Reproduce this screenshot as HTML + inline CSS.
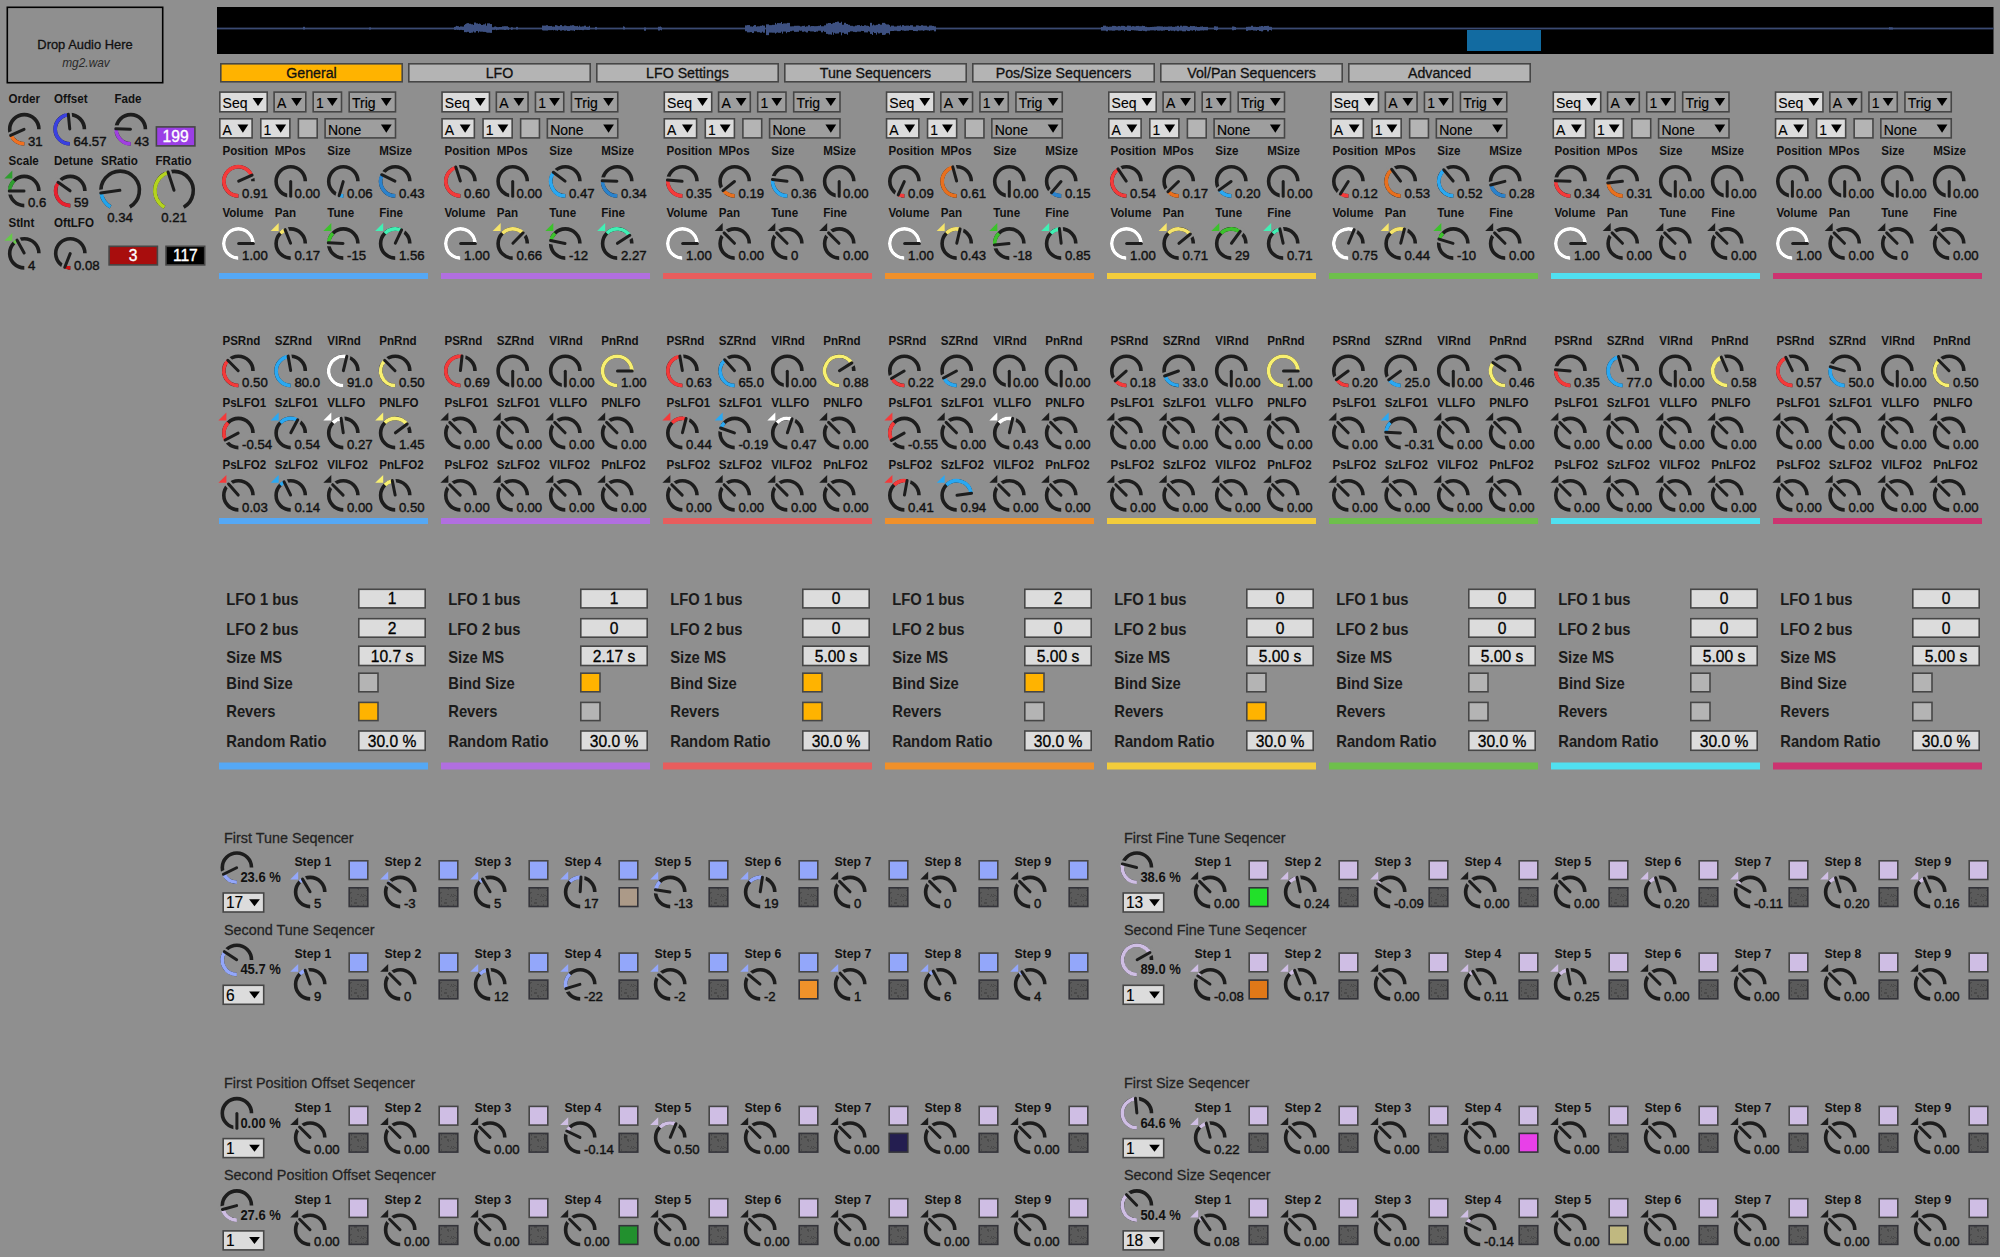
<!DOCTYPE html>
<html><head><meta charset="utf-8"><style>
html,body{margin:0;padding:0;background:#8f8f8f;overflow:hidden}
svg{display:block}
text{font-family:"Liberation Sans", sans-serif}
</style></head><body>
<svg width="2000" height="1257" viewBox="0 0 2000 1257">
<rect x="0" y="0" width="2000" height="1257" fill="#8f8f8f"/>
<defs><pattern id="nz" patternUnits="userSpaceOnUse" width="18" height="18"><rect width="18" height="18" fill="#5a5a5a"/><rect x="14" y="17" width="1" height="1" fill="#4a4a4a"/><rect x="16" y="6" width="1" height="2" fill="#4a4a4a"/><rect x="15" y="5" width="1" height="1" fill="#4a4a4a"/><rect x="9" y="4" width="1" height="2" fill="#4a4a4a"/><rect x="1" y="12" width="1" height="2" fill="#4a4a4a"/><rect x="5" y="0" width="2" height="1" fill="#4a4a4a"/><rect x="1" y="1" width="1" height="1" fill="#4a4a4a"/><rect x="0" y="14" width="1" height="1" fill="#4a4a4a"/><rect x="6" y="16" width="1" height="2" fill="#4a4a4a"/><rect x="9" y="15" width="1" height="2" fill="#4a4a4a"/><rect x="2" y="14" width="2" height="1" fill="#4a4a4a"/><rect x="13" y="17" width="1" height="2" fill="#4a4a4a"/><rect x="8" y="10" width="1" height="2" fill="#4a4a4a"/><rect x="9" y="0" width="1" height="2" fill="#4a4a4a"/><rect x="3" y="12" width="1" height="1" fill="#4a4a4a"/><rect x="12" y="2" width="1" height="2" fill="#4a4a4a"/><rect x="0" y="6" width="1" height="1" fill="#4a4a4a"/><rect x="15" y="12" width="2" height="1" fill="#4a4a4a"/><rect x="13" y="2" width="2" height="2" fill="#4a4a4a"/><rect x="6" y="8" width="1" height="1" fill="#4a4a4a"/><rect x="9" y="10" width="1" height="1" fill="#4a4a4a"/><rect x="3" y="4" width="1" height="2" fill="#4a4a4a"/><rect x="3" y="0" width="1" height="1" fill="#4a4a4a"/><rect x="15" y="5" width="2" height="2" fill="#4a4a4a"/><rect x="6" y="14" width="2" height="1" fill="#4a4a4a"/><rect x="4" y="13" width="2" height="1" fill="#4a4a4a"/></pattern></defs>
<rect x="7.30" y="7.30" width="155.40" height="75.40" fill="none" stroke="#000" stroke-width="1.6"/>
<text transform="translate(85.00,49.00) scale(1,1.0)" font-size="12.9" font-weight="normal" text-anchor="middle" fill="#111" stroke="#111" stroke-width="0.3">Drop Audio Here</text>
<text transform="translate(86.00,66.50) scale(1,1.11)" font-size="11.9" font-weight="normal" text-anchor="middle" fill="#2a2a2a" font-style="italic">mg2.wav</text>
<rect x="217.00" y="7.00" width="1776.50" height="47.00" fill="#000"/>
<rect x="217.00" y="27.60" width="1776.50" height="1.80" fill="#3a4a72"/>
<rect x="303.00" y="26.82" width="2.00" height="2.68" fill="#3d5080"/>
<rect x="369.00" y="27.50" width="1.00" height="2.00" fill="#3d5080"/>
<rect x="370.00" y="27.40" width="1.00" height="2.10" fill="#3d5080"/>
<rect x="454.00" y="26.95" width="1.00" height="2.81" fill="#3d5080"/>
<rect x="455.00" y="26.67" width="1.00" height="3.19" fill="#3d5080"/>
<rect x="456.00" y="25.86" width="1.00" height="3.64" fill="#3d5080"/>
<rect x="457.00" y="26.13" width="1.00" height="3.75" fill="#3d5080"/>
<rect x="458.00" y="26.21" width="1.00" height="3.52" fill="#3d5080"/>
<rect x="459.00" y="26.94" width="1.00" height="3.17" fill="#3d5080"/>
<rect x="460.00" y="26.42" width="2.00" height="3.42" fill="#3d5080"/>
<rect x="462.00" y="26.58" width="2.00" height="3.50" fill="#3d5080"/>
<rect x="464.00" y="24.89" width="1.00" height="7.27" fill="#3d5080"/>
<rect x="465.00" y="24.07" width="1.00" height="8.03" fill="#3d5080"/>
<rect x="466.00" y="23.49" width="1.00" height="8.77" fill="#3d5080"/>
<rect x="467.00" y="23.14" width="2.00" height="8.70" fill="#3d5080"/>
<rect x="469.00" y="23.79" width="2.00" height="9.14" fill="#3d5080"/>
<rect x="471.00" y="24.29" width="2.00" height="8.35" fill="#3d5080"/>
<rect x="473.00" y="24.95" width="1.00" height="6.61" fill="#3d5080"/>
<rect x="474.00" y="22.55" width="2.00" height="9.95" fill="#3d5080"/>
<rect x="476.00" y="23.36" width="2.00" height="7.70" fill="#3d5080"/>
<rect x="478.00" y="23.94" width="1.00" height="8.63" fill="#3d5080"/>
<rect x="479.00" y="23.49" width="1.00" height="7.92" fill="#3d5080"/>
<rect x="480.00" y="23.91" width="1.00" height="7.80" fill="#3d5080"/>
<rect x="481.00" y="24.96" width="2.00" height="6.71" fill="#3d5080"/>
<rect x="483.00" y="24.36" width="2.00" height="7.54" fill="#3d5080"/>
<rect x="485.00" y="23.46" width="1.00" height="8.48" fill="#3d5080"/>
<rect x="486.00" y="25.65" width="1.00" height="6.79" fill="#3d5080"/>
<rect x="487.00" y="23.34" width="3.00" height="9.37" fill="#3d5080"/>
<rect x="490.00" y="24.03" width="2.00" height="8.83" fill="#3d5080"/>
<rect x="492.00" y="27.28" width="2.00" height="2.51" fill="#3d5080"/>
<rect x="494.00" y="26.63" width="1.00" height="3.18" fill="#3d5080"/>
<rect x="495.00" y="26.45" width="1.00" height="3.05" fill="#3d5080"/>
<rect x="496.00" y="26.86" width="1.00" height="3.29" fill="#3d5080"/>
<rect x="497.00" y="27.21" width="2.00" height="2.56" fill="#3d5080"/>
<rect x="499.00" y="26.99" width="3.00" height="2.52" fill="#3d5080"/>
<rect x="502.00" y="26.35" width="2.00" height="3.28" fill="#3d5080"/>
<rect x="504.00" y="26.21" width="2.00" height="3.75" fill="#3d5080"/>
<rect x="506.00" y="26.25" width="2.00" height="3.28" fill="#3d5080"/>
<rect x="508.00" y="27.13" width="1.00" height="2.81" fill="#3d5080"/>
<rect x="511.00" y="27.20" width="1.00" height="2.69" fill="#3d5080"/>
<rect x="512.00" y="27.37" width="1.00" height="2.15" fill="#3d5080"/>
<rect x="516.00" y="26.89" width="2.00" height="2.61" fill="#3d5080"/>
<rect x="542.00" y="25.56" width="1.00" height="4.71" fill="#3d5080"/>
<rect x="543.00" y="25.62" width="3.00" height="4.89" fill="#3d5080"/>
<rect x="546.00" y="25.22" width="2.00" height="5.34" fill="#3d5080"/>
<rect x="548.00" y="26.05" width="3.00" height="4.09" fill="#3d5080"/>
<rect x="551.00" y="25.91" width="1.00" height="4.23" fill="#3d5080"/>
<rect x="552.00" y="26.59" width="1.00" height="3.34" fill="#3d5080"/>
<rect x="553.00" y="26.52" width="1.00" height="3.84" fill="#3d5080"/>
<rect x="554.00" y="26.70" width="1.00" height="3.17" fill="#3d5080"/>
<rect x="555.00" y="25.13" width="1.00" height="5.24" fill="#3d5080"/>
<rect x="556.00" y="25.26" width="1.00" height="5.12" fill="#3d5080"/>
<rect x="557.00" y="25.65" width="1.00" height="5.10" fill="#3d5080"/>
<rect x="558.00" y="26.10" width="2.00" height="3.74" fill="#3d5080"/>
<rect x="560.00" y="25.06" width="2.00" height="5.58" fill="#3d5080"/>
<rect x="562.00" y="26.19" width="2.00" height="4.01" fill="#3d5080"/>
<rect x="564.00" y="25.48" width="2.00" height="5.18" fill="#3d5080"/>
<rect x="566.00" y="25.85" width="1.00" height="4.43" fill="#3d5080"/>
<rect x="567.00" y="26.10" width="3.00" height="4.85" fill="#3d5080"/>
<rect x="570.00" y="25.45" width="1.00" height="4.96" fill="#3d5080"/>
<rect x="571.00" y="25.55" width="1.00" height="4.81" fill="#3d5080"/>
<rect x="572.00" y="25.20" width="2.00" height="5.29" fill="#3d5080"/>
<rect x="574.00" y="25.82" width="1.00" height="5.25" fill="#3d5080"/>
<rect x="575.00" y="26.12" width="2.00" height="3.78" fill="#3d5080"/>
<rect x="577.00" y="25.89" width="1.00" height="4.18" fill="#3d5080"/>
<rect x="578.00" y="26.73" width="1.00" height="3.08" fill="#3d5080"/>
<rect x="579.00" y="25.64" width="1.00" height="4.41" fill="#3d5080"/>
<rect x="580.00" y="26.64" width="2.00" height="3.33" fill="#3d5080"/>
<rect x="582.00" y="26.39" width="2.00" height="3.79" fill="#3d5080"/>
<rect x="584.00" y="25.69" width="2.00" height="4.01" fill="#3d5080"/>
<rect x="586.00" y="26.86" width="1.00" height="2.93" fill="#3d5080"/>
<rect x="587.00" y="26.72" width="2.00" height="3.20" fill="#3d5080"/>
<rect x="589.00" y="25.84" width="1.00" height="3.95" fill="#3d5080"/>
<rect x="595.00" y="26.94" width="2.00" height="2.56" fill="#3d5080"/>
<rect x="623.00" y="26.30" width="1.00" height="3.20" fill="#3d5080"/>
<rect x="624.00" y="26.77" width="1.00" height="2.73" fill="#3d5080"/>
<rect x="644.00" y="27.50" width="2.00" height="3.24" fill="#3d5080"/>
<rect x="658.00" y="26.79" width="2.00" height="3.73" fill="#3d5080"/>
<rect x="660.00" y="26.50" width="1.00" height="3.38" fill="#3d5080"/>
<rect x="661.00" y="27.27" width="1.00" height="3.08" fill="#3d5080"/>
<rect x="745.00" y="25.37" width="2.00" height="5.85" fill="#3d5080"/>
<rect x="747.00" y="25.08" width="3.00" height="7.26" fill="#3d5080"/>
<rect x="750.00" y="26.44" width="2.00" height="5.66" fill="#3d5080"/>
<rect x="752.00" y="26.68" width="1.00" height="6.36" fill="#3d5080"/>
<rect x="753.00" y="25.83" width="1.00" height="7.12" fill="#3d5080"/>
<rect x="754.00" y="25.07" width="2.00" height="6.26" fill="#3d5080"/>
<rect x="756.00" y="26.65" width="1.00" height="4.71" fill="#3d5080"/>
<rect x="757.00" y="26.30" width="3.00" height="5.89" fill="#3d5080"/>
<rect x="760.00" y="25.80" width="2.00" height="6.93" fill="#3d5080"/>
<rect x="762.00" y="25.20" width="1.00" height="6.48" fill="#3d5080"/>
<rect x="763.00" y="25.61" width="2.00" height="7.09" fill="#3d5080"/>
<rect x="766.00" y="24.34" width="3.00" height="10.79" fill="#3d5080"/>
<rect x="769.00" y="25.14" width="3.00" height="7.46" fill="#3d5080"/>
<rect x="772.00" y="24.84" width="3.00" height="7.87" fill="#3d5080"/>
<rect x="775.00" y="22.89" width="1.00" height="10.74" fill="#3d5080"/>
<rect x="776.00" y="24.33" width="1.00" height="8.47" fill="#3d5080"/>
<rect x="777.00" y="23.06" width="1.00" height="9.33" fill="#3d5080"/>
<rect x="778.00" y="23.15" width="3.00" height="9.68" fill="#3d5080"/>
<rect x="781.00" y="21.99" width="1.00" height="9.67" fill="#3d5080"/>
<rect x="782.00" y="23.99" width="1.00" height="9.64" fill="#3d5080"/>
<rect x="783.00" y="23.41" width="3.00" height="8.17" fill="#3d5080"/>
<rect x="786.00" y="23.44" width="1.00" height="9.75" fill="#3d5080"/>
<rect x="787.00" y="22.90" width="3.00" height="9.15" fill="#3d5080"/>
<rect x="790.00" y="26.38" width="2.00" height="4.80" fill="#3d5080"/>
<rect x="792.00" y="26.30" width="2.00" height="4.41" fill="#3d5080"/>
<rect x="794.00" y="25.79" width="3.00" height="6.06" fill="#3d5080"/>
<rect x="797.00" y="25.73" width="2.00" height="6.04" fill="#3d5080"/>
<rect x="799.00" y="25.85" width="1.00" height="4.68" fill="#3d5080"/>
<rect x="800.00" y="26.46" width="1.00" height="4.36" fill="#3d5080"/>
<rect x="801.00" y="26.41" width="1.00" height="4.24" fill="#3d5080"/>
<rect x="802.00" y="25.92" width="2.00" height="5.86" fill="#3d5080"/>
<rect x="804.00" y="25.71" width="1.00" height="5.65" fill="#3d5080"/>
<rect x="805.00" y="26.80" width="1.00" height="4.95" fill="#3d5080"/>
<rect x="806.00" y="26.34" width="2.00" height="6.10" fill="#3d5080"/>
<rect x="808.00" y="25.24" width="2.00" height="5.67" fill="#3d5080"/>
<rect x="810.00" y="26.43" width="1.00" height="5.00" fill="#3d5080"/>
<rect x="811.00" y="26.03" width="3.00" height="5.38" fill="#3d5080"/>
<rect x="814.00" y="26.17" width="2.00" height="5.82" fill="#3d5080"/>
<rect x="816.00" y="26.14" width="1.00" height="5.34" fill="#3d5080"/>
<rect x="817.00" y="26.07" width="1.00" height="5.53" fill="#3d5080"/>
<rect x="818.00" y="25.85" width="2.00" height="4.87" fill="#3d5080"/>
<rect x="820.00" y="25.10" width="1.00" height="5.70" fill="#3d5080"/>
<rect x="821.00" y="26.25" width="2.00" height="6.09" fill="#3d5080"/>
<rect x="823.00" y="26.25" width="1.00" height="4.60" fill="#3d5080"/>
<rect x="824.00" y="25.30" width="2.00" height="6.60" fill="#3d5080"/>
<rect x="826.00" y="23.56" width="2.00" height="10.31" fill="#3d5080"/>
<rect x="828.00" y="23.02" width="3.00" height="11.39" fill="#3d5080"/>
<rect x="831.00" y="23.98" width="1.00" height="10.76" fill="#3d5080"/>
<rect x="832.00" y="23.50" width="1.00" height="8.84" fill="#3d5080"/>
<rect x="833.00" y="22.81" width="1.00" height="11.94" fill="#3d5080"/>
<rect x="834.00" y="22.89" width="1.00" height="9.94" fill="#3d5080"/>
<rect x="835.00" y="22.05" width="2.00" height="11.54" fill="#3d5080"/>
<rect x="837.00" y="21.62" width="2.00" height="11.86" fill="#3d5080"/>
<rect x="839.00" y="22.85" width="2.00" height="9.39" fill="#3d5080"/>
<rect x="841.00" y="21.80" width="1.00" height="13.49" fill="#3d5080"/>
<rect x="842.00" y="24.73" width="2.00" height="8.03" fill="#3d5080"/>
<rect x="844.00" y="22.83" width="2.00" height="11.03" fill="#3d5080"/>
<rect x="846.00" y="23.94" width="1.00" height="9.81" fill="#3d5080"/>
<rect x="847.00" y="24.01" width="1.00" height="10.74" fill="#3d5080"/>
<rect x="848.00" y="24.78" width="2.00" height="7.38" fill="#3d5080"/>
<rect x="850.00" y="25.79" width="3.00" height="5.53" fill="#3d5080"/>
<rect x="853.00" y="26.29" width="2.00" height="5.59" fill="#3d5080"/>
<rect x="855.00" y="25.62" width="2.00" height="6.48" fill="#3d5080"/>
<rect x="857.00" y="25.10" width="2.00" height="6.48" fill="#3d5080"/>
<rect x="859.00" y="25.08" width="1.00" height="6.57" fill="#3d5080"/>
<rect x="860.00" y="26.03" width="1.00" height="5.63" fill="#3d5080"/>
<rect x="861.00" y="25.32" width="1.00" height="5.61" fill="#3d5080"/>
<rect x="862.00" y="25.99" width="2.00" height="5.03" fill="#3d5080"/>
<rect x="864.00" y="25.26" width="2.00" height="7.11" fill="#3d5080"/>
<rect x="866.00" y="25.71" width="2.00" height="6.71" fill="#3d5080"/>
<rect x="868.00" y="25.94" width="1.00" height="5.30" fill="#3d5080"/>
<rect x="869.00" y="26.69" width="1.00" height="5.01" fill="#3d5080"/>
<rect x="870.00" y="22.83" width="2.00" height="11.08" fill="#3d5080"/>
<rect x="872.00" y="25.41" width="1.00" height="9.61" fill="#3d5080"/>
<rect x="873.00" y="24.52" width="1.00" height="7.58" fill="#3d5080"/>
<rect x="874.00" y="25.27" width="2.00" height="7.75" fill="#3d5080"/>
<rect x="876.00" y="24.82" width="1.00" height="9.84" fill="#3d5080"/>
<rect x="877.00" y="24.77" width="1.00" height="7.62" fill="#3d5080"/>
<rect x="878.00" y="23.89" width="2.00" height="9.51" fill="#3d5080"/>
<rect x="880.00" y="24.66" width="2.00" height="8.20" fill="#3d5080"/>
<rect x="882.00" y="22.87" width="3.00" height="12.05" fill="#3d5080"/>
<rect x="885.00" y="23.69" width="1.00" height="10.77" fill="#3d5080"/>
<rect x="886.00" y="24.43" width="3.00" height="8.75" fill="#3d5080"/>
<rect x="889.00" y="25.09" width="1.00" height="9.40" fill="#3d5080"/>
<rect x="890.00" y="26.63" width="1.00" height="4.52" fill="#3d5080"/>
<rect x="891.00" y="25.66" width="3.00" height="5.34" fill="#3d5080"/>
<rect x="894.00" y="26.47" width="3.00" height="4.25" fill="#3d5080"/>
<rect x="897.00" y="25.76" width="3.00" height="5.36" fill="#3d5080"/>
<rect x="900.00" y="25.34" width="1.00" height="5.47" fill="#3d5080"/>
<rect x="901.00" y="26.56" width="1.00" height="3.50" fill="#3d5080"/>
<rect x="902.00" y="25.12" width="2.00" height="5.40" fill="#3d5080"/>
<rect x="904.00" y="25.78" width="2.00" height="5.08" fill="#3d5080"/>
<rect x="906.00" y="25.58" width="3.00" height="5.10" fill="#3d5080"/>
<rect x="909.00" y="25.95" width="1.00" height="4.15" fill="#3d5080"/>
<rect x="910.00" y="25.22" width="3.00" height="4.91" fill="#3d5080"/>
<rect x="913.00" y="26.59" width="3.00" height="4.42" fill="#3d5080"/>
<rect x="916.00" y="25.36" width="2.00" height="5.80" fill="#3d5080"/>
<rect x="918.00" y="25.50" width="1.00" height="4.79" fill="#3d5080"/>
<rect x="919.00" y="25.88" width="2.00" height="4.64" fill="#3d5080"/>
<rect x="921.00" y="25.20" width="2.00" height="5.20" fill="#3d5080"/>
<rect x="923.00" y="25.68" width="1.00" height="5.20" fill="#3d5080"/>
<rect x="924.00" y="25.71" width="1.00" height="4.75" fill="#3d5080"/>
<rect x="925.00" y="25.68" width="2.00" height="4.51" fill="#3d5080"/>
<rect x="927.00" y="26.60" width="2.00" height="3.77" fill="#3d5080"/>
<rect x="929.00" y="25.56" width="1.00" height="5.37" fill="#3d5080"/>
<rect x="930.00" y="25.53" width="2.00" height="4.86" fill="#3d5080"/>
<rect x="932.00" y="25.93" width="2.00" height="4.23" fill="#3d5080"/>
<rect x="934.00" y="26.37" width="2.00" height="4.97" fill="#3d5080"/>
<rect x="1101.00" y="26.98" width="2.00" height="3.66" fill="#3d5080"/>
<rect x="1103.00" y="25.67" width="3.00" height="4.95" fill="#3d5080"/>
<rect x="1106.00" y="26.47" width="2.00" height="4.79" fill="#3d5080"/>
<rect x="1108.00" y="26.90" width="1.00" height="3.23" fill="#3d5080"/>
<rect x="1109.00" y="26.64" width="3.00" height="3.85" fill="#3d5080"/>
<rect x="1112.00" y="25.87" width="3.00" height="4.83" fill="#3d5080"/>
<rect x="1115.00" y="26.03" width="1.00" height="4.29" fill="#3d5080"/>
<rect x="1116.00" y="26.46" width="2.00" height="3.76" fill="#3d5080"/>
<rect x="1118.00" y="26.06" width="2.00" height="4.49" fill="#3d5080"/>
<rect x="1120.00" y="26.43" width="1.00" height="4.09" fill="#3d5080"/>
<rect x="1121.00" y="25.84" width="1.00" height="4.16" fill="#3d5080"/>
<rect x="1122.00" y="25.85" width="2.00" height="4.32" fill="#3d5080"/>
<rect x="1124.00" y="26.02" width="1.00" height="5.22" fill="#3d5080"/>
<rect x="1125.00" y="26.65" width="2.00" height="3.44" fill="#3d5080"/>
<rect x="1127.00" y="25.63" width="2.00" height="5.18" fill="#3d5080"/>
<rect x="1129.00" y="25.73" width="2.00" height="5.31" fill="#3d5080"/>
<rect x="1131.00" y="26.61" width="1.00" height="3.46" fill="#3d5080"/>
<rect x="1132.00" y="26.13" width="2.00" height="4.08" fill="#3d5080"/>
<rect x="1134.00" y="26.40" width="2.00" height="4.03" fill="#3d5080"/>
<rect x="1136.00" y="25.92" width="2.00" height="4.67" fill="#3d5080"/>
<rect x="1138.00" y="25.88" width="1.00" height="4.98" fill="#3d5080"/>
<rect x="1139.00" y="26.24" width="3.00" height="4.74" fill="#3d5080"/>
<rect x="1142.00" y="25.72" width="1.00" height="4.85" fill="#3d5080"/>
<rect x="1143.00" y="25.97" width="2.00" height="4.92" fill="#3d5080"/>
<rect x="1145.00" y="26.77" width="2.00" height="4.49" fill="#3d5080"/>
<rect x="1147.00" y="27.16" width="3.00" height="3.49" fill="#3d5080"/>
<rect x="1150.00" y="26.99" width="2.00" height="3.36" fill="#3d5080"/>
<rect x="1152.00" y="26.85" width="2.00" height="3.47" fill="#3d5080"/>
<rect x="1154.00" y="26.69" width="2.00" height="3.86" fill="#3d5080"/>
<rect x="1156.00" y="26.59" width="1.00" height="3.51" fill="#3d5080"/>
<rect x="1157.00" y="26.30" width="3.00" height="4.38" fill="#3d5080"/>
<rect x="1160.00" y="26.38" width="1.00" height="4.08" fill="#3d5080"/>
<rect x="1161.00" y="26.41" width="2.00" height="4.34" fill="#3d5080"/>
<rect x="1163.00" y="26.88" width="1.00" height="3.59" fill="#3d5080"/>
<rect x="1164.00" y="26.56" width="1.00" height="3.95" fill="#3d5080"/>
<rect x="1165.00" y="26.72" width="3.00" height="3.31" fill="#3d5080"/>
<rect x="1168.00" y="26.47" width="2.00" height="4.55" fill="#3d5080"/>
<rect x="1170.00" y="26.48" width="1.00" height="3.98" fill="#3d5080"/>
<rect x="1171.00" y="26.32" width="1.00" height="4.47" fill="#3d5080"/>
<rect x="1172.00" y="26.83" width="2.00" height="3.87" fill="#3d5080"/>
<rect x="1174.00" y="26.87" width="1.00" height="4.36" fill="#3d5080"/>
<rect x="1175.00" y="26.45" width="2.00" height="4.16" fill="#3d5080"/>
<rect x="1177.00" y="25.83" width="2.00" height="5.37" fill="#3d5080"/>
<rect x="1179.00" y="26.83" width="1.00" height="3.76" fill="#3d5080"/>
<rect x="1180.00" y="25.67" width="2.00" height="5.00" fill="#3d5080"/>
<rect x="1182.00" y="26.46" width="1.00" height="4.81" fill="#3d5080"/>
<rect x="1183.00" y="25.82" width="3.00" height="5.51" fill="#3d5080"/>
<rect x="1186.00" y="25.92" width="1.00" height="4.38" fill="#3d5080"/>
<rect x="1187.00" y="26.28" width="1.00" height="4.66" fill="#3d5080"/>
<rect x="1188.00" y="26.88" width="2.00" height="4.19" fill="#3d5080"/>
<rect x="1190.00" y="25.92" width="1.00" height="4.40" fill="#3d5080"/>
<rect x="1191.00" y="26.11" width="1.00" height="4.31" fill="#3d5080"/>
<rect x="1192.00" y="26.14" width="1.00" height="4.59" fill="#3d5080"/>
<rect x="1193.00" y="26.04" width="2.00" height="4.11" fill="#3d5080"/>
<rect x="1195.00" y="26.59" width="1.00" height="4.71" fill="#3d5080"/>
<rect x="1196.00" y="26.47" width="1.00" height="3.84" fill="#3d5080"/>
<rect x="1197.00" y="27.00" width="3.00" height="3.74" fill="#3d5080"/>
<rect x="1200.00" y="26.62" width="2.00" height="3.82" fill="#3d5080"/>
<rect x="1202.00" y="26.35" width="1.00" height="3.98" fill="#3d5080"/>
<rect x="1203.00" y="26.96" width="1.00" height="3.61" fill="#3d5080"/>
<rect x="1204.00" y="26.92" width="2.00" height="3.34" fill="#3d5080"/>
<rect x="1206.00" y="26.89" width="2.00" height="3.42" fill="#3d5080"/>
<rect x="1214.00" y="26.28" width="2.00" height="3.67" fill="#3d5080"/>
<rect x="1216.00" y="26.53" width="1.00" height="3.96" fill="#3d5080"/>
<rect x="1217.00" y="26.55" width="1.00" height="3.37" fill="#3d5080"/>
<rect x="1232.00" y="26.49" width="2.00" height="3.77" fill="#3d5080"/>
<rect x="1234.00" y="26.75" width="1.00" height="3.17" fill="#3d5080"/>
<rect x="1235.00" y="27.05" width="1.00" height="2.90" fill="#3d5080"/>
<rect x="1246.00" y="26.85" width="2.00" height="4.01" fill="#3d5080"/>
<rect x="1248.00" y="26.74" width="3.00" height="3.56" fill="#3d5080"/>
<rect x="1251.00" y="25.75" width="2.00" height="4.33" fill="#3d5080"/>
<rect x="1253.00" y="26.80" width="3.00" height="3.74" fill="#3d5080"/>
<rect x="1256.00" y="26.97" width="1.00" height="3.85" fill="#3d5080"/>
<rect x="1257.00" y="26.93" width="2.00" height="3.15" fill="#3d5080"/>
<rect x="1259.00" y="26.38" width="2.00" height="4.60" fill="#3d5080"/>
<rect x="1261.00" y="25.99" width="2.00" height="5.38" fill="#3d5080"/>
<rect x="1263.00" y="26.55" width="1.00" height="3.71" fill="#3d5080"/>
<rect x="1264.00" y="25.97" width="3.00" height="4.07" fill="#3d5080"/>
<rect x="1267.00" y="25.85" width="2.00" height="5.51" fill="#3d5080"/>
<rect x="1269.00" y="26.77" width="2.00" height="3.24" fill="#3d5080"/>
<rect x="1271.00" y="26.89" width="1.00" height="3.69" fill="#3d5080"/>
<rect x="1889.00" y="27.14" width="1.00" height="2.36" fill="#3d5080"/>
<rect x="1890.00" y="27.31" width="2.00" height="2.19" fill="#3d5080"/>
<rect x="1892.00" y="27.50" width="1.00" height="2.00" fill="#3d5080"/>
<rect x="1467.00" y="30.00" width="74.00" height="21.00" fill="#126ba1"/>
<rect x="220.80" y="63.80" width="181.40" height="18.00" fill="#ffb300" stroke="#464646" stroke-width="1.6"/>
<text transform="translate(311.50,77.50) scale(1,1.04)" font-size="14.2" font-weight="normal" text-anchor="middle" fill="#111" stroke="#111" stroke-width="0.3">General</text>
<rect x="408.80" y="63.80" width="181.40" height="18.00" fill="#b4b4b4" stroke="#464646" stroke-width="1.6"/>
<text transform="translate(499.50,77.50) scale(1,1.04)" font-size="14.2" font-weight="normal" text-anchor="middle" fill="#111" stroke="#111" stroke-width="0.3">LFO</text>
<rect x="596.80" y="63.80" width="181.40" height="18.00" fill="#b4b4b4" stroke="#464646" stroke-width="1.6"/>
<text transform="translate(687.50,77.50) scale(1,1.04)" font-size="14.2" font-weight="normal" text-anchor="middle" fill="#111" stroke="#111" stroke-width="0.3">LFO Settings</text>
<rect x="784.80" y="63.80" width="181.40" height="18.00" fill="#b4b4b4" stroke="#464646" stroke-width="1.6"/>
<text transform="translate(875.50,77.50) scale(1,1.04)" font-size="14.2" font-weight="normal" text-anchor="middle" fill="#111" stroke="#111" stroke-width="0.3">Tune Sequencers</text>
<rect x="972.80" y="63.80" width="181.40" height="18.00" fill="#b4b4b4" stroke="#464646" stroke-width="1.6"/>
<text transform="translate(1063.50,77.50) scale(1,1.04)" font-size="14.2" font-weight="normal" text-anchor="middle" fill="#111" stroke="#111" stroke-width="0.3">Pos/Size Sequencers</text>
<rect x="1160.80" y="63.80" width="181.40" height="18.00" fill="#b4b4b4" stroke="#464646" stroke-width="1.6"/>
<text transform="translate(1251.50,77.50) scale(1,1.04)" font-size="14.2" font-weight="normal" text-anchor="middle" fill="#111" stroke="#111" stroke-width="0.3">Vol/Pan Sequencers</text>
<rect x="1348.80" y="63.80" width="181.40" height="18.00" fill="#b4b4b4" stroke="#464646" stroke-width="1.6"/>
<text transform="translate(1439.50,77.50) scale(1,1.04)" font-size="14.2" font-weight="normal" text-anchor="middle" fill="#111" stroke="#111" stroke-width="0.3">Advanced</text>
<rect x="219.80" y="92.10" width="47.40" height="19.70" fill="#dcdcdc" stroke="#464646" stroke-width="1.6"/>
<text transform="translate(222.60,107.80) scale(1,1.11)" font-size="14" font-weight="normal" text-anchor="start" fill="#000" stroke="#000" stroke-width="0.15">Seq</text>
<path d="M252.60 97.90L263.40 97.90L258.00 106.00Z" fill="#000"/>
<rect x="274.10" y="92.10" width="31.70" height="19.70" fill="#9e9e9e" stroke="#464646" stroke-width="1.6"/>
<text transform="translate(276.90,107.80) scale(1,1.11)" font-size="14" font-weight="normal" text-anchor="start" fill="#000" stroke="#000" stroke-width="0.15">A</text>
<path d="M291.20 97.90L302.00 97.90L296.60 106.00Z" fill="#000"/>
<rect x="313.20" y="92.10" width="28.30" height="19.70" fill="#9e9e9e" stroke="#464646" stroke-width="1.6"/>
<text transform="translate(316.00,107.80) scale(1,1.11)" font-size="14" font-weight="normal" text-anchor="start" fill="#000" stroke="#000" stroke-width="0.15">1</text>
<path d="M326.90 97.90L337.70 97.90L332.30 106.00Z" fill="#000"/>
<rect x="349.20" y="92.10" width="46.30" height="19.70" fill="#9e9e9e" stroke="#464646" stroke-width="1.6"/>
<text transform="translate(352.00,107.80) scale(1,1.11)" font-size="14" font-weight="normal" text-anchor="start" fill="#000" stroke="#000" stroke-width="0.15">Trig</text>
<path d="M380.90 97.90L391.70 97.90L386.30 106.00Z" fill="#000"/>
<rect x="219.80" y="118.80" width="32.30" height="19.10" fill="#dcdcdc" stroke="#464646" stroke-width="1.6"/>
<text transform="translate(222.60,134.50) scale(1,1.11)" font-size="14" font-weight="normal" text-anchor="start" fill="#000" stroke="#000" stroke-width="0.15">A</text>
<path d="M237.50 124.60L248.30 124.60L242.90 132.70Z" fill="#000"/>
<rect x="260.80" y="118.80" width="29.10" height="19.10" fill="#dcdcdc" stroke="#464646" stroke-width="1.6"/>
<text transform="translate(263.60,134.50) scale(1,1.11)" font-size="14" font-weight="normal" text-anchor="start" fill="#000" stroke="#000" stroke-width="0.15">1</text>
<path d="M275.30 124.60L286.10 124.60L280.70 132.70Z" fill="#000"/>
<rect x="298.40" y="118.80" width="18.80" height="19.10" fill="#b4b4b4" stroke="#464646" stroke-width="1.6"/>
<rect x="325.10" y="118.80" width="70.40" height="19.10" fill="#9e9e9e" stroke="#464646" stroke-width="1.6"/>
<text transform="translate(327.90,134.50) scale(1,1.11)" font-size="14" font-weight="normal" text-anchor="start" fill="#000" stroke="#000" stroke-width="0.15">None</text>
<path d="M380.90 124.60L391.70 124.60L386.30 132.70Z" fill="#000"/>
<text transform="translate(222.40,154.50) scale(1,1.11)" font-size="11.6" font-weight="bold" text-anchor="start" fill="#111">Position</text>
<path d="M238.40 195.90A14.6 14.6 0 1 1 253.00 181.30" stroke="#1d1d1d" stroke-width="3.6" fill="none"/>
<line x1="247.61" y1="177.14" x2="255.81" y2="173.44" stroke="#8f8f8f" stroke-width="7"/>
<path d="M238.40 195.90A14.6 14.6 0 1 1 251.71 175.29" stroke="#f43a3a" stroke-width="3.6" fill="none"/>
<line x1="238.67" y1="181.18" x2="252.07" y2="175.13" stroke="#1d1d1d" stroke-width="3" stroke-linecap="round"/>
<text transform="translate(242.10,197.70) scale(1,1.03)" font-size="13.2" font-weight="normal" text-anchor="start" fill="#111" stroke="#111" stroke-width="0.4">0.91</text>
<text transform="translate(274.70,154.50) scale(1,1.11)" font-size="11.6" font-weight="bold" text-anchor="start" fill="#111">MPos</text>
<path d="M290.70 195.90A14.6 14.6 0 1 1 305.30 181.30" stroke="#1d1d1d" stroke-width="3.6" fill="none"/>
<line x1="290.70" y1="191.40" x2="290.70" y2="200.40" stroke="#8f8f8f" stroke-width="7"/>
<line x1="290.70" y1="181.60" x2="290.70" y2="196.30" stroke="#1d1d1d" stroke-width="3" stroke-linecap="round"/>
<text transform="translate(294.40,197.70) scale(1,1.03)" font-size="13.2" font-weight="normal" text-anchor="start" fill="#111" stroke="#111" stroke-width="0.4">0.00</text>
<text transform="translate(327.30,154.50) scale(1,1.11)" font-size="11.6" font-weight="bold" text-anchor="start" fill="#111">Size</text>
<path d="M343.30 195.90A14.6 14.6 0 1 1 357.90 181.30" stroke="#1d1d1d" stroke-width="3.6" fill="none"/>
<line x1="340.48" y1="191.00" x2="337.97" y2="199.64" stroke="#8f8f8f" stroke-width="7"/>
<path d="M343.30 195.90A14.6 14.6 0 0 1 339.23 195.32" stroke="#2aa8f2" stroke-width="3.6" fill="none"/>
<line x1="343.22" y1="181.59" x2="339.12" y2="195.70" stroke="#1d1d1d" stroke-width="3" stroke-linecap="round"/>
<text transform="translate(347.00,197.70) scale(1,1.03)" font-size="13.2" font-weight="normal" text-anchor="start" fill="#111" stroke="#111" stroke-width="0.4">0.06</text>
<text transform="translate(379.20,154.50) scale(1,1.11)" font-size="11.6" font-weight="bold" text-anchor="start" fill="#111">MSize</text>
<path d="M395.20 195.90A14.6 14.6 0 1 1 409.80 181.30" stroke="#1d1d1d" stroke-width="3.6" fill="none"/>
<line x1="386.13" y1="176.86" x2="378.05" y2="172.90" stroke="#8f8f8f" stroke-width="7"/>
<path d="M395.20 195.90A14.6 14.6 0 0 1 382.09 174.88" stroke="#2a82cc" stroke-width="3.6" fill="none"/>
<line x1="394.93" y1="181.17" x2="381.73" y2="174.70" stroke="#1d1d1d" stroke-width="3" stroke-linecap="round"/>
<text transform="translate(398.90,197.70) scale(1,1.03)" font-size="13.2" font-weight="normal" text-anchor="start" fill="#111" stroke="#111" stroke-width="0.4">0.43</text>
<text transform="translate(222.40,217.00) scale(1,1.11)" font-size="11.6" font-weight="bold" text-anchor="start" fill="#111">Volume</text>
<path d="M238.40 258.10A14.6 14.6 0 1 1 253.00 243.50" stroke="#1d1d1d" stroke-width="3.6" fill="none"/>
<line x1="248.50" y1="243.50" x2="257.50" y2="243.50" stroke="#8f8f8f" stroke-width="7"/>
<path d="M238.40 258.10A14.6 14.6 0 1 1 253.00 243.50" stroke="#ffffff" stroke-width="3.6" fill="none"/>
<line x1="238.70" y1="243.50" x2="253.40" y2="243.50" stroke="#1d1d1d" stroke-width="3" stroke-linecap="round"/>
<text transform="translate(242.10,259.90) scale(1,1.03)" font-size="13.2" font-weight="normal" text-anchor="start" fill="#111" stroke="#111" stroke-width="0.4">1.00</text>
<text transform="translate(274.70,217.00) scale(1,1.11)" font-size="11.6" font-weight="bold" text-anchor="start" fill="#111">Pan</text>
<path d="M290.70 258.10A14.6 14.6 0 1 1 305.30 243.50" stroke="#1d1d1d" stroke-width="3.6" fill="none"/>
<line x1="286.91" y1="234.14" x2="283.53" y2="225.80" stroke="#8f8f8f" stroke-width="7"/>
<path d="M280.38 233.18A14.6 14.6 0 0 1 285.22 229.97" stroke="#f5e46a" stroke-width="3.6" fill="none"/>
<line x1="290.59" y1="243.22" x2="285.07" y2="229.60" stroke="#1d1d1d" stroke-width="3" stroke-linecap="round"/>
<path d="M278.70 223.10L278.70 231.00L270.70 231.00Z" fill="#f5e46a"/>
<text transform="translate(294.40,259.90) scale(1,1.03)" font-size="13.2" font-weight="normal" text-anchor="start" fill="#111" stroke="#111" stroke-width="0.4">0.17</text>
<text transform="translate(327.30,217.00) scale(1,1.11)" font-size="11.6" font-weight="bold" text-anchor="start" fill="#111">Tune</text>
<path d="M343.30 258.10A14.6 14.6 0 1 1 357.90 243.50" stroke="#1d1d1d" stroke-width="3.6" fill="none"/>
<line x1="333.21" y1="243.00" x2="324.22" y2="242.56" stroke="#8f8f8f" stroke-width="7"/>
<path d="M328.72 242.78A14.6 14.6 0 0 1 332.98 233.18" stroke="#3cc22c" stroke-width="3.6" fill="none"/>
<line x1="343.00" y1="243.49" x2="328.32" y2="242.76" stroke="#1d1d1d" stroke-width="3" stroke-linecap="round"/>
<path d="M331.30 223.10L331.30 231.00L323.30 231.00Z" fill="#3cc22c"/>
<text transform="translate(347.00,259.90) scale(1,1.03)" font-size="13.2" font-weight="normal" text-anchor="start" fill="#111" stroke="#111" stroke-width="0.4">-15</text>
<text transform="translate(379.20,217.00) scale(1,1.11)" font-size="11.6" font-weight="bold" text-anchor="start" fill="#111">Fine</text>
<path d="M395.20 258.10A14.6 14.6 0 1 1 409.80 243.50" stroke="#1d1d1d" stroke-width="3.6" fill="none"/>
<line x1="399.50" y1="234.36" x2="403.33" y2="226.22" stroke="#8f8f8f" stroke-width="7"/>
<path d="M384.88 233.18A14.6 14.6 0 0 1 401.42 230.29" stroke="#40f0b4" stroke-width="3.6" fill="none"/>
<line x1="395.33" y1="243.23" x2="401.59" y2="229.93" stroke="#1d1d1d" stroke-width="3" stroke-linecap="round"/>
<path d="M383.20 223.10L383.20 231.00L375.20 231.00Z" fill="#40f0b4"/>
<text transform="translate(398.90,259.90) scale(1,1.03)" font-size="13.2" font-weight="normal" text-anchor="start" fill="#111" stroke="#111" stroke-width="0.4">1.56</text>
<rect x="219.00" y="273.00" width="209.00" height="6.00" fill="#55a8f5"/>
<text transform="translate(222.40,344.75) scale(1,1.11)" font-size="11.6" font-weight="bold" text-anchor="start" fill="#111">PSRnd</text>
<path d="M238.40 385.50A14.6 14.6 0 1 1 253.00 370.90" stroke="#1d1d1d" stroke-width="3.6" fill="none"/>
<line x1="231.26" y1="363.76" x2="224.89" y2="357.39" stroke="#8f8f8f" stroke-width="7"/>
<path d="M238.40 385.50A14.6 14.6 0 0 1 228.08 360.58" stroke="#f43a3a" stroke-width="3.6" fill="none"/>
<line x1="238.19" y1="370.69" x2="227.79" y2="360.29" stroke="#1d1d1d" stroke-width="3" stroke-linecap="round"/>
<text transform="translate(242.10,387.30) scale(1,1.03)" font-size="13.2" font-weight="normal" text-anchor="start" fill="#111" stroke="#111" stroke-width="0.4">0.50</text>
<text transform="translate(222.40,406.60) scale(1,1.11)" font-size="11.6" font-weight="bold" text-anchor="start" fill="#111">PsLFO1</text>
<path d="M238.40 447.60A14.6 14.6 0 1 1 253.00 433.00" stroke="#1d1d1d" stroke-width="3.6" fill="none"/>
<line x1="229.47" y1="437.73" x2="221.52" y2="441.94" stroke="#8f8f8f" stroke-width="7"/>
<path d="M225.50 439.83A14.6 14.6 0 0 1 228.08 422.68" stroke="#f43a3a" stroke-width="3.6" fill="none"/>
<line x1="238.13" y1="433.14" x2="225.14" y2="440.02" stroke="#1d1d1d" stroke-width="3" stroke-linecap="round"/>
<path d="M226.40 412.60L226.40 420.50L218.40 420.50Z" fill="#f43a3a"/>
<text transform="translate(242.10,449.40) scale(1,1.03)" font-size="13.2" font-weight="normal" text-anchor="start" fill="#111" stroke="#111" stroke-width="0.4">-0.54</text>
<text transform="translate(222.40,468.50) scale(1,1.11)" font-size="11.6" font-weight="bold" text-anchor="start" fill="#111">PsLFO2</text>
<path d="M238.40 509.90A14.6 14.6 0 1 1 253.00 495.30" stroke="#1d1d1d" stroke-width="3.6" fill="none"/>
<line x1="231.78" y1="487.67" x2="225.88" y2="480.87" stroke="#8f8f8f" stroke-width="7"/>
<path d="M228.08 484.98A14.6 14.6 0 0 1 228.83 484.27" stroke="#f43a3a" stroke-width="3.6" fill="none"/>
<line x1="238.20" y1="495.07" x2="228.57" y2="483.97" stroke="#1d1d1d" stroke-width="3" stroke-linecap="round"/>
<path d="M226.40 474.90L226.40 482.80L218.40 482.80Z" fill="#f43a3a"/>
<text transform="translate(242.10,511.70) scale(1,1.03)" font-size="13.2" font-weight="normal" text-anchor="start" fill="#111" stroke="#111" stroke-width="0.4">0.03</text>
<text transform="translate(274.70,344.75) scale(1,1.11)" font-size="11.6" font-weight="bold" text-anchor="start" fill="#111">SZRnd</text>
<path d="M290.70 385.50A14.6 14.6 0 1 1 305.30 370.90" stroke="#1d1d1d" stroke-width="3.6" fill="none"/>
<line x1="288.96" y1="360.95" x2="287.41" y2="352.09" stroke="#8f8f8f" stroke-width="7"/>
<path d="M290.70 385.50A14.6 14.6 0 0 1 288.18 356.52" stroke="#2aa8f2" stroke-width="3.6" fill="none"/>
<line x1="290.65" y1="370.60" x2="288.12" y2="356.12" stroke="#1d1d1d" stroke-width="3" stroke-linecap="round"/>
<text transform="translate(294.40,387.30) scale(1,1.03)" font-size="13.2" font-weight="normal" text-anchor="start" fill="#111" stroke="#111" stroke-width="0.4">80.0</text>
<text transform="translate(274.70,406.60) scale(1,1.11)" font-size="11.6" font-weight="bold" text-anchor="start" fill="#111">SzLFO1</text>
<path d="M290.70 447.60A14.6 14.6 0 1 1 305.30 433.00" stroke="#1d1d1d" stroke-width="3.6" fill="none"/>
<line x1="295.43" y1="424.07" x2="299.64" y2="416.12" stroke="#8f8f8f" stroke-width="7"/>
<path d="M280.38 422.68A14.6 14.6 0 0 1 297.53 420.10" stroke="#2aa8f2" stroke-width="3.6" fill="none"/>
<line x1="290.84" y1="432.73" x2="297.72" y2="419.74" stroke="#1d1d1d" stroke-width="3" stroke-linecap="round"/>
<path d="M278.70 412.60L278.70 420.50L270.70 420.50Z" fill="#2aa8f2"/>
<text transform="translate(294.40,449.40) scale(1,1.03)" font-size="13.2" font-weight="normal" text-anchor="start" fill="#111" stroke="#111" stroke-width="0.4">0.54</text>
<text transform="translate(274.70,468.50) scale(1,1.11)" font-size="11.6" font-weight="bold" text-anchor="start" fill="#111">SzLFO2</text>
<path d="M290.70 509.90A14.6 14.6 0 1 1 305.30 495.30" stroke="#1d1d1d" stroke-width="3.6" fill="none"/>
<line x1="286.26" y1="486.23" x2="282.30" y2="478.15" stroke="#8f8f8f" stroke-width="7"/>
<path d="M280.38 484.98A14.6 14.6 0 0 1 284.28 482.19" stroke="#2aa8f2" stroke-width="3.6" fill="none"/>
<line x1="290.57" y1="495.03" x2="284.10" y2="481.83" stroke="#1d1d1d" stroke-width="3" stroke-linecap="round"/>
<path d="M278.70 474.90L278.70 482.80L270.70 482.80Z" fill="#2aa8f2"/>
<text transform="translate(294.40,511.70) scale(1,1.03)" font-size="13.2" font-weight="normal" text-anchor="start" fill="#111" stroke="#111" stroke-width="0.4">0.14</text>
<text transform="translate(327.30,344.75) scale(1,1.11)" font-size="11.6" font-weight="bold" text-anchor="start" fill="#111">VlRnd</text>
<path d="M343.30 385.50A14.6 14.6 0 1 1 357.90 370.90" stroke="#1d1d1d" stroke-width="3.6" fill="none"/>
<line x1="345.65" y1="361.08" x2="347.75" y2="352.32" stroke="#8f8f8f" stroke-width="7"/>
<path d="M343.30 385.50A14.6 14.6 0 1 1 346.70 356.70" stroke="#ffffff" stroke-width="3.6" fill="none"/>
<line x1="343.37" y1="370.61" x2="346.79" y2="356.31" stroke="#1d1d1d" stroke-width="3" stroke-linecap="round"/>
<text transform="translate(347.00,387.30) scale(1,1.03)" font-size="13.2" font-weight="normal" text-anchor="start" fill="#111" stroke="#111" stroke-width="0.4">91.0</text>
<text transform="translate(327.30,406.60) scale(1,1.11)" font-size="11.6" font-weight="bold" text-anchor="start" fill="#111">VLLFO</text>
<path d="M343.30 447.60A14.6 14.6 0 1 1 357.90 433.00" stroke="#1d1d1d" stroke-width="3.6" fill="none"/>
<line x1="341.80" y1="423.01" x2="340.46" y2="414.11" stroke="#8f8f8f" stroke-width="7"/>
<path d="M332.98 422.68A14.6 14.6 0 0 1 341.13 418.56" stroke="#ffffff" stroke-width="3.6" fill="none"/>
<line x1="343.26" y1="432.70" x2="341.07" y2="418.17" stroke="#1d1d1d" stroke-width="3" stroke-linecap="round"/>
<path d="M331.30 412.60L331.30 420.50L323.30 420.50Z" fill="#ffffff"/>
<text transform="translate(347.00,449.40) scale(1,1.03)" font-size="13.2" font-weight="normal" text-anchor="start" fill="#111" stroke="#111" stroke-width="0.4">0.27</text>
<text transform="translate(327.30,468.50) scale(1,1.11)" font-size="11.6" font-weight="bold" text-anchor="start" fill="#111">VlLFO2</text>
<path d="M343.30 509.90A14.6 14.6 0 1 1 357.90 495.30" stroke="#1d1d1d" stroke-width="3.6" fill="none"/>
<line x1="336.16" y1="488.16" x2="329.79" y2="481.79" stroke="#8f8f8f" stroke-width="7"/>
<line x1="343.09" y1="495.09" x2="332.69" y2="484.69" stroke="#1d1d1d" stroke-width="3" stroke-linecap="round"/>
<path d="M331.30 474.90L331.30 482.80L323.30 482.80Z" fill="#1d1d1d"/>
<text transform="translate(347.00,511.70) scale(1,1.03)" font-size="13.2" font-weight="normal" text-anchor="start" fill="#111" stroke="#111" stroke-width="0.4">0.00</text>
<text transform="translate(379.20,344.75) scale(1,1.11)" font-size="11.6" font-weight="bold" text-anchor="start" fill="#111">PnRnd</text>
<path d="M395.20 385.50A14.6 14.6 0 1 1 409.80 370.90" stroke="#1d1d1d" stroke-width="3.6" fill="none"/>
<line x1="388.06" y1="363.76" x2="381.69" y2="357.39" stroke="#8f8f8f" stroke-width="7"/>
<path d="M395.20 385.50A14.6 14.6 0 0 1 384.88 360.58" stroke="#f8f070" stroke-width="3.6" fill="none"/>
<line x1="394.99" y1="370.69" x2="384.59" y2="360.29" stroke="#1d1d1d" stroke-width="3" stroke-linecap="round"/>
<text transform="translate(398.90,387.30) scale(1,1.03)" font-size="13.2" font-weight="normal" text-anchor="start" fill="#111" stroke="#111" stroke-width="0.4">0.50</text>
<text transform="translate(379.20,406.60) scale(1,1.11)" font-size="11.6" font-weight="bold" text-anchor="start" fill="#111">PNLFO</text>
<path d="M395.20 447.60A14.6 14.6 0 1 1 409.80 433.00" stroke="#1d1d1d" stroke-width="3.6" fill="none"/>
<line x1="403.25" y1="426.90" x2="410.43" y2="421.47" stroke="#8f8f8f" stroke-width="7"/>
<path d="M384.88 422.68A14.6 14.6 0 0 1 406.84 424.19" stroke="#f8f070" stroke-width="3.6" fill="none"/>
<line x1="395.44" y1="432.82" x2="407.16" y2="423.95" stroke="#1d1d1d" stroke-width="3" stroke-linecap="round"/>
<path d="M383.20 412.60L383.20 420.50L375.20 420.50Z" fill="#f8f070"/>
<text transform="translate(398.90,449.40) scale(1,1.03)" font-size="13.2" font-weight="normal" text-anchor="start" fill="#111" stroke="#111" stroke-width="0.4">1.45</text>
<text transform="translate(379.20,468.50) scale(1,1.11)" font-size="11.6" font-weight="bold" text-anchor="start" fill="#111">PnLFO2</text>
<path d="M395.20 509.90A14.6 14.6 0 1 1 409.80 495.30" stroke="#1d1d1d" stroke-width="3.6" fill="none"/>
<line x1="393.23" y1="485.39" x2="391.47" y2="476.57" stroke="#8f8f8f" stroke-width="7"/>
<path d="M384.88 484.98A14.6 14.6 0 0 1 392.35 480.98" stroke="#f8f070" stroke-width="3.6" fill="none"/>
<line x1="395.14" y1="495.01" x2="392.27" y2="480.59" stroke="#1d1d1d" stroke-width="3" stroke-linecap="round"/>
<path d="M383.20 474.90L383.20 482.80L375.20 482.80Z" fill="#f8f070"/>
<text transform="translate(398.90,511.70) scale(1,1.03)" font-size="13.2" font-weight="normal" text-anchor="start" fill="#111" stroke="#111" stroke-width="0.4">0.50</text>
<rect x="219.00" y="518.00" width="209.00" height="6.00" fill="#55a8f5"/>
<text transform="translate(226.20,604.90) scale(1,1.11)" font-size="14.8" font-weight="bold" text-anchor="start" fill="#1a1a1a">LFO 1 bus</text>
<rect x="358.80" y="589.30" width="66.40" height="18.60" fill="#dcdcdc" stroke="#464646" stroke-width="1.6"/>
<text transform="translate(392.00,604.30) scale(1,1.0)" font-size="15.6" font-weight="normal" text-anchor="middle" fill="#000" stroke="#000" stroke-width="0.3">1</text>
<text transform="translate(226.20,635.30) scale(1,1.11)" font-size="14.8" font-weight="bold" text-anchor="start" fill="#1a1a1a">LFO 2 bus</text>
<rect x="358.80" y="618.70" width="66.40" height="18.50" fill="#dcdcdc" stroke="#464646" stroke-width="1.6"/>
<text transform="translate(392.00,633.70) scale(1,1.0)" font-size="15.6" font-weight="normal" text-anchor="middle" fill="#000" stroke="#000" stroke-width="0.3">2</text>
<text transform="translate(226.20,662.70) scale(1,1.11)" font-size="14.8" font-weight="bold" text-anchor="start" fill="#1a1a1a">Size MS</text>
<rect x="358.80" y="646.20" width="66.40" height="19.30" fill="#dcdcdc" stroke="#464646" stroke-width="1.6"/>
<text transform="translate(392.00,661.80) scale(1,1.0)" font-size="15.6" font-weight="normal" text-anchor="middle" fill="#000" stroke="#000" stroke-width="0.3">10.7 s</text>
<text transform="translate(226.20,688.80) scale(1,1.11)" font-size="14.8" font-weight="bold" text-anchor="start" fill="#1a1a1a">Bind Size</text>
<rect x="358.80" y="673.20" width="19.20" height="18.60" fill="#b4b4b4" stroke="#464646" stroke-width="1.6"/>
<text transform="translate(226.20,717.40) scale(1,1.11)" font-size="14.8" font-weight="bold" text-anchor="start" fill="#1a1a1a">Revers</text>
<rect x="358.80" y="702.40" width="19.20" height="18.20" fill="#ffb300" stroke="#464646" stroke-width="1.6"/>
<text transform="translate(226.20,746.60) scale(1,1.11)" font-size="14.8" font-weight="bold" text-anchor="start" fill="#1a1a1a">Random Ratio</text>
<rect x="358.80" y="731.00" width="66.40" height="19.30" fill="#dcdcdc" stroke="#464646" stroke-width="1.6"/>
<text transform="translate(392.00,746.60) scale(1,1.0)" font-size="15.6" font-weight="normal" text-anchor="middle" fill="#000" stroke="#000" stroke-width="0.3">30.0 %</text>
<rect x="219.00" y="762.50" width="209.00" height="7.00" fill="#55a8f5"/>
<rect x="442.05" y="92.10" width="47.40" height="19.70" fill="#dcdcdc" stroke="#464646" stroke-width="1.6"/>
<text transform="translate(444.85,107.80) scale(1,1.11)" font-size="14" font-weight="normal" text-anchor="start" fill="#000" stroke="#000" stroke-width="0.15">Seq</text>
<path d="M474.85 97.90L485.65 97.90L480.25 106.00Z" fill="#000"/>
<rect x="496.35" y="92.10" width="31.70" height="19.70" fill="#9e9e9e" stroke="#464646" stroke-width="1.6"/>
<text transform="translate(499.15,107.80) scale(1,1.11)" font-size="14" font-weight="normal" text-anchor="start" fill="#000" stroke="#000" stroke-width="0.15">A</text>
<path d="M513.45 97.90L524.25 97.90L518.85 106.00Z" fill="#000"/>
<rect x="535.45" y="92.10" width="28.30" height="19.70" fill="#9e9e9e" stroke="#464646" stroke-width="1.6"/>
<text transform="translate(538.25,107.80) scale(1,1.11)" font-size="14" font-weight="normal" text-anchor="start" fill="#000" stroke="#000" stroke-width="0.15">1</text>
<path d="M549.15 97.90L559.95 97.90L554.55 106.00Z" fill="#000"/>
<rect x="571.45" y="92.10" width="46.30" height="19.70" fill="#9e9e9e" stroke="#464646" stroke-width="1.6"/>
<text transform="translate(574.25,107.80) scale(1,1.11)" font-size="14" font-weight="normal" text-anchor="start" fill="#000" stroke="#000" stroke-width="0.15">Trig</text>
<path d="M603.15 97.90L613.95 97.90L608.55 106.00Z" fill="#000"/>
<rect x="442.05" y="118.80" width="32.30" height="19.10" fill="#dcdcdc" stroke="#464646" stroke-width="1.6"/>
<text transform="translate(444.85,134.50) scale(1,1.11)" font-size="14" font-weight="normal" text-anchor="start" fill="#000" stroke="#000" stroke-width="0.15">A</text>
<path d="M459.75 124.60L470.55 124.60L465.15 132.70Z" fill="#000"/>
<rect x="483.05" y="118.80" width="29.10" height="19.10" fill="#dcdcdc" stroke="#464646" stroke-width="1.6"/>
<text transform="translate(485.85,134.50) scale(1,1.11)" font-size="14" font-weight="normal" text-anchor="start" fill="#000" stroke="#000" stroke-width="0.15">1</text>
<path d="M497.55 124.60L508.35 124.60L502.95 132.70Z" fill="#000"/>
<rect x="520.65" y="118.80" width="18.80" height="19.10" fill="#b4b4b4" stroke="#464646" stroke-width="1.6"/>
<rect x="547.35" y="118.80" width="70.40" height="19.10" fill="#9e9e9e" stroke="#464646" stroke-width="1.6"/>
<text transform="translate(550.15,134.50) scale(1,1.11)" font-size="14" font-weight="normal" text-anchor="start" fill="#000" stroke="#000" stroke-width="0.15">None</text>
<path d="M603.15 124.60L613.95 124.60L608.55 132.70Z" fill="#000"/>
<text transform="translate(444.40,154.50) scale(1,1.11)" font-size="11.6" font-weight="bold" text-anchor="start" fill="#111">Position</text>
<path d="M460.40 195.90A14.6 14.6 0 1 1 475.00 181.30" stroke="#1d1d1d" stroke-width="3.6" fill="none"/>
<line x1="457.28" y1="171.69" x2="454.50" y2="163.13" stroke="#8f8f8f" stroke-width="7"/>
<path d="M460.40 195.90A14.6 14.6 0 0 1 455.89 167.41" stroke="#f43a3a" stroke-width="3.6" fill="none"/>
<line x1="460.31" y1="181.01" x2="455.76" y2="167.03" stroke="#1d1d1d" stroke-width="3" stroke-linecap="round"/>
<text transform="translate(464.10,197.70) scale(1,1.03)" font-size="13.2" font-weight="normal" text-anchor="start" fill="#111" stroke="#111" stroke-width="0.4">0.60</text>
<text transform="translate(496.70,154.50) scale(1,1.11)" font-size="11.6" font-weight="bold" text-anchor="start" fill="#111">MPos</text>
<path d="M512.70 195.90A14.6 14.6 0 1 1 527.30 181.30" stroke="#1d1d1d" stroke-width="3.6" fill="none"/>
<line x1="512.70" y1="191.40" x2="512.70" y2="200.40" stroke="#8f8f8f" stroke-width="7"/>
<line x1="512.70" y1="181.60" x2="512.70" y2="196.30" stroke="#1d1d1d" stroke-width="3" stroke-linecap="round"/>
<text transform="translate(516.40,197.70) scale(1,1.03)" font-size="13.2" font-weight="normal" text-anchor="start" fill="#111" stroke="#111" stroke-width="0.4">0.00</text>
<text transform="translate(549.30,154.50) scale(1,1.11)" font-size="11.6" font-weight="bold" text-anchor="start" fill="#111">Size</text>
<path d="M565.30 195.90A14.6 14.6 0 1 1 579.90 181.30" stroke="#1d1d1d" stroke-width="3.6" fill="none"/>
<line x1="557.22" y1="175.24" x2="550.03" y2="169.83" stroke="#8f8f8f" stroke-width="7"/>
<path d="M565.30 195.90A14.6 14.6 0 0 1 553.62 172.53" stroke="#2aa8f2" stroke-width="3.6" fill="none"/>
<line x1="565.06" y1="181.12" x2="553.30" y2="172.29" stroke="#1d1d1d" stroke-width="3" stroke-linecap="round"/>
<text transform="translate(569.00,197.70) scale(1,1.03)" font-size="13.2" font-weight="normal" text-anchor="start" fill="#111" stroke="#111" stroke-width="0.4">0.47</text>
<text transform="translate(601.20,154.50) scale(1,1.11)" font-size="11.6" font-weight="bold" text-anchor="start" fill="#111">MSize</text>
<path d="M617.20 195.90A14.6 14.6 0 1 1 631.80 181.30" stroke="#1d1d1d" stroke-width="3.6" fill="none"/>
<line x1="607.10" y1="180.98" x2="598.11" y2="180.70" stroke="#8f8f8f" stroke-width="7"/>
<path d="M617.20 195.90A14.6 14.6 0 0 1 602.61 180.84" stroke="#2a82cc" stroke-width="3.6" fill="none"/>
<line x1="616.90" y1="181.29" x2="602.21" y2="180.83" stroke="#1d1d1d" stroke-width="3" stroke-linecap="round"/>
<text transform="translate(620.90,197.70) scale(1,1.03)" font-size="13.2" font-weight="normal" text-anchor="start" fill="#111" stroke="#111" stroke-width="0.4">0.34</text>
<text transform="translate(444.40,217.00) scale(1,1.11)" font-size="11.6" font-weight="bold" text-anchor="start" fill="#111">Volume</text>
<path d="M460.40 258.10A14.6 14.6 0 1 1 475.00 243.50" stroke="#1d1d1d" stroke-width="3.6" fill="none"/>
<line x1="470.50" y1="243.50" x2="479.50" y2="243.50" stroke="#8f8f8f" stroke-width="7"/>
<path d="M460.40 258.10A14.6 14.6 0 1 1 475.00 243.50" stroke="#ffffff" stroke-width="3.6" fill="none"/>
<line x1="460.70" y1="243.50" x2="475.40" y2="243.50" stroke="#1d1d1d" stroke-width="3" stroke-linecap="round"/>
<text transform="translate(464.10,259.90) scale(1,1.03)" font-size="13.2" font-weight="normal" text-anchor="start" fill="#111" stroke="#111" stroke-width="0.4">1.00</text>
<text transform="translate(496.70,217.00) scale(1,1.11)" font-size="11.6" font-weight="bold" text-anchor="start" fill="#111">Pan</text>
<path d="M512.70 258.10A14.6 14.6 0 1 1 527.30 243.50" stroke="#1d1d1d" stroke-width="3.6" fill="none"/>
<line x1="519.73" y1="236.25" x2="525.99" y2="229.78" stroke="#8f8f8f" stroke-width="7"/>
<path d="M502.38 233.18A14.6 14.6 0 0 1 522.86 233.02" stroke="#f5e46a" stroke-width="3.6" fill="none"/>
<line x1="512.91" y1="243.28" x2="523.14" y2="232.73" stroke="#1d1d1d" stroke-width="3" stroke-linecap="round"/>
<path d="M500.70 223.10L500.70 231.00L492.70 231.00Z" fill="#f5e46a"/>
<text transform="translate(516.40,259.90) scale(1,1.03)" font-size="13.2" font-weight="normal" text-anchor="start" fill="#111" stroke="#111" stroke-width="0.4">0.66</text>
<text transform="translate(549.30,217.00) scale(1,1.11)" font-size="11.6" font-weight="bold" text-anchor="start" fill="#111">Tune</text>
<path d="M565.30 258.10A14.6 14.6 0 1 1 579.90 243.50" stroke="#1d1d1d" stroke-width="3.6" fill="none"/>
<line x1="555.39" y1="241.53" x2="546.57" y2="239.77" stroke="#8f8f8f" stroke-width="7"/>
<path d="M550.98 240.65A14.6 14.6 0 0 1 554.98 233.18" stroke="#3cc22c" stroke-width="3.6" fill="none"/>
<line x1="565.01" y1="243.44" x2="550.59" y2="240.57" stroke="#1d1d1d" stroke-width="3" stroke-linecap="round"/>
<path d="M553.30 223.10L553.30 231.00L545.30 231.00Z" fill="#3cc22c"/>
<text transform="translate(569.00,259.90) scale(1,1.03)" font-size="13.2" font-weight="normal" text-anchor="start" fill="#111" stroke="#111" stroke-width="0.4">-12</text>
<text transform="translate(601.20,217.00) scale(1,1.11)" font-size="11.6" font-weight="bold" text-anchor="start" fill="#111">Fine</text>
<path d="M617.20 258.10A14.6 14.6 0 1 1 631.80 243.50" stroke="#1d1d1d" stroke-width="3.6" fill="none"/>
<line x1="625.68" y1="238.02" x2="633.25" y2="233.14" stroke="#8f8f8f" stroke-width="7"/>
<path d="M606.88 233.18A14.6 14.6 0 0 1 629.47 235.58" stroke="#40f0b4" stroke-width="3.6" fill="none"/>
<line x1="617.45" y1="243.34" x2="629.80" y2="235.36" stroke="#1d1d1d" stroke-width="3" stroke-linecap="round"/>
<path d="M605.20 223.10L605.20 231.00L597.20 231.00Z" fill="#40f0b4"/>
<text transform="translate(620.90,259.90) scale(1,1.03)" font-size="13.2" font-weight="normal" text-anchor="start" fill="#111" stroke="#111" stroke-width="0.4">2.27</text>
<rect x="441.00" y="273.00" width="209.00" height="6.00" fill="#b16fe0"/>
<text transform="translate(444.40,344.75) scale(1,1.11)" font-size="11.6" font-weight="bold" text-anchor="start" fill="#111">PSRnd</text>
<path d="M460.40 385.50A14.6 14.6 0 1 1 475.00 370.90" stroke="#1d1d1d" stroke-width="3.6" fill="none"/>
<line x1="461.51" y1="360.86" x2="462.50" y2="351.92" stroke="#8f8f8f" stroke-width="7"/>
<path d="M460.40 385.50A14.6 14.6 0 1 1 462.00 356.39" stroke="#f43a3a" stroke-width="3.6" fill="none"/>
<line x1="460.43" y1="370.60" x2="462.05" y2="355.99" stroke="#1d1d1d" stroke-width="3" stroke-linecap="round"/>
<text transform="translate(464.10,387.30) scale(1,1.03)" font-size="13.2" font-weight="normal" text-anchor="start" fill="#111" stroke="#111" stroke-width="0.4">0.69</text>
<text transform="translate(444.40,406.60) scale(1,1.11)" font-size="11.6" font-weight="bold" text-anchor="start" fill="#111">PsLFO1</text>
<path d="M460.40 447.60A14.6 14.6 0 1 1 475.00 433.00" stroke="#1d1d1d" stroke-width="3.6" fill="none"/>
<line x1="453.26" y1="425.86" x2="446.89" y2="419.49" stroke="#8f8f8f" stroke-width="7"/>
<line x1="460.19" y1="432.79" x2="449.79" y2="422.39" stroke="#1d1d1d" stroke-width="3" stroke-linecap="round"/>
<path d="M448.40 412.60L448.40 420.50L440.40 420.50Z" fill="#1d1d1d"/>
<text transform="translate(464.10,449.40) scale(1,1.03)" font-size="13.2" font-weight="normal" text-anchor="start" fill="#111" stroke="#111" stroke-width="0.4">0.00</text>
<text transform="translate(444.40,468.50) scale(1,1.11)" font-size="11.6" font-weight="bold" text-anchor="start" fill="#111">PsLFO2</text>
<path d="M460.40 509.90A14.6 14.6 0 1 1 475.00 495.30" stroke="#1d1d1d" stroke-width="3.6" fill="none"/>
<line x1="453.26" y1="488.16" x2="446.89" y2="481.79" stroke="#8f8f8f" stroke-width="7"/>
<line x1="460.19" y1="495.09" x2="449.79" y2="484.69" stroke="#1d1d1d" stroke-width="3" stroke-linecap="round"/>
<path d="M448.40 474.90L448.40 482.80L440.40 482.80Z" fill="#1d1d1d"/>
<text transform="translate(464.10,511.70) scale(1,1.03)" font-size="13.2" font-weight="normal" text-anchor="start" fill="#111" stroke="#111" stroke-width="0.4">0.00</text>
<text transform="translate(496.70,344.75) scale(1,1.11)" font-size="11.6" font-weight="bold" text-anchor="start" fill="#111">SZRnd</text>
<path d="M512.70 385.50A14.6 14.6 0 1 1 527.30 370.90" stroke="#1d1d1d" stroke-width="3.6" fill="none"/>
<line x1="512.70" y1="381.00" x2="512.70" y2="390.00" stroke="#8f8f8f" stroke-width="7"/>
<line x1="512.70" y1="371.20" x2="512.70" y2="385.90" stroke="#1d1d1d" stroke-width="3" stroke-linecap="round"/>
<text transform="translate(516.40,387.30) scale(1,1.03)" font-size="13.2" font-weight="normal" text-anchor="start" fill="#111" stroke="#111" stroke-width="0.4">0.00</text>
<text transform="translate(496.70,406.60) scale(1,1.11)" font-size="11.6" font-weight="bold" text-anchor="start" fill="#111">SzLFO1</text>
<path d="M512.70 447.60A14.6 14.6 0 1 1 527.30 433.00" stroke="#1d1d1d" stroke-width="3.6" fill="none"/>
<line x1="505.56" y1="425.86" x2="499.19" y2="419.49" stroke="#8f8f8f" stroke-width="7"/>
<line x1="512.49" y1="432.79" x2="502.09" y2="422.39" stroke="#1d1d1d" stroke-width="3" stroke-linecap="round"/>
<path d="M500.70 412.60L500.70 420.50L492.70 420.50Z" fill="#1d1d1d"/>
<text transform="translate(516.40,449.40) scale(1,1.03)" font-size="13.2" font-weight="normal" text-anchor="start" fill="#111" stroke="#111" stroke-width="0.4">0.00</text>
<text transform="translate(496.70,468.50) scale(1,1.11)" font-size="11.6" font-weight="bold" text-anchor="start" fill="#111">SzLFO2</text>
<path d="M512.70 509.90A14.6 14.6 0 1 1 527.30 495.30" stroke="#1d1d1d" stroke-width="3.6" fill="none"/>
<line x1="505.56" y1="488.16" x2="499.19" y2="481.79" stroke="#8f8f8f" stroke-width="7"/>
<line x1="512.49" y1="495.09" x2="502.09" y2="484.69" stroke="#1d1d1d" stroke-width="3" stroke-linecap="round"/>
<path d="M500.70 474.90L500.70 482.80L492.70 482.80Z" fill="#1d1d1d"/>
<text transform="translate(516.40,511.70) scale(1,1.03)" font-size="13.2" font-weight="normal" text-anchor="start" fill="#111" stroke="#111" stroke-width="0.4">0.00</text>
<text transform="translate(549.30,344.75) scale(1,1.11)" font-size="11.6" font-weight="bold" text-anchor="start" fill="#111">VlRnd</text>
<path d="M565.30 385.50A14.6 14.6 0 1 1 579.90 370.90" stroke="#1d1d1d" stroke-width="3.6" fill="none"/>
<line x1="565.30" y1="381.00" x2="565.30" y2="390.00" stroke="#8f8f8f" stroke-width="7"/>
<line x1="565.30" y1="371.20" x2="565.30" y2="385.90" stroke="#1d1d1d" stroke-width="3" stroke-linecap="round"/>
<text transform="translate(569.00,387.30) scale(1,1.03)" font-size="13.2" font-weight="normal" text-anchor="start" fill="#111" stroke="#111" stroke-width="0.4">0.00</text>
<text transform="translate(549.30,406.60) scale(1,1.11)" font-size="11.6" font-weight="bold" text-anchor="start" fill="#111">VLLFO</text>
<path d="M565.30 447.60A14.6 14.6 0 1 1 579.90 433.00" stroke="#1d1d1d" stroke-width="3.6" fill="none"/>
<line x1="558.16" y1="425.86" x2="551.79" y2="419.49" stroke="#8f8f8f" stroke-width="7"/>
<line x1="565.09" y1="432.79" x2="554.69" y2="422.39" stroke="#1d1d1d" stroke-width="3" stroke-linecap="round"/>
<path d="M553.30 412.60L553.30 420.50L545.30 420.50Z" fill="#1d1d1d"/>
<text transform="translate(569.00,449.40) scale(1,1.03)" font-size="13.2" font-weight="normal" text-anchor="start" fill="#111" stroke="#111" stroke-width="0.4">0.00</text>
<text transform="translate(549.30,468.50) scale(1,1.11)" font-size="11.6" font-weight="bold" text-anchor="start" fill="#111">VlLFO2</text>
<path d="M565.30 509.90A14.6 14.6 0 1 1 579.90 495.30" stroke="#1d1d1d" stroke-width="3.6" fill="none"/>
<line x1="558.16" y1="488.16" x2="551.79" y2="481.79" stroke="#8f8f8f" stroke-width="7"/>
<line x1="565.09" y1="495.09" x2="554.69" y2="484.69" stroke="#1d1d1d" stroke-width="3" stroke-linecap="round"/>
<path d="M553.30 474.90L553.30 482.80L545.30 482.80Z" fill="#1d1d1d"/>
<text transform="translate(569.00,511.70) scale(1,1.03)" font-size="13.2" font-weight="normal" text-anchor="start" fill="#111" stroke="#111" stroke-width="0.4">0.00</text>
<text transform="translate(601.20,344.75) scale(1,1.11)" font-size="11.6" font-weight="bold" text-anchor="start" fill="#111">PnRnd</text>
<path d="M617.20 385.50A14.6 14.6 0 1 1 631.80 370.90" stroke="#1d1d1d" stroke-width="3.6" fill="none"/>
<line x1="627.30" y1="370.90" x2="636.30" y2="370.90" stroke="#8f8f8f" stroke-width="7"/>
<path d="M617.20 385.50A14.6 14.6 0 1 1 631.80 370.90" stroke="#f8f070" stroke-width="3.6" fill="none"/>
<line x1="617.50" y1="370.90" x2="632.20" y2="370.90" stroke="#1d1d1d" stroke-width="3" stroke-linecap="round"/>
<text transform="translate(620.90,387.30) scale(1,1.03)" font-size="13.2" font-weight="normal" text-anchor="start" fill="#111" stroke="#111" stroke-width="0.4">1.00</text>
<text transform="translate(601.20,406.60) scale(1,1.11)" font-size="11.6" font-weight="bold" text-anchor="start" fill="#111">PNLFO</text>
<path d="M617.20 447.60A14.6 14.6 0 1 1 631.80 433.00" stroke="#1d1d1d" stroke-width="3.6" fill="none"/>
<line x1="610.06" y1="425.86" x2="603.69" y2="419.49" stroke="#8f8f8f" stroke-width="7"/>
<line x1="616.99" y1="432.79" x2="606.59" y2="422.39" stroke="#1d1d1d" stroke-width="3" stroke-linecap="round"/>
<path d="M605.20 412.60L605.20 420.50L597.20 420.50Z" fill="#1d1d1d"/>
<text transform="translate(620.90,449.40) scale(1,1.03)" font-size="13.2" font-weight="normal" text-anchor="start" fill="#111" stroke="#111" stroke-width="0.4">0.00</text>
<text transform="translate(601.20,468.50) scale(1,1.11)" font-size="11.6" font-weight="bold" text-anchor="start" fill="#111">PnLFO2</text>
<path d="M617.20 509.90A14.6 14.6 0 1 1 631.80 495.30" stroke="#1d1d1d" stroke-width="3.6" fill="none"/>
<line x1="610.06" y1="488.16" x2="603.69" y2="481.79" stroke="#8f8f8f" stroke-width="7"/>
<line x1="616.99" y1="495.09" x2="606.59" y2="484.69" stroke="#1d1d1d" stroke-width="3" stroke-linecap="round"/>
<path d="M605.20 474.90L605.20 482.80L597.20 482.80Z" fill="#1d1d1d"/>
<text transform="translate(620.90,511.70) scale(1,1.03)" font-size="13.2" font-weight="normal" text-anchor="start" fill="#111" stroke="#111" stroke-width="0.4">0.00</text>
<rect x="441.00" y="518.00" width="209.00" height="6.00" fill="#b16fe0"/>
<text transform="translate(448.20,604.90) scale(1,1.11)" font-size="14.8" font-weight="bold" text-anchor="start" fill="#1a1a1a">LFO 1 bus</text>
<rect x="580.80" y="589.30" width="66.40" height="18.60" fill="#dcdcdc" stroke="#464646" stroke-width="1.6"/>
<text transform="translate(614.00,604.30) scale(1,1.0)" font-size="15.6" font-weight="normal" text-anchor="middle" fill="#000" stroke="#000" stroke-width="0.3">1</text>
<text transform="translate(448.20,635.30) scale(1,1.11)" font-size="14.8" font-weight="bold" text-anchor="start" fill="#1a1a1a">LFO 2 bus</text>
<rect x="580.80" y="618.70" width="66.40" height="18.50" fill="#dcdcdc" stroke="#464646" stroke-width="1.6"/>
<text transform="translate(614.00,633.70) scale(1,1.0)" font-size="15.6" font-weight="normal" text-anchor="middle" fill="#000" stroke="#000" stroke-width="0.3">0</text>
<text transform="translate(448.20,662.70) scale(1,1.11)" font-size="14.8" font-weight="bold" text-anchor="start" fill="#1a1a1a">Size MS</text>
<rect x="580.80" y="646.20" width="66.40" height="19.30" fill="#dcdcdc" stroke="#464646" stroke-width="1.6"/>
<text transform="translate(614.00,661.80) scale(1,1.0)" font-size="15.6" font-weight="normal" text-anchor="middle" fill="#000" stroke="#000" stroke-width="0.3">2.17 s</text>
<text transform="translate(448.20,688.80) scale(1,1.11)" font-size="14.8" font-weight="bold" text-anchor="start" fill="#1a1a1a">Bind Size</text>
<rect x="580.80" y="673.20" width="19.20" height="18.60" fill="#ffb300" stroke="#464646" stroke-width="1.6"/>
<text transform="translate(448.20,717.40) scale(1,1.11)" font-size="14.8" font-weight="bold" text-anchor="start" fill="#1a1a1a">Revers</text>
<rect x="580.80" y="702.40" width="19.20" height="18.20" fill="#b4b4b4" stroke="#464646" stroke-width="1.6"/>
<text transform="translate(448.20,746.60) scale(1,1.11)" font-size="14.8" font-weight="bold" text-anchor="start" fill="#1a1a1a">Random Ratio</text>
<rect x="580.80" y="731.00" width="66.40" height="19.30" fill="#dcdcdc" stroke="#464646" stroke-width="1.6"/>
<text transform="translate(614.00,746.60) scale(1,1.0)" font-size="15.6" font-weight="normal" text-anchor="middle" fill="#000" stroke="#000" stroke-width="0.3">30.0 %</text>
<rect x="441.00" y="762.50" width="209.00" height="7.00" fill="#b16fe0"/>
<rect x="664.30" y="92.10" width="47.40" height="19.70" fill="#dcdcdc" stroke="#464646" stroke-width="1.6"/>
<text transform="translate(667.10,107.80) scale(1,1.11)" font-size="14" font-weight="normal" text-anchor="start" fill="#000" stroke="#000" stroke-width="0.15">Seq</text>
<path d="M697.10 97.90L707.90 97.90L702.50 106.00Z" fill="#000"/>
<rect x="718.60" y="92.10" width="31.70" height="19.70" fill="#9e9e9e" stroke="#464646" stroke-width="1.6"/>
<text transform="translate(721.40,107.80) scale(1,1.11)" font-size="14" font-weight="normal" text-anchor="start" fill="#000" stroke="#000" stroke-width="0.15">A</text>
<path d="M735.70 97.90L746.50 97.90L741.10 106.00Z" fill="#000"/>
<rect x="757.70" y="92.10" width="28.30" height="19.70" fill="#9e9e9e" stroke="#464646" stroke-width="1.6"/>
<text transform="translate(760.50,107.80) scale(1,1.11)" font-size="14" font-weight="normal" text-anchor="start" fill="#000" stroke="#000" stroke-width="0.15">1</text>
<path d="M771.40 97.90L782.20 97.90L776.80 106.00Z" fill="#000"/>
<rect x="793.70" y="92.10" width="46.30" height="19.70" fill="#9e9e9e" stroke="#464646" stroke-width="1.6"/>
<text transform="translate(796.50,107.80) scale(1,1.11)" font-size="14" font-weight="normal" text-anchor="start" fill="#000" stroke="#000" stroke-width="0.15">Trig</text>
<path d="M825.40 97.90L836.20 97.90L830.80 106.00Z" fill="#000"/>
<rect x="664.30" y="118.80" width="32.30" height="19.10" fill="#dcdcdc" stroke="#464646" stroke-width="1.6"/>
<text transform="translate(667.10,134.50) scale(1,1.11)" font-size="14" font-weight="normal" text-anchor="start" fill="#000" stroke="#000" stroke-width="0.15">A</text>
<path d="M682.00 124.60L692.80 124.60L687.40 132.70Z" fill="#000"/>
<rect x="705.30" y="118.80" width="29.10" height="19.10" fill="#dcdcdc" stroke="#464646" stroke-width="1.6"/>
<text transform="translate(708.10,134.50) scale(1,1.11)" font-size="14" font-weight="normal" text-anchor="start" fill="#000" stroke="#000" stroke-width="0.15">1</text>
<path d="M719.80 124.60L730.60 124.60L725.20 132.70Z" fill="#000"/>
<rect x="742.90" y="118.80" width="18.80" height="19.10" fill="#b4b4b4" stroke="#464646" stroke-width="1.6"/>
<rect x="769.60" y="118.80" width="70.40" height="19.10" fill="#9e9e9e" stroke="#464646" stroke-width="1.6"/>
<text transform="translate(772.40,134.50) scale(1,1.11)" font-size="14" font-weight="normal" text-anchor="start" fill="#000" stroke="#000" stroke-width="0.15">None</text>
<path d="M825.40 124.60L836.20 124.60L830.80 132.70Z" fill="#000"/>
<text transform="translate(666.40,154.50) scale(1,1.11)" font-size="11.6" font-weight="bold" text-anchor="start" fill="#111">Position</text>
<path d="M682.40 195.90A14.6 14.6 0 1 1 697.00 181.30" stroke="#1d1d1d" stroke-width="3.6" fill="none"/>
<line x1="672.33" y1="180.51" x2="663.36" y2="179.80" stroke="#8f8f8f" stroke-width="7"/>
<path d="M682.40 195.90A14.6 14.6 0 0 1 667.85 180.15" stroke="#f43a3a" stroke-width="3.6" fill="none"/>
<line x1="682.10" y1="181.28" x2="667.45" y2="180.12" stroke="#1d1d1d" stroke-width="3" stroke-linecap="round"/>
<text transform="translate(686.10,197.70) scale(1,1.03)" font-size="13.2" font-weight="normal" text-anchor="start" fill="#111" stroke="#111" stroke-width="0.4">0.35</text>
<text transform="translate(718.70,154.50) scale(1,1.11)" font-size="11.6" font-weight="bold" text-anchor="start" fill="#111">MPos</text>
<path d="M734.70 195.90A14.6 14.6 0 1 1 749.30 181.30" stroke="#1d1d1d" stroke-width="3.6" fill="none"/>
<line x1="726.82" y1="187.61" x2="719.79" y2="193.24" stroke="#8f8f8f" stroke-width="7"/>
<path d="M734.70 195.90A14.6 14.6 0 0 1 723.31 190.43" stroke="#e8701e" stroke-width="3.6" fill="none"/>
<line x1="734.47" y1="181.49" x2="722.99" y2="190.68" stroke="#1d1d1d" stroke-width="3" stroke-linecap="round"/>
<text transform="translate(738.40,197.70) scale(1,1.03)" font-size="13.2" font-weight="normal" text-anchor="start" fill="#111" stroke="#111" stroke-width="0.4">0.19</text>
<text transform="translate(771.30,154.50) scale(1,1.11)" font-size="11.6" font-weight="bold" text-anchor="start" fill="#111">Size</text>
<path d="M787.30 195.90A14.6 14.6 0 1 1 801.90 181.30" stroke="#1d1d1d" stroke-width="3.6" fill="none"/>
<line x1="777.28" y1="180.03" x2="768.35" y2="178.91" stroke="#8f8f8f" stroke-width="7"/>
<path d="M787.30 195.90A14.6 14.6 0 0 1 772.82 179.47" stroke="#2aa8f2" stroke-width="3.6" fill="none"/>
<line x1="787.00" y1="181.26" x2="772.42" y2="179.42" stroke="#1d1d1d" stroke-width="3" stroke-linecap="round"/>
<text transform="translate(791.00,197.70) scale(1,1.03)" font-size="13.2" font-weight="normal" text-anchor="start" fill="#111" stroke="#111" stroke-width="0.4">0.36</text>
<text transform="translate(823.20,154.50) scale(1,1.11)" font-size="11.6" font-weight="bold" text-anchor="start" fill="#111">MSize</text>
<path d="M839.20 195.90A14.6 14.6 0 1 1 853.80 181.30" stroke="#1d1d1d" stroke-width="3.6" fill="none"/>
<line x1="839.20" y1="191.40" x2="839.20" y2="200.40" stroke="#8f8f8f" stroke-width="7"/>
<line x1="839.20" y1="181.60" x2="839.20" y2="196.30" stroke="#1d1d1d" stroke-width="3" stroke-linecap="round"/>
<text transform="translate(842.90,197.70) scale(1,1.03)" font-size="13.2" font-weight="normal" text-anchor="start" fill="#111" stroke="#111" stroke-width="0.4">0.00</text>
<text transform="translate(666.40,217.00) scale(1,1.11)" font-size="11.6" font-weight="bold" text-anchor="start" fill="#111">Volume</text>
<path d="M682.40 258.10A14.6 14.6 0 1 1 697.00 243.50" stroke="#1d1d1d" stroke-width="3.6" fill="none"/>
<line x1="692.50" y1="243.50" x2="701.50" y2="243.50" stroke="#8f8f8f" stroke-width="7"/>
<path d="M682.40 258.10A14.6 14.6 0 1 1 697.00 243.50" stroke="#ffffff" stroke-width="3.6" fill="none"/>
<line x1="682.70" y1="243.50" x2="697.40" y2="243.50" stroke="#1d1d1d" stroke-width="3" stroke-linecap="round"/>
<text transform="translate(686.10,259.90) scale(1,1.03)" font-size="13.2" font-weight="normal" text-anchor="start" fill="#111" stroke="#111" stroke-width="0.4">1.00</text>
<text transform="translate(718.70,217.00) scale(1,1.11)" font-size="11.6" font-weight="bold" text-anchor="start" fill="#111">Pan</text>
<path d="M734.70 258.10A14.6 14.6 0 1 1 749.30 243.50" stroke="#1d1d1d" stroke-width="3.6" fill="none"/>
<line x1="727.56" y1="236.36" x2="721.19" y2="229.99" stroke="#8f8f8f" stroke-width="7"/>
<line x1="734.49" y1="243.29" x2="724.09" y2="232.89" stroke="#1d1d1d" stroke-width="3" stroke-linecap="round"/>
<path d="M722.70 223.10L722.70 231.00L714.70 231.00Z" fill="#1d1d1d"/>
<text transform="translate(738.40,259.90) scale(1,1.03)" font-size="13.2" font-weight="normal" text-anchor="start" fill="#111" stroke="#111" stroke-width="0.4">0.00</text>
<text transform="translate(771.30,217.00) scale(1,1.11)" font-size="11.6" font-weight="bold" text-anchor="start" fill="#111">Tune</text>
<path d="M787.30 258.10A14.6 14.6 0 1 1 801.90 243.50" stroke="#1d1d1d" stroke-width="3.6" fill="none"/>
<line x1="780.16" y1="236.36" x2="773.79" y2="229.99" stroke="#8f8f8f" stroke-width="7"/>
<line x1="787.09" y1="243.29" x2="776.69" y2="232.89" stroke="#1d1d1d" stroke-width="3" stroke-linecap="round"/>
<path d="M775.30 223.10L775.30 231.00L767.30 231.00Z" fill="#1d1d1d"/>
<text transform="translate(791.00,259.90) scale(1,1.03)" font-size="13.2" font-weight="normal" text-anchor="start" fill="#111" stroke="#111" stroke-width="0.4">0</text>
<text transform="translate(823.20,217.00) scale(1,1.11)" font-size="11.6" font-weight="bold" text-anchor="start" fill="#111">Fine</text>
<path d="M839.20 258.10A14.6 14.6 0 1 1 853.80 243.50" stroke="#1d1d1d" stroke-width="3.6" fill="none"/>
<line x1="832.06" y1="236.36" x2="825.69" y2="229.99" stroke="#8f8f8f" stroke-width="7"/>
<line x1="838.99" y1="243.29" x2="828.59" y2="232.89" stroke="#1d1d1d" stroke-width="3" stroke-linecap="round"/>
<path d="M827.20 223.10L827.20 231.00L819.20 231.00Z" fill="#1d1d1d"/>
<text transform="translate(842.90,259.90) scale(1,1.03)" font-size="13.2" font-weight="normal" text-anchor="start" fill="#111" stroke="#111" stroke-width="0.4">0.00</text>
<rect x="663.00" y="273.00" width="209.00" height="6.00" fill="#e85d5d"/>
<text transform="translate(666.40,344.75) scale(1,1.11)" font-size="11.6" font-weight="bold" text-anchor="start" fill="#111">PSRnd</text>
<path d="M682.40 385.50A14.6 14.6 0 1 1 697.00 370.90" stroke="#1d1d1d" stroke-width="3.6" fill="none"/>
<line x1="680.66" y1="360.95" x2="679.12" y2="352.08" stroke="#8f8f8f" stroke-width="7"/>
<path d="M682.40 385.50A14.6 14.6 0 0 1 679.89 356.52" stroke="#f43a3a" stroke-width="3.6" fill="none"/>
<line x1="682.35" y1="370.60" x2="679.82" y2="356.12" stroke="#1d1d1d" stroke-width="3" stroke-linecap="round"/>
<text transform="translate(686.10,387.30) scale(1,1.03)" font-size="13.2" font-weight="normal" text-anchor="start" fill="#111" stroke="#111" stroke-width="0.4">0.63</text>
<text transform="translate(666.40,406.60) scale(1,1.11)" font-size="11.6" font-weight="bold" text-anchor="start" fill="#111">PsLFO1</text>
<path d="M682.40 447.60A14.6 14.6 0 1 1 697.00 433.00" stroke="#1d1d1d" stroke-width="3.6" fill="none"/>
<line x1="684.91" y1="423.22" x2="687.15" y2="414.50" stroke="#8f8f8f" stroke-width="7"/>
<path d="M672.08 422.68A14.6 14.6 0 0 1 686.03 418.86" stroke="#f43a3a" stroke-width="3.6" fill="none"/>
<line x1="682.47" y1="432.71" x2="686.13" y2="418.47" stroke="#1d1d1d" stroke-width="3" stroke-linecap="round"/>
<path d="M670.40 412.60L670.40 420.50L662.40 420.50Z" fill="#f43a3a"/>
<text transform="translate(686.10,449.40) scale(1,1.03)" font-size="13.2" font-weight="normal" text-anchor="start" fill="#111" stroke="#111" stroke-width="0.4">0.44</text>
<text transform="translate(666.40,468.50) scale(1,1.11)" font-size="11.6" font-weight="bold" text-anchor="start" fill="#111">PsLFO2</text>
<path d="M682.40 509.90A14.6 14.6 0 1 1 697.00 495.30" stroke="#1d1d1d" stroke-width="3.6" fill="none"/>
<line x1="675.26" y1="488.16" x2="668.89" y2="481.79" stroke="#8f8f8f" stroke-width="7"/>
<line x1="682.19" y1="495.09" x2="671.79" y2="484.69" stroke="#1d1d1d" stroke-width="3" stroke-linecap="round"/>
<path d="M670.40 474.90L670.40 482.80L662.40 482.80Z" fill="#1d1d1d"/>
<text transform="translate(686.10,511.70) scale(1,1.03)" font-size="13.2" font-weight="normal" text-anchor="start" fill="#111" stroke="#111" stroke-width="0.4">0.00</text>
<text transform="translate(718.70,344.75) scale(1,1.11)" font-size="11.6" font-weight="bold" text-anchor="start" fill="#111">SZRnd</text>
<path d="M734.70 385.50A14.6 14.6 0 1 1 749.30 370.90" stroke="#1d1d1d" stroke-width="3.6" fill="none"/>
<line x1="727.97" y1="363.37" x2="721.97" y2="356.66" stroke="#8f8f8f" stroke-width="7"/>
<path d="M734.70 385.50A14.6 14.6 0 0 1 724.97 360.02" stroke="#2aa8f2" stroke-width="3.6" fill="none"/>
<line x1="734.50" y1="370.68" x2="724.70" y2="359.72" stroke="#1d1d1d" stroke-width="3" stroke-linecap="round"/>
<text transform="translate(738.40,387.30) scale(1,1.03)" font-size="13.2" font-weight="normal" text-anchor="start" fill="#111" stroke="#111" stroke-width="0.4">65.0</text>
<text transform="translate(718.70,406.60) scale(1,1.11)" font-size="11.6" font-weight="bold" text-anchor="start" fill="#111">SzLFO1</text>
<path d="M734.70 447.60A14.6 14.6 0 1 1 749.30 433.00" stroke="#1d1d1d" stroke-width="3.6" fill="none"/>
<line x1="725.17" y1="429.65" x2="716.68" y2="426.67" stroke="#8f8f8f" stroke-width="7"/>
<path d="M720.92 428.16A14.6 14.6 0 0 1 724.38 422.68" stroke="#2aa8f2" stroke-width="3.6" fill="none"/>
<line x1="734.42" y1="432.90" x2="720.55" y2="428.03" stroke="#1d1d1d" stroke-width="3" stroke-linecap="round"/>
<path d="M722.70 412.60L722.70 420.50L714.70 420.50Z" fill="#2aa8f2"/>
<text transform="translate(738.40,449.40) scale(1,1.03)" font-size="13.2" font-weight="normal" text-anchor="start" fill="#111" stroke="#111" stroke-width="0.4">-0.19</text>
<text transform="translate(718.70,468.50) scale(1,1.11)" font-size="11.6" font-weight="bold" text-anchor="start" fill="#111">SzLFO2</text>
<path d="M734.70 509.90A14.6 14.6 0 1 1 749.30 495.30" stroke="#1d1d1d" stroke-width="3.6" fill="none"/>
<line x1="727.56" y1="488.16" x2="721.19" y2="481.79" stroke="#8f8f8f" stroke-width="7"/>
<line x1="734.49" y1="495.09" x2="724.09" y2="484.69" stroke="#1d1d1d" stroke-width="3" stroke-linecap="round"/>
<path d="M722.70 474.90L722.70 482.80L714.70 482.80Z" fill="#1d1d1d"/>
<text transform="translate(738.40,511.70) scale(1,1.03)" font-size="13.2" font-weight="normal" text-anchor="start" fill="#111" stroke="#111" stroke-width="0.4">0.00</text>
<text transform="translate(771.30,344.75) scale(1,1.11)" font-size="11.6" font-weight="bold" text-anchor="start" fill="#111">VlRnd</text>
<path d="M787.30 385.50A14.6 14.6 0 1 1 801.90 370.90" stroke="#1d1d1d" stroke-width="3.6" fill="none"/>
<line x1="787.30" y1="381.00" x2="787.30" y2="390.00" stroke="#8f8f8f" stroke-width="7"/>
<line x1="787.30" y1="371.20" x2="787.30" y2="385.90" stroke="#1d1d1d" stroke-width="3" stroke-linecap="round"/>
<text transform="translate(791.00,387.30) scale(1,1.03)" font-size="13.2" font-weight="normal" text-anchor="start" fill="#111" stroke="#111" stroke-width="0.4">0.00</text>
<text transform="translate(771.30,406.60) scale(1,1.11)" font-size="11.6" font-weight="bold" text-anchor="start" fill="#111">VLLFO</text>
<path d="M787.30 447.60A14.6 14.6 0 1 1 801.90 433.00" stroke="#1d1d1d" stroke-width="3.6" fill="none"/>
<line x1="790.50" y1="423.42" x2="793.34" y2="414.88" stroke="#8f8f8f" stroke-width="7"/>
<path d="M776.98 422.68A14.6 14.6 0 0 1 791.92 419.15" stroke="#ffffff" stroke-width="3.6" fill="none"/>
<line x1="787.39" y1="432.72" x2="792.05" y2="418.77" stroke="#1d1d1d" stroke-width="3" stroke-linecap="round"/>
<path d="M775.30 412.60L775.30 420.50L767.30 420.50Z" fill="#ffffff"/>
<text transform="translate(791.00,449.40) scale(1,1.03)" font-size="13.2" font-weight="normal" text-anchor="start" fill="#111" stroke="#111" stroke-width="0.4">0.47</text>
<text transform="translate(771.30,468.50) scale(1,1.11)" font-size="11.6" font-weight="bold" text-anchor="start" fill="#111">VlLFO2</text>
<path d="M787.30 509.90A14.6 14.6 0 1 1 801.90 495.30" stroke="#1d1d1d" stroke-width="3.6" fill="none"/>
<line x1="780.16" y1="488.16" x2="773.79" y2="481.79" stroke="#8f8f8f" stroke-width="7"/>
<line x1="787.09" y1="495.09" x2="776.69" y2="484.69" stroke="#1d1d1d" stroke-width="3" stroke-linecap="round"/>
<path d="M775.30 474.90L775.30 482.80L767.30 482.80Z" fill="#1d1d1d"/>
<text transform="translate(791.00,511.70) scale(1,1.03)" font-size="13.2" font-weight="normal" text-anchor="start" fill="#111" stroke="#111" stroke-width="0.4">0.00</text>
<text transform="translate(823.20,344.75) scale(1,1.11)" font-size="11.6" font-weight="bold" text-anchor="start" fill="#111">PnRnd</text>
<path d="M839.20 385.50A14.6 14.6 0 1 1 853.80 370.90" stroke="#1d1d1d" stroke-width="3.6" fill="none"/>
<line x1="847.73" y1="365.49" x2="855.33" y2="360.67" stroke="#8f8f8f" stroke-width="7"/>
<path d="M839.20 385.50A14.6 14.6 0 1 1 851.53 363.08" stroke="#f8f070" stroke-width="3.6" fill="none"/>
<line x1="839.45" y1="370.74" x2="851.86" y2="362.86" stroke="#1d1d1d" stroke-width="3" stroke-linecap="round"/>
<text transform="translate(842.90,387.30) scale(1,1.03)" font-size="13.2" font-weight="normal" text-anchor="start" fill="#111" stroke="#111" stroke-width="0.4">0.88</text>
<text transform="translate(823.20,406.60) scale(1,1.11)" font-size="11.6" font-weight="bold" text-anchor="start" fill="#111">PNLFO</text>
<path d="M839.20 447.60A14.6 14.6 0 1 1 853.80 433.00" stroke="#1d1d1d" stroke-width="3.6" fill="none"/>
<line x1="832.06" y1="425.86" x2="825.69" y2="419.49" stroke="#8f8f8f" stroke-width="7"/>
<line x1="838.99" y1="432.79" x2="828.59" y2="422.39" stroke="#1d1d1d" stroke-width="3" stroke-linecap="round"/>
<path d="M827.20 412.60L827.20 420.50L819.20 420.50Z" fill="#1d1d1d"/>
<text transform="translate(842.90,449.40) scale(1,1.03)" font-size="13.2" font-weight="normal" text-anchor="start" fill="#111" stroke="#111" stroke-width="0.4">0.00</text>
<text transform="translate(823.20,468.50) scale(1,1.11)" font-size="11.6" font-weight="bold" text-anchor="start" fill="#111">PnLFO2</text>
<path d="M839.20 509.90A14.6 14.6 0 1 1 853.80 495.30" stroke="#1d1d1d" stroke-width="3.6" fill="none"/>
<line x1="832.06" y1="488.16" x2="825.69" y2="481.79" stroke="#8f8f8f" stroke-width="7"/>
<line x1="838.99" y1="495.09" x2="828.59" y2="484.69" stroke="#1d1d1d" stroke-width="3" stroke-linecap="round"/>
<path d="M827.20 474.90L827.20 482.80L819.20 482.80Z" fill="#1d1d1d"/>
<text transform="translate(842.90,511.70) scale(1,1.03)" font-size="13.2" font-weight="normal" text-anchor="start" fill="#111" stroke="#111" stroke-width="0.4">0.00</text>
<rect x="663.00" y="518.00" width="209.00" height="6.00" fill="#e85d5d"/>
<text transform="translate(670.20,604.90) scale(1,1.11)" font-size="14.8" font-weight="bold" text-anchor="start" fill="#1a1a1a">LFO 1 bus</text>
<rect x="802.80" y="589.30" width="66.40" height="18.60" fill="#dcdcdc" stroke="#464646" stroke-width="1.6"/>
<text transform="translate(836.00,604.30) scale(1,1.0)" font-size="15.6" font-weight="normal" text-anchor="middle" fill="#000" stroke="#000" stroke-width="0.3">0</text>
<text transform="translate(670.20,635.30) scale(1,1.11)" font-size="14.8" font-weight="bold" text-anchor="start" fill="#1a1a1a">LFO 2 bus</text>
<rect x="802.80" y="618.70" width="66.40" height="18.50" fill="#dcdcdc" stroke="#464646" stroke-width="1.6"/>
<text transform="translate(836.00,633.70) scale(1,1.0)" font-size="15.6" font-weight="normal" text-anchor="middle" fill="#000" stroke="#000" stroke-width="0.3">0</text>
<text transform="translate(670.20,662.70) scale(1,1.11)" font-size="14.8" font-weight="bold" text-anchor="start" fill="#1a1a1a">Size MS</text>
<rect x="802.80" y="646.20" width="66.40" height="19.30" fill="#dcdcdc" stroke="#464646" stroke-width="1.6"/>
<text transform="translate(836.00,661.80) scale(1,1.0)" font-size="15.6" font-weight="normal" text-anchor="middle" fill="#000" stroke="#000" stroke-width="0.3">5.00 s</text>
<text transform="translate(670.20,688.80) scale(1,1.11)" font-size="14.8" font-weight="bold" text-anchor="start" fill="#1a1a1a">Bind Size</text>
<rect x="802.80" y="673.20" width="19.20" height="18.60" fill="#ffb300" stroke="#464646" stroke-width="1.6"/>
<text transform="translate(670.20,717.40) scale(1,1.11)" font-size="14.8" font-weight="bold" text-anchor="start" fill="#1a1a1a">Revers</text>
<rect x="802.80" y="702.40" width="19.20" height="18.20" fill="#ffb300" stroke="#464646" stroke-width="1.6"/>
<text transform="translate(670.20,746.60) scale(1,1.11)" font-size="14.8" font-weight="bold" text-anchor="start" fill="#1a1a1a">Random Ratio</text>
<rect x="802.80" y="731.00" width="66.40" height="19.30" fill="#dcdcdc" stroke="#464646" stroke-width="1.6"/>
<text transform="translate(836.00,746.60) scale(1,1.0)" font-size="15.6" font-weight="normal" text-anchor="middle" fill="#000" stroke="#000" stroke-width="0.3">30.0 %</text>
<rect x="663.00" y="762.50" width="209.00" height="7.00" fill="#e85d5d"/>
<rect x="886.55" y="92.10" width="47.40" height="19.70" fill="#dcdcdc" stroke="#464646" stroke-width="1.6"/>
<text transform="translate(889.35,107.80) scale(1,1.11)" font-size="14" font-weight="normal" text-anchor="start" fill="#000" stroke="#000" stroke-width="0.15">Seq</text>
<path d="M919.35 97.90L930.15 97.90L924.75 106.00Z" fill="#000"/>
<rect x="940.85" y="92.10" width="31.70" height="19.70" fill="#9e9e9e" stroke="#464646" stroke-width="1.6"/>
<text transform="translate(943.65,107.80) scale(1,1.11)" font-size="14" font-weight="normal" text-anchor="start" fill="#000" stroke="#000" stroke-width="0.15">A</text>
<path d="M957.95 97.90L968.75 97.90L963.35 106.00Z" fill="#000"/>
<rect x="979.95" y="92.10" width="28.30" height="19.70" fill="#9e9e9e" stroke="#464646" stroke-width="1.6"/>
<text transform="translate(982.75,107.80) scale(1,1.11)" font-size="14" font-weight="normal" text-anchor="start" fill="#000" stroke="#000" stroke-width="0.15">1</text>
<path d="M993.65 97.90L1004.45 97.90L999.05 106.00Z" fill="#000"/>
<rect x="1015.95" y="92.10" width="46.30" height="19.70" fill="#9e9e9e" stroke="#464646" stroke-width="1.6"/>
<text transform="translate(1018.75,107.80) scale(1,1.11)" font-size="14" font-weight="normal" text-anchor="start" fill="#000" stroke="#000" stroke-width="0.15">Trig</text>
<path d="M1047.65 97.90L1058.45 97.90L1053.05 106.00Z" fill="#000"/>
<rect x="886.55" y="118.80" width="32.30" height="19.10" fill="#dcdcdc" stroke="#464646" stroke-width="1.6"/>
<text transform="translate(889.35,134.50) scale(1,1.11)" font-size="14" font-weight="normal" text-anchor="start" fill="#000" stroke="#000" stroke-width="0.15">A</text>
<path d="M904.25 124.60L915.05 124.60L909.65 132.70Z" fill="#000"/>
<rect x="927.55" y="118.80" width="29.10" height="19.10" fill="#dcdcdc" stroke="#464646" stroke-width="1.6"/>
<text transform="translate(930.35,134.50) scale(1,1.11)" font-size="14" font-weight="normal" text-anchor="start" fill="#000" stroke="#000" stroke-width="0.15">1</text>
<path d="M942.05 124.60L952.85 124.60L947.45 132.70Z" fill="#000"/>
<rect x="965.15" y="118.80" width="18.80" height="19.10" fill="#b4b4b4" stroke="#464646" stroke-width="1.6"/>
<rect x="991.85" y="118.80" width="70.40" height="19.10" fill="#9e9e9e" stroke="#464646" stroke-width="1.6"/>
<text transform="translate(994.65,134.50) scale(1,1.11)" font-size="14" font-weight="normal" text-anchor="start" fill="#000" stroke="#000" stroke-width="0.15">None</text>
<path d="M1047.65 124.60L1058.45 124.60L1053.05 132.70Z" fill="#000"/>
<text transform="translate(888.40,154.50) scale(1,1.11)" font-size="11.6" font-weight="bold" text-anchor="start" fill="#111">Position</text>
<path d="M904.40 195.90A14.6 14.6 0 1 1 919.00 181.30" stroke="#1d1d1d" stroke-width="3.6" fill="none"/>
<line x1="900.24" y1="190.51" x2="896.54" y2="198.71" stroke="#8f8f8f" stroke-width="7"/>
<path d="M904.40 195.90A14.6 14.6 0 0 1 898.39 194.61" stroke="#f43a3a" stroke-width="3.6" fill="none"/>
<line x1="904.28" y1="181.57" x2="898.23" y2="194.97" stroke="#1d1d1d" stroke-width="3" stroke-linecap="round"/>
<text transform="translate(908.10,197.70) scale(1,1.03)" font-size="13.2" font-weight="normal" text-anchor="start" fill="#111" stroke="#111" stroke-width="0.4">0.09</text>
<text transform="translate(940.70,154.50) scale(1,1.11)" font-size="11.6" font-weight="bold" text-anchor="start" fill="#111">MPos</text>
<path d="M956.70 195.90A14.6 14.6 0 1 1 971.30 181.30" stroke="#1d1d1d" stroke-width="3.6" fill="none"/>
<line x1="954.03" y1="171.56" x2="951.66" y2="162.88" stroke="#8f8f8f" stroke-width="7"/>
<path d="M956.70 195.90A14.6 14.6 0 0 1 952.85 167.22" stroke="#e8701e" stroke-width="3.6" fill="none"/>
<line x1="956.62" y1="181.01" x2="952.74" y2="166.83" stroke="#1d1d1d" stroke-width="3" stroke-linecap="round"/>
<text transform="translate(960.40,197.70) scale(1,1.03)" font-size="13.2" font-weight="normal" text-anchor="start" fill="#111" stroke="#111" stroke-width="0.4">0.61</text>
<text transform="translate(993.30,154.50) scale(1,1.11)" font-size="11.6" font-weight="bold" text-anchor="start" fill="#111">Size</text>
<path d="M1009.30 195.90A14.6 14.6 0 1 1 1023.90 181.30" stroke="#1d1d1d" stroke-width="3.6" fill="none"/>
<line x1="1009.30" y1="191.40" x2="1009.30" y2="200.40" stroke="#8f8f8f" stroke-width="7"/>
<line x1="1009.30" y1="181.60" x2="1009.30" y2="196.30" stroke="#1d1d1d" stroke-width="3" stroke-linecap="round"/>
<text transform="translate(1013.00,197.70) scale(1,1.03)" font-size="13.2" font-weight="normal" text-anchor="start" fill="#111" stroke="#111" stroke-width="0.4">0.00</text>
<text transform="translate(1045.20,154.50) scale(1,1.11)" font-size="11.6" font-weight="bold" text-anchor="start" fill="#111">MSize</text>
<path d="M1061.20 195.90A14.6 14.6 0 1 1 1075.80 181.30" stroke="#1d1d1d" stroke-width="3.6" fill="none"/>
<line x1="1054.64" y1="188.98" x2="1048.80" y2="195.82" stroke="#8f8f8f" stroke-width="7"/>
<path d="M1061.20 195.90A14.6 14.6 0 0 1 1051.72 192.40" stroke="#2a82cc" stroke-width="3.6" fill="none"/>
<line x1="1061.01" y1="181.53" x2="1051.46" y2="192.71" stroke="#1d1d1d" stroke-width="3" stroke-linecap="round"/>
<text transform="translate(1064.90,197.70) scale(1,1.03)" font-size="13.2" font-weight="normal" text-anchor="start" fill="#111" stroke="#111" stroke-width="0.4">0.15</text>
<text transform="translate(888.40,217.00) scale(1,1.11)" font-size="11.6" font-weight="bold" text-anchor="start" fill="#111">Volume</text>
<path d="M904.40 258.10A14.6 14.6 0 1 1 919.00 243.50" stroke="#1d1d1d" stroke-width="3.6" fill="none"/>
<line x1="914.50" y1="243.50" x2="923.50" y2="243.50" stroke="#8f8f8f" stroke-width="7"/>
<path d="M904.40 258.10A14.6 14.6 0 1 1 919.00 243.50" stroke="#ffffff" stroke-width="3.6" fill="none"/>
<line x1="904.70" y1="243.50" x2="919.40" y2="243.50" stroke="#1d1d1d" stroke-width="3" stroke-linecap="round"/>
<text transform="translate(908.10,259.90) scale(1,1.03)" font-size="13.2" font-weight="normal" text-anchor="start" fill="#111" stroke="#111" stroke-width="0.4">1.00</text>
<text transform="translate(940.70,217.00) scale(1,1.11)" font-size="11.6" font-weight="bold" text-anchor="start" fill="#111">Pan</text>
<path d="M956.70 258.10A14.6 14.6 0 1 1 971.30 243.50" stroke="#1d1d1d" stroke-width="3.6" fill="none"/>
<line x1="958.98" y1="233.66" x2="961.01" y2="224.89" stroke="#8f8f8f" stroke-width="7"/>
<path d="M946.38 233.18A14.6 14.6 0 0 1 960.00 229.28" stroke="#f5e46a" stroke-width="3.6" fill="none"/>
<line x1="956.77" y1="243.21" x2="960.09" y2="228.89" stroke="#1d1d1d" stroke-width="3" stroke-linecap="round"/>
<path d="M944.70 223.10L944.70 231.00L936.70 231.00Z" fill="#f5e46a"/>
<text transform="translate(960.40,259.90) scale(1,1.03)" font-size="13.2" font-weight="normal" text-anchor="start" fill="#111" stroke="#111" stroke-width="0.4">0.43</text>
<text transform="translate(993.30,217.00) scale(1,1.11)" font-size="11.6" font-weight="bold" text-anchor="start" fill="#111">Tune</text>
<path d="M1009.30 258.10A14.6 14.6 0 1 1 1023.90 243.50" stroke="#1d1d1d" stroke-width="3.6" fill="none"/>
<line x1="999.25" y1="244.49" x2="990.29" y2="245.37" stroke="#8f8f8f" stroke-width="7"/>
<path d="M994.77 244.93A14.6 14.6 0 0 1 998.98 233.18" stroke="#3cc22c" stroke-width="3.6" fill="none"/>
<line x1="1009.00" y1="243.53" x2="994.37" y2="244.97" stroke="#1d1d1d" stroke-width="3" stroke-linecap="round"/>
<path d="M997.30 223.10L997.30 231.00L989.30 231.00Z" fill="#3cc22c"/>
<text transform="translate(1013.00,259.90) scale(1,1.03)" font-size="13.2" font-weight="normal" text-anchor="start" fill="#111" stroke="#111" stroke-width="0.4">-18</text>
<text transform="translate(1045.20,217.00) scale(1,1.11)" font-size="11.6" font-weight="bold" text-anchor="start" fill="#111">Fine</text>
<path d="M1061.20 258.10A14.6 14.6 0 1 1 1075.80 243.50" stroke="#1d1d1d" stroke-width="3.6" fill="none"/>
<line x1="1060.01" y1="233.47" x2="1058.96" y2="224.53" stroke="#8f8f8f" stroke-width="7"/>
<path d="M1050.88 233.18A14.6 14.6 0 0 1 1059.48 229.00" stroke="#40f0b4" stroke-width="3.6" fill="none"/>
<line x1="1061.16" y1="243.20" x2="1059.44" y2="228.60" stroke="#1d1d1d" stroke-width="3" stroke-linecap="round"/>
<path d="M1049.20 223.10L1049.20 231.00L1041.20 231.00Z" fill="#40f0b4"/>
<text transform="translate(1064.90,259.90) scale(1,1.03)" font-size="13.2" font-weight="normal" text-anchor="start" fill="#111" stroke="#111" stroke-width="0.4">0.85</text>
<rect x="885.00" y="273.00" width="209.00" height="6.00" fill="#f0902a"/>
<text transform="translate(888.40,344.75) scale(1,1.11)" font-size="11.6" font-weight="bold" text-anchor="start" fill="#111">PSRnd</text>
<path d="M904.40 385.50A14.6 14.6 0 1 1 919.00 370.90" stroke="#1d1d1d" stroke-width="3.6" fill="none"/>
<line x1="895.71" y1="376.04" x2="887.96" y2="380.62" stroke="#8f8f8f" stroke-width="7"/>
<path d="M904.40 385.50A14.6 14.6 0 0 1 891.83 378.33" stroke="#f43a3a" stroke-width="3.6" fill="none"/>
<line x1="904.14" y1="371.05" x2="891.49" y2="378.54" stroke="#1d1d1d" stroke-width="3" stroke-linecap="round"/>
<text transform="translate(908.10,387.30) scale(1,1.03)" font-size="13.2" font-weight="normal" text-anchor="start" fill="#111" stroke="#111" stroke-width="0.4">0.22</text>
<text transform="translate(888.40,406.60) scale(1,1.11)" font-size="11.6" font-weight="bold" text-anchor="start" fill="#111">PsLFO1</text>
<path d="M904.40 447.60A14.6 14.6 0 1 1 919.00 433.00" stroke="#1d1d1d" stroke-width="3.6" fill="none"/>
<line x1="895.59" y1="437.94" x2="887.74" y2="442.33" stroke="#8f8f8f" stroke-width="7"/>
<path d="M891.66 440.13A14.6 14.6 0 0 1 894.08 422.68" stroke="#f43a3a" stroke-width="3.6" fill="none"/>
<line x1="904.14" y1="433.15" x2="891.31" y2="440.33" stroke="#1d1d1d" stroke-width="3" stroke-linecap="round"/>
<path d="M892.40 412.60L892.40 420.50L884.40 420.50Z" fill="#f43a3a"/>
<text transform="translate(908.10,449.40) scale(1,1.03)" font-size="13.2" font-weight="normal" text-anchor="start" fill="#111" stroke="#111" stroke-width="0.4">-0.55</text>
<text transform="translate(888.40,468.50) scale(1,1.11)" font-size="11.6" font-weight="bold" text-anchor="start" fill="#111">PsLFO2</text>
<path d="M904.40 509.90A14.6 14.6 0 1 1 919.00 495.30" stroke="#1d1d1d" stroke-width="3.6" fill="none"/>
<line x1="906.21" y1="485.36" x2="907.83" y2="476.51" stroke="#8f8f8f" stroke-width="7"/>
<path d="M894.08 484.98A14.6 14.6 0 0 1 907.02 480.94" stroke="#f43a3a" stroke-width="3.6" fill="none"/>
<line x1="904.45" y1="495.00" x2="907.09" y2="480.54" stroke="#1d1d1d" stroke-width="3" stroke-linecap="round"/>
<path d="M892.40 474.90L892.40 482.80L884.40 482.80Z" fill="#f43a3a"/>
<text transform="translate(908.10,511.70) scale(1,1.03)" font-size="13.2" font-weight="normal" text-anchor="start" fill="#111" stroke="#111" stroke-width="0.4">0.41</text>
<text transform="translate(940.70,344.75) scale(1,1.11)" font-size="11.6" font-weight="bold" text-anchor="start" fill="#111">SZRnd</text>
<path d="M956.70 385.50A14.6 14.6 0 1 1 971.30 370.90" stroke="#1d1d1d" stroke-width="3.6" fill="none"/>
<line x1="947.81" y1="375.70" x2="939.89" y2="379.97" stroke="#8f8f8f" stroke-width="7"/>
<path d="M956.70 385.50A14.6 14.6 0 0 1 943.85 377.83" stroke="#2aa8f2" stroke-width="3.6" fill="none"/>
<line x1="956.44" y1="371.04" x2="943.50" y2="378.02" stroke="#1d1d1d" stroke-width="3" stroke-linecap="round"/>
<text transform="translate(960.40,387.30) scale(1,1.03)" font-size="13.2" font-weight="normal" text-anchor="start" fill="#111" stroke="#111" stroke-width="0.4">29.0</text>
<text transform="translate(940.70,406.60) scale(1,1.11)" font-size="11.6" font-weight="bold" text-anchor="start" fill="#111">SzLFO1</text>
<path d="M956.70 447.60A14.6 14.6 0 1 1 971.30 433.00" stroke="#1d1d1d" stroke-width="3.6" fill="none"/>
<line x1="949.56" y1="425.86" x2="943.19" y2="419.49" stroke="#8f8f8f" stroke-width="7"/>
<line x1="956.49" y1="432.79" x2="946.09" y2="422.39" stroke="#1d1d1d" stroke-width="3" stroke-linecap="round"/>
<path d="M944.70 412.60L944.70 420.50L936.70 420.50Z" fill="#1d1d1d"/>
<text transform="translate(960.40,449.40) scale(1,1.03)" font-size="13.2" font-weight="normal" text-anchor="start" fill="#111" stroke="#111" stroke-width="0.4">0.00</text>
<text transform="translate(940.70,468.50) scale(1,1.11)" font-size="11.6" font-weight="bold" text-anchor="start" fill="#111">SzLFO2</text>
<path d="M956.70 509.90A14.6 14.6 0 1 1 971.30 495.30" stroke="#1d1d1d" stroke-width="3.6" fill="none"/>
<line x1="966.70" y1="493.88" x2="975.61" y2="492.61" stroke="#8f8f8f" stroke-width="7"/>
<path d="M946.38 484.98A14.6 14.6 0 0 1 971.15 493.24" stroke="#2aa8f2" stroke-width="3.6" fill="none"/>
<line x1="957.00" y1="495.26" x2="971.55" y2="493.19" stroke="#1d1d1d" stroke-width="3" stroke-linecap="round"/>
<path d="M944.70 474.90L944.70 482.80L936.70 482.80Z" fill="#2aa8f2"/>
<text transform="translate(960.40,511.70) scale(1,1.03)" font-size="13.2" font-weight="normal" text-anchor="start" fill="#111" stroke="#111" stroke-width="0.4">0.94</text>
<text transform="translate(993.30,344.75) scale(1,1.11)" font-size="11.6" font-weight="bold" text-anchor="start" fill="#111">VlRnd</text>
<path d="M1009.30 385.50A14.6 14.6 0 1 1 1023.90 370.90" stroke="#1d1d1d" stroke-width="3.6" fill="none"/>
<line x1="1009.30" y1="381.00" x2="1009.30" y2="390.00" stroke="#8f8f8f" stroke-width="7"/>
<line x1="1009.30" y1="371.20" x2="1009.30" y2="385.90" stroke="#1d1d1d" stroke-width="3" stroke-linecap="round"/>
<text transform="translate(1013.00,387.30) scale(1,1.03)" font-size="13.2" font-weight="normal" text-anchor="start" fill="#111" stroke="#111" stroke-width="0.4">0.00</text>
<text transform="translate(993.30,406.60) scale(1,1.11)" font-size="11.6" font-weight="bold" text-anchor="start" fill="#111">VLLFO</text>
<path d="M1009.30 447.60A14.6 14.6 0 1 1 1023.90 433.00" stroke="#1d1d1d" stroke-width="3.6" fill="none"/>
<line x1="1011.58" y1="423.16" x2="1013.61" y2="414.39" stroke="#8f8f8f" stroke-width="7"/>
<path d="M998.98 422.68A14.6 14.6 0 0 1 1012.60 418.78" stroke="#ffffff" stroke-width="3.6" fill="none"/>
<line x1="1009.37" y1="432.71" x2="1012.69" y2="418.39" stroke="#1d1d1d" stroke-width="3" stroke-linecap="round"/>
<path d="M997.30 412.60L997.30 420.50L989.30 420.50Z" fill="#ffffff"/>
<text transform="translate(1013.00,449.40) scale(1,1.03)" font-size="13.2" font-weight="normal" text-anchor="start" fill="#111" stroke="#111" stroke-width="0.4">0.43</text>
<text transform="translate(993.30,468.50) scale(1,1.11)" font-size="11.6" font-weight="bold" text-anchor="start" fill="#111">VlLFO2</text>
<path d="M1009.30 509.90A14.6 14.6 0 1 1 1023.90 495.30" stroke="#1d1d1d" stroke-width="3.6" fill="none"/>
<line x1="1002.16" y1="488.16" x2="995.79" y2="481.79" stroke="#8f8f8f" stroke-width="7"/>
<line x1="1009.09" y1="495.09" x2="998.69" y2="484.69" stroke="#1d1d1d" stroke-width="3" stroke-linecap="round"/>
<path d="M997.30 474.90L997.30 482.80L989.30 482.80Z" fill="#1d1d1d"/>
<text transform="translate(1013.00,511.70) scale(1,1.03)" font-size="13.2" font-weight="normal" text-anchor="start" fill="#111" stroke="#111" stroke-width="0.4">0.00</text>
<text transform="translate(1045.20,344.75) scale(1,1.11)" font-size="11.6" font-weight="bold" text-anchor="start" fill="#111">PnRnd</text>
<path d="M1061.20 385.50A14.6 14.6 0 1 1 1075.80 370.90" stroke="#1d1d1d" stroke-width="3.6" fill="none"/>
<line x1="1061.20" y1="381.00" x2="1061.20" y2="390.00" stroke="#8f8f8f" stroke-width="7"/>
<line x1="1061.20" y1="371.20" x2="1061.20" y2="385.90" stroke="#1d1d1d" stroke-width="3" stroke-linecap="round"/>
<text transform="translate(1064.90,387.30) scale(1,1.03)" font-size="13.2" font-weight="normal" text-anchor="start" fill="#111" stroke="#111" stroke-width="0.4">0.00</text>
<text transform="translate(1045.20,406.60) scale(1,1.11)" font-size="11.6" font-weight="bold" text-anchor="start" fill="#111">PNLFO</text>
<path d="M1061.20 447.60A14.6 14.6 0 1 1 1075.80 433.00" stroke="#1d1d1d" stroke-width="3.6" fill="none"/>
<line x1="1054.06" y1="425.86" x2="1047.69" y2="419.49" stroke="#8f8f8f" stroke-width="7"/>
<line x1="1060.99" y1="432.79" x2="1050.59" y2="422.39" stroke="#1d1d1d" stroke-width="3" stroke-linecap="round"/>
<path d="M1049.20 412.60L1049.20 420.50L1041.20 420.50Z" fill="#1d1d1d"/>
<text transform="translate(1064.90,449.40) scale(1,1.03)" font-size="13.2" font-weight="normal" text-anchor="start" fill="#111" stroke="#111" stroke-width="0.4">0.00</text>
<text transform="translate(1045.20,468.50) scale(1,1.11)" font-size="11.6" font-weight="bold" text-anchor="start" fill="#111">PnLFO2</text>
<path d="M1061.20 509.90A14.6 14.6 0 1 1 1075.80 495.30" stroke="#1d1d1d" stroke-width="3.6" fill="none"/>
<line x1="1054.06" y1="488.16" x2="1047.69" y2="481.79" stroke="#8f8f8f" stroke-width="7"/>
<line x1="1060.99" y1="495.09" x2="1050.59" y2="484.69" stroke="#1d1d1d" stroke-width="3" stroke-linecap="round"/>
<path d="M1049.20 474.90L1049.20 482.80L1041.20 482.80Z" fill="#1d1d1d"/>
<text transform="translate(1064.90,511.70) scale(1,1.03)" font-size="13.2" font-weight="normal" text-anchor="start" fill="#111" stroke="#111" stroke-width="0.4">0.00</text>
<rect x="885.00" y="518.00" width="209.00" height="6.00" fill="#f0902a"/>
<text transform="translate(892.20,604.90) scale(1,1.11)" font-size="14.8" font-weight="bold" text-anchor="start" fill="#1a1a1a">LFO 1 bus</text>
<rect x="1024.80" y="589.30" width="66.40" height="18.60" fill="#dcdcdc" stroke="#464646" stroke-width="1.6"/>
<text transform="translate(1058.00,604.30) scale(1,1.0)" font-size="15.6" font-weight="normal" text-anchor="middle" fill="#000" stroke="#000" stroke-width="0.3">2</text>
<text transform="translate(892.20,635.30) scale(1,1.11)" font-size="14.8" font-weight="bold" text-anchor="start" fill="#1a1a1a">LFO 2 bus</text>
<rect x="1024.80" y="618.70" width="66.40" height="18.50" fill="#dcdcdc" stroke="#464646" stroke-width="1.6"/>
<text transform="translate(1058.00,633.70) scale(1,1.0)" font-size="15.6" font-weight="normal" text-anchor="middle" fill="#000" stroke="#000" stroke-width="0.3">0</text>
<text transform="translate(892.20,662.70) scale(1,1.11)" font-size="14.8" font-weight="bold" text-anchor="start" fill="#1a1a1a">Size MS</text>
<rect x="1024.80" y="646.20" width="66.40" height="19.30" fill="#dcdcdc" stroke="#464646" stroke-width="1.6"/>
<text transform="translate(1058.00,661.80) scale(1,1.0)" font-size="15.6" font-weight="normal" text-anchor="middle" fill="#000" stroke="#000" stroke-width="0.3">5.00 s</text>
<text transform="translate(892.20,688.80) scale(1,1.11)" font-size="14.8" font-weight="bold" text-anchor="start" fill="#1a1a1a">Bind Size</text>
<rect x="1024.80" y="673.20" width="19.20" height="18.60" fill="#ffb300" stroke="#464646" stroke-width="1.6"/>
<text transform="translate(892.20,717.40) scale(1,1.11)" font-size="14.8" font-weight="bold" text-anchor="start" fill="#1a1a1a">Revers</text>
<rect x="1024.80" y="702.40" width="19.20" height="18.20" fill="#b4b4b4" stroke="#464646" stroke-width="1.6"/>
<text transform="translate(892.20,746.60) scale(1,1.11)" font-size="14.8" font-weight="bold" text-anchor="start" fill="#1a1a1a">Random Ratio</text>
<rect x="1024.80" y="731.00" width="66.40" height="19.30" fill="#dcdcdc" stroke="#464646" stroke-width="1.6"/>
<text transform="translate(1058.00,746.60) scale(1,1.0)" font-size="15.6" font-weight="normal" text-anchor="middle" fill="#000" stroke="#000" stroke-width="0.3">30.0 %</text>
<rect x="885.00" y="762.50" width="209.00" height="7.00" fill="#f0902a"/>
<rect x="1108.80" y="92.10" width="47.40" height="19.70" fill="#dcdcdc" stroke="#464646" stroke-width="1.6"/>
<text transform="translate(1111.60,107.80) scale(1,1.11)" font-size="14" font-weight="normal" text-anchor="start" fill="#000" stroke="#000" stroke-width="0.15">Seq</text>
<path d="M1141.60 97.90L1152.40 97.90L1147.00 106.00Z" fill="#000"/>
<rect x="1163.10" y="92.10" width="31.70" height="19.70" fill="#9e9e9e" stroke="#464646" stroke-width="1.6"/>
<text transform="translate(1165.90,107.80) scale(1,1.11)" font-size="14" font-weight="normal" text-anchor="start" fill="#000" stroke="#000" stroke-width="0.15">A</text>
<path d="M1180.20 97.90L1191.00 97.90L1185.60 106.00Z" fill="#000"/>
<rect x="1202.20" y="92.10" width="28.30" height="19.70" fill="#9e9e9e" stroke="#464646" stroke-width="1.6"/>
<text transform="translate(1205.00,107.80) scale(1,1.11)" font-size="14" font-weight="normal" text-anchor="start" fill="#000" stroke="#000" stroke-width="0.15">1</text>
<path d="M1215.90 97.90L1226.70 97.90L1221.30 106.00Z" fill="#000"/>
<rect x="1238.20" y="92.10" width="46.30" height="19.70" fill="#9e9e9e" stroke="#464646" stroke-width="1.6"/>
<text transform="translate(1241.00,107.80) scale(1,1.11)" font-size="14" font-weight="normal" text-anchor="start" fill="#000" stroke="#000" stroke-width="0.15">Trig</text>
<path d="M1269.90 97.90L1280.70 97.90L1275.30 106.00Z" fill="#000"/>
<rect x="1108.80" y="118.80" width="32.30" height="19.10" fill="#dcdcdc" stroke="#464646" stroke-width="1.6"/>
<text transform="translate(1111.60,134.50) scale(1,1.11)" font-size="14" font-weight="normal" text-anchor="start" fill="#000" stroke="#000" stroke-width="0.15">A</text>
<path d="M1126.50 124.60L1137.30 124.60L1131.90 132.70Z" fill="#000"/>
<rect x="1149.80" y="118.80" width="29.10" height="19.10" fill="#dcdcdc" stroke="#464646" stroke-width="1.6"/>
<text transform="translate(1152.60,134.50) scale(1,1.11)" font-size="14" font-weight="normal" text-anchor="start" fill="#000" stroke="#000" stroke-width="0.15">1</text>
<path d="M1164.30 124.60L1175.10 124.60L1169.70 132.70Z" fill="#000"/>
<rect x="1187.40" y="118.80" width="18.80" height="19.10" fill="#b4b4b4" stroke="#464646" stroke-width="1.6"/>
<rect x="1214.10" y="118.80" width="70.40" height="19.10" fill="#9e9e9e" stroke="#464646" stroke-width="1.6"/>
<text transform="translate(1216.90,134.50) scale(1,1.11)" font-size="14" font-weight="normal" text-anchor="start" fill="#000" stroke="#000" stroke-width="0.15">None</text>
<path d="M1269.90 124.60L1280.70 124.60L1275.30 132.70Z" fill="#000"/>
<text transform="translate(1110.40,154.50) scale(1,1.11)" font-size="11.6" font-weight="bold" text-anchor="start" fill="#111">Position</text>
<path d="M1126.40 195.90A14.6 14.6 0 1 1 1141.00 181.30" stroke="#1d1d1d" stroke-width="3.6" fill="none"/>
<line x1="1120.72" y1="172.95" x2="1115.66" y2="165.50" stroke="#8f8f8f" stroke-width="7"/>
<path d="M1126.40 195.90A14.6 14.6 0 0 1 1118.19 169.22" stroke="#f43a3a" stroke-width="3.6" fill="none"/>
<line x1="1126.23" y1="181.05" x2="1117.97" y2="168.89" stroke="#1d1d1d" stroke-width="3" stroke-linecap="round"/>
<text transform="translate(1130.10,197.70) scale(1,1.03)" font-size="13.2" font-weight="normal" text-anchor="start" fill="#111" stroke="#111" stroke-width="0.4">0.54</text>
<text transform="translate(1162.70,154.50) scale(1,1.11)" font-size="11.6" font-weight="bold" text-anchor="start" fill="#111">MPos</text>
<path d="M1178.70 195.90A14.6 14.6 0 1 1 1193.30 181.30" stroke="#1d1d1d" stroke-width="3.6" fill="none"/>
<line x1="1171.45" y1="188.33" x2="1164.98" y2="194.59" stroke="#8f8f8f" stroke-width="7"/>
<path d="M1178.70 195.90A14.6 14.6 0 0 1 1168.22 191.46" stroke="#e8701e" stroke-width="3.6" fill="none"/>
<line x1="1178.48" y1="181.51" x2="1167.93" y2="191.74" stroke="#1d1d1d" stroke-width="3" stroke-linecap="round"/>
<text transform="translate(1182.40,197.70) scale(1,1.03)" font-size="13.2" font-weight="normal" text-anchor="start" fill="#111" stroke="#111" stroke-width="0.4">0.17</text>
<text transform="translate(1215.30,154.50) scale(1,1.11)" font-size="11.6" font-weight="bold" text-anchor="start" fill="#111">Size</text>
<path d="M1231.30 195.90A14.6 14.6 0 1 1 1245.90 181.30" stroke="#1d1d1d" stroke-width="3.6" fill="none"/>
<line x1="1223.13" y1="187.24" x2="1215.85" y2="192.53" stroke="#8f8f8f" stroke-width="7"/>
<path d="M1231.30 195.90A14.6 14.6 0 0 1 1219.49 189.88" stroke="#2aa8f2" stroke-width="3.6" fill="none"/>
<line x1="1231.06" y1="181.48" x2="1219.16" y2="190.12" stroke="#1d1d1d" stroke-width="3" stroke-linecap="round"/>
<text transform="translate(1235.00,197.70) scale(1,1.03)" font-size="13.2" font-weight="normal" text-anchor="start" fill="#111" stroke="#111" stroke-width="0.4">0.20</text>
<text transform="translate(1267.20,154.50) scale(1,1.11)" font-size="11.6" font-weight="bold" text-anchor="start" fill="#111">MSize</text>
<path d="M1283.20 195.90A14.6 14.6 0 1 1 1297.80 181.30" stroke="#1d1d1d" stroke-width="3.6" fill="none"/>
<line x1="1283.20" y1="191.40" x2="1283.20" y2="200.40" stroke="#8f8f8f" stroke-width="7"/>
<line x1="1283.20" y1="181.60" x2="1283.20" y2="196.30" stroke="#1d1d1d" stroke-width="3" stroke-linecap="round"/>
<text transform="translate(1286.90,197.70) scale(1,1.03)" font-size="13.2" font-weight="normal" text-anchor="start" fill="#111" stroke="#111" stroke-width="0.4">0.00</text>
<text transform="translate(1110.40,217.00) scale(1,1.11)" font-size="11.6" font-weight="bold" text-anchor="start" fill="#111">Volume</text>
<path d="M1126.40 258.10A14.6 14.6 0 1 1 1141.00 243.50" stroke="#1d1d1d" stroke-width="3.6" fill="none"/>
<line x1="1136.50" y1="243.50" x2="1145.50" y2="243.50" stroke="#8f8f8f" stroke-width="7"/>
<path d="M1126.40 258.10A14.6 14.6 0 1 1 1141.00 243.50" stroke="#ffffff" stroke-width="3.6" fill="none"/>
<line x1="1126.70" y1="243.50" x2="1141.40" y2="243.50" stroke="#1d1d1d" stroke-width="3" stroke-linecap="round"/>
<text transform="translate(1130.10,259.90) scale(1,1.03)" font-size="13.2" font-weight="normal" text-anchor="start" fill="#111" stroke="#111" stroke-width="0.4">1.00</text>
<text transform="translate(1162.70,217.00) scale(1,1.11)" font-size="11.6" font-weight="bold" text-anchor="start" fill="#111">Pan</text>
<path d="M1178.70 258.10A14.6 14.6 0 1 1 1193.30 243.50" stroke="#1d1d1d" stroke-width="3.6" fill="none"/>
<line x1="1186.53" y1="237.12" x2="1193.51" y2="231.44" stroke="#8f8f8f" stroke-width="7"/>
<path d="M1168.38 233.18A14.6 14.6 0 0 1 1190.02 234.28" stroke="#f5e46a" stroke-width="3.6" fill="none"/>
<line x1="1178.93" y1="243.31" x2="1190.33" y2="234.03" stroke="#1d1d1d" stroke-width="3" stroke-linecap="round"/>
<path d="M1166.70 223.10L1166.70 231.00L1158.70 231.00Z" fill="#f5e46a"/>
<text transform="translate(1182.40,259.90) scale(1,1.03)" font-size="13.2" font-weight="normal" text-anchor="start" fill="#111" stroke="#111" stroke-width="0.4">0.71</text>
<text transform="translate(1215.30,217.00) scale(1,1.11)" font-size="11.6" font-weight="bold" text-anchor="start" fill="#111">Tune</text>
<path d="M1231.30 258.10A14.6 14.6 0 1 1 1245.90 243.50" stroke="#1d1d1d" stroke-width="3.6" fill="none"/>
<line x1="1237.32" y1="235.39" x2="1242.68" y2="228.16" stroke="#8f8f8f" stroke-width="7"/>
<path d="M1220.98 233.18A14.6 14.6 0 0 1 1240.00 231.77" stroke="#3cc22c" stroke-width="3.6" fill="none"/>
<line x1="1231.48" y1="243.26" x2="1240.24" y2="231.45" stroke="#1d1d1d" stroke-width="3" stroke-linecap="round"/>
<path d="M1219.30 223.10L1219.30 231.00L1211.30 231.00Z" fill="#3cc22c"/>
<text transform="translate(1235.00,259.90) scale(1,1.03)" font-size="13.2" font-weight="normal" text-anchor="start" fill="#111" stroke="#111" stroke-width="0.4">29</text>
<text transform="translate(1267.20,217.00) scale(1,1.11)" font-size="11.6" font-weight="bold" text-anchor="start" fill="#111">Fine</text>
<path d="M1283.20 258.10A14.6 14.6 0 1 1 1297.80 243.50" stroke="#1d1d1d" stroke-width="3.6" fill="none"/>
<line x1="1280.92" y1="233.66" x2="1278.89" y2="224.89" stroke="#8f8f8f" stroke-width="7"/>
<path d="M1272.88 233.18A14.6 14.6 0 0 1 1279.90 229.28" stroke="#40f0b4" stroke-width="3.6" fill="none"/>
<line x1="1283.13" y1="243.21" x2="1279.81" y2="228.89" stroke="#1d1d1d" stroke-width="3" stroke-linecap="round"/>
<path d="M1271.20 223.10L1271.20 231.00L1263.20 231.00Z" fill="#40f0b4"/>
<text transform="translate(1286.90,259.90) scale(1,1.03)" font-size="13.2" font-weight="normal" text-anchor="start" fill="#111" stroke="#111" stroke-width="0.4">0.71</text>
<rect x="1107.00" y="273.00" width="209.00" height="6.00" fill="#f2cc3c"/>
<text transform="translate(1110.40,344.75) scale(1,1.11)" font-size="11.6" font-weight="bold" text-anchor="start" fill="#111">PSRnd</text>
<path d="M1126.40 385.50A14.6 14.6 0 1 1 1141.00 370.90" stroke="#1d1d1d" stroke-width="3.6" fill="none"/>
<line x1="1118.82" y1="377.58" x2="1112.07" y2="383.53" stroke="#8f8f8f" stroke-width="7"/>
<path d="M1126.40 385.50A14.6 14.6 0 0 1 1115.45 380.56" stroke="#f43a3a" stroke-width="3.6" fill="none"/>
<line x1="1126.17" y1="371.10" x2="1115.15" y2="380.82" stroke="#1d1d1d" stroke-width="3" stroke-linecap="round"/>
<text transform="translate(1130.10,387.30) scale(1,1.03)" font-size="13.2" font-weight="normal" text-anchor="start" fill="#111" stroke="#111" stroke-width="0.4">0.18</text>
<text transform="translate(1110.40,406.60) scale(1,1.11)" font-size="11.6" font-weight="bold" text-anchor="start" fill="#111">PsLFO1</text>
<path d="M1126.40 447.60A14.6 14.6 0 1 1 1141.00 433.00" stroke="#1d1d1d" stroke-width="3.6" fill="none"/>
<line x1="1119.26" y1="425.86" x2="1112.89" y2="419.49" stroke="#8f8f8f" stroke-width="7"/>
<line x1="1126.19" y1="432.79" x2="1115.79" y2="422.39" stroke="#1d1d1d" stroke-width="3" stroke-linecap="round"/>
<path d="M1114.40 412.60L1114.40 420.50L1106.40 420.50Z" fill="#1d1d1d"/>
<text transform="translate(1130.10,449.40) scale(1,1.03)" font-size="13.2" font-weight="normal" text-anchor="start" fill="#111" stroke="#111" stroke-width="0.4">0.00</text>
<text transform="translate(1110.40,468.50) scale(1,1.11)" font-size="11.6" font-weight="bold" text-anchor="start" fill="#111">PsLFO2</text>
<path d="M1126.40 509.90A14.6 14.6 0 1 1 1141.00 495.30" stroke="#1d1d1d" stroke-width="3.6" fill="none"/>
<line x1="1119.26" y1="488.16" x2="1112.89" y2="481.79" stroke="#8f8f8f" stroke-width="7"/>
<line x1="1126.19" y1="495.09" x2="1115.79" y2="484.69" stroke="#1d1d1d" stroke-width="3" stroke-linecap="round"/>
<path d="M1114.40 474.90L1114.40 482.80L1106.40 482.80Z" fill="#1d1d1d"/>
<text transform="translate(1130.10,511.70) scale(1,1.03)" font-size="13.2" font-weight="normal" text-anchor="start" fill="#111" stroke="#111" stroke-width="0.4">0.00</text>
<text transform="translate(1162.70,344.75) scale(1,1.11)" font-size="11.6" font-weight="bold" text-anchor="start" fill="#111">SZRnd</text>
<path d="M1178.70 385.50A14.6 14.6 0 1 1 1193.30 370.90" stroke="#1d1d1d" stroke-width="3.6" fill="none"/>
<line x1="1169.20" y1="374.33" x2="1160.73" y2="377.38" stroke="#8f8f8f" stroke-width="7"/>
<path d="M1178.70 385.50A14.6 14.6 0 0 1 1164.97 375.86" stroke="#2aa8f2" stroke-width="3.6" fill="none"/>
<line x1="1178.42" y1="371.00" x2="1164.59" y2="375.99" stroke="#1d1d1d" stroke-width="3" stroke-linecap="round"/>
<text transform="translate(1182.40,387.30) scale(1,1.03)" font-size="13.2" font-weight="normal" text-anchor="start" fill="#111" stroke="#111" stroke-width="0.4">33.0</text>
<text transform="translate(1162.70,406.60) scale(1,1.11)" font-size="11.6" font-weight="bold" text-anchor="start" fill="#111">SzLFO1</text>
<path d="M1178.70 447.60A14.6 14.6 0 1 1 1193.30 433.00" stroke="#1d1d1d" stroke-width="3.6" fill="none"/>
<line x1="1171.56" y1="425.86" x2="1165.19" y2="419.49" stroke="#8f8f8f" stroke-width="7"/>
<line x1="1178.49" y1="432.79" x2="1168.09" y2="422.39" stroke="#1d1d1d" stroke-width="3" stroke-linecap="round"/>
<path d="M1166.70 412.60L1166.70 420.50L1158.70 420.50Z" fill="#1d1d1d"/>
<text transform="translate(1182.40,449.40) scale(1,1.03)" font-size="13.2" font-weight="normal" text-anchor="start" fill="#111" stroke="#111" stroke-width="0.4">0.00</text>
<text transform="translate(1162.70,468.50) scale(1,1.11)" font-size="11.6" font-weight="bold" text-anchor="start" fill="#111">SzLFO2</text>
<path d="M1178.70 509.90A14.6 14.6 0 1 1 1193.30 495.30" stroke="#1d1d1d" stroke-width="3.6" fill="none"/>
<line x1="1171.56" y1="488.16" x2="1165.19" y2="481.79" stroke="#8f8f8f" stroke-width="7"/>
<line x1="1178.49" y1="495.09" x2="1168.09" y2="484.69" stroke="#1d1d1d" stroke-width="3" stroke-linecap="round"/>
<path d="M1166.70 474.90L1166.70 482.80L1158.70 482.80Z" fill="#1d1d1d"/>
<text transform="translate(1182.40,511.70) scale(1,1.03)" font-size="13.2" font-weight="normal" text-anchor="start" fill="#111" stroke="#111" stroke-width="0.4">0.00</text>
<text transform="translate(1215.30,344.75) scale(1,1.11)" font-size="11.6" font-weight="bold" text-anchor="start" fill="#111">VlRnd</text>
<path d="M1231.30 385.50A14.6 14.6 0 1 1 1245.90 370.90" stroke="#1d1d1d" stroke-width="3.6" fill="none"/>
<line x1="1231.30" y1="381.00" x2="1231.30" y2="390.00" stroke="#8f8f8f" stroke-width="7"/>
<line x1="1231.30" y1="371.20" x2="1231.30" y2="385.90" stroke="#1d1d1d" stroke-width="3" stroke-linecap="round"/>
<text transform="translate(1235.00,387.30) scale(1,1.03)" font-size="13.2" font-weight="normal" text-anchor="start" fill="#111" stroke="#111" stroke-width="0.4">0.00</text>
<text transform="translate(1215.30,406.60) scale(1,1.11)" font-size="11.6" font-weight="bold" text-anchor="start" fill="#111">VLLFO</text>
<path d="M1231.30 447.60A14.6 14.6 0 1 1 1245.90 433.00" stroke="#1d1d1d" stroke-width="3.6" fill="none"/>
<line x1="1224.16" y1="425.86" x2="1217.79" y2="419.49" stroke="#8f8f8f" stroke-width="7"/>
<line x1="1231.09" y1="432.79" x2="1220.69" y2="422.39" stroke="#1d1d1d" stroke-width="3" stroke-linecap="round"/>
<path d="M1219.30 412.60L1219.30 420.50L1211.30 420.50Z" fill="#1d1d1d"/>
<text transform="translate(1235.00,449.40) scale(1,1.03)" font-size="13.2" font-weight="normal" text-anchor="start" fill="#111" stroke="#111" stroke-width="0.4">0.00</text>
<text transform="translate(1215.30,468.50) scale(1,1.11)" font-size="11.6" font-weight="bold" text-anchor="start" fill="#111">VlLFO2</text>
<path d="M1231.30 509.90A14.6 14.6 0 1 1 1245.90 495.30" stroke="#1d1d1d" stroke-width="3.6" fill="none"/>
<line x1="1224.16" y1="488.16" x2="1217.79" y2="481.79" stroke="#8f8f8f" stroke-width="7"/>
<line x1="1231.09" y1="495.09" x2="1220.69" y2="484.69" stroke="#1d1d1d" stroke-width="3" stroke-linecap="round"/>
<path d="M1219.30 474.90L1219.30 482.80L1211.30 482.80Z" fill="#1d1d1d"/>
<text transform="translate(1235.00,511.70) scale(1,1.03)" font-size="13.2" font-weight="normal" text-anchor="start" fill="#111" stroke="#111" stroke-width="0.4">0.00</text>
<text transform="translate(1267.20,344.75) scale(1,1.11)" font-size="11.6" font-weight="bold" text-anchor="start" fill="#111">PnRnd</text>
<path d="M1283.20 385.50A14.6 14.6 0 1 1 1297.80 370.90" stroke="#1d1d1d" stroke-width="3.6" fill="none"/>
<line x1="1293.30" y1="370.90" x2="1302.30" y2="370.90" stroke="#8f8f8f" stroke-width="7"/>
<path d="M1283.20 385.50A14.6 14.6 0 1 1 1297.80 370.90" stroke="#f8f070" stroke-width="3.6" fill="none"/>
<line x1="1283.50" y1="370.90" x2="1298.20" y2="370.90" stroke="#1d1d1d" stroke-width="3" stroke-linecap="round"/>
<text transform="translate(1286.90,387.30) scale(1,1.03)" font-size="13.2" font-weight="normal" text-anchor="start" fill="#111" stroke="#111" stroke-width="0.4">1.00</text>
<text transform="translate(1267.20,406.60) scale(1,1.11)" font-size="11.6" font-weight="bold" text-anchor="start" fill="#111">PNLFO</text>
<path d="M1283.20 447.60A14.6 14.6 0 1 1 1297.80 433.00" stroke="#1d1d1d" stroke-width="3.6" fill="none"/>
<line x1="1276.06" y1="425.86" x2="1269.69" y2="419.49" stroke="#8f8f8f" stroke-width="7"/>
<line x1="1282.99" y1="432.79" x2="1272.59" y2="422.39" stroke="#1d1d1d" stroke-width="3" stroke-linecap="round"/>
<path d="M1271.20 412.60L1271.20 420.50L1263.20 420.50Z" fill="#1d1d1d"/>
<text transform="translate(1286.90,449.40) scale(1,1.03)" font-size="13.2" font-weight="normal" text-anchor="start" fill="#111" stroke="#111" stroke-width="0.4">0.00</text>
<text transform="translate(1267.20,468.50) scale(1,1.11)" font-size="11.6" font-weight="bold" text-anchor="start" fill="#111">PnLFO2</text>
<path d="M1283.20 509.90A14.6 14.6 0 1 1 1297.80 495.30" stroke="#1d1d1d" stroke-width="3.6" fill="none"/>
<line x1="1276.06" y1="488.16" x2="1269.69" y2="481.79" stroke="#8f8f8f" stroke-width="7"/>
<line x1="1282.99" y1="495.09" x2="1272.59" y2="484.69" stroke="#1d1d1d" stroke-width="3" stroke-linecap="round"/>
<path d="M1271.20 474.90L1271.20 482.80L1263.20 482.80Z" fill="#1d1d1d"/>
<text transform="translate(1286.90,511.70) scale(1,1.03)" font-size="13.2" font-weight="normal" text-anchor="start" fill="#111" stroke="#111" stroke-width="0.4">0.00</text>
<rect x="1107.00" y="518.00" width="209.00" height="6.00" fill="#f2cc3c"/>
<text transform="translate(1114.20,604.90) scale(1,1.11)" font-size="14.8" font-weight="bold" text-anchor="start" fill="#1a1a1a">LFO 1 bus</text>
<rect x="1246.80" y="589.30" width="66.40" height="18.60" fill="#dcdcdc" stroke="#464646" stroke-width="1.6"/>
<text transform="translate(1280.00,604.30) scale(1,1.0)" font-size="15.6" font-weight="normal" text-anchor="middle" fill="#000" stroke="#000" stroke-width="0.3">0</text>
<text transform="translate(1114.20,635.30) scale(1,1.11)" font-size="14.8" font-weight="bold" text-anchor="start" fill="#1a1a1a">LFO 2 bus</text>
<rect x="1246.80" y="618.70" width="66.40" height="18.50" fill="#dcdcdc" stroke="#464646" stroke-width="1.6"/>
<text transform="translate(1280.00,633.70) scale(1,1.0)" font-size="15.6" font-weight="normal" text-anchor="middle" fill="#000" stroke="#000" stroke-width="0.3">0</text>
<text transform="translate(1114.20,662.70) scale(1,1.11)" font-size="14.8" font-weight="bold" text-anchor="start" fill="#1a1a1a">Size MS</text>
<rect x="1246.80" y="646.20" width="66.40" height="19.30" fill="#dcdcdc" stroke="#464646" stroke-width="1.6"/>
<text transform="translate(1280.00,661.80) scale(1,1.0)" font-size="15.6" font-weight="normal" text-anchor="middle" fill="#000" stroke="#000" stroke-width="0.3">5.00 s</text>
<text transform="translate(1114.20,688.80) scale(1,1.11)" font-size="14.8" font-weight="bold" text-anchor="start" fill="#1a1a1a">Bind Size</text>
<rect x="1246.80" y="673.20" width="19.20" height="18.60" fill="#b4b4b4" stroke="#464646" stroke-width="1.6"/>
<text transform="translate(1114.20,717.40) scale(1,1.11)" font-size="14.8" font-weight="bold" text-anchor="start" fill="#1a1a1a">Revers</text>
<rect x="1246.80" y="702.40" width="19.20" height="18.20" fill="#ffb300" stroke="#464646" stroke-width="1.6"/>
<text transform="translate(1114.20,746.60) scale(1,1.11)" font-size="14.8" font-weight="bold" text-anchor="start" fill="#1a1a1a">Random Ratio</text>
<rect x="1246.80" y="731.00" width="66.40" height="19.30" fill="#dcdcdc" stroke="#464646" stroke-width="1.6"/>
<text transform="translate(1280.00,746.60) scale(1,1.0)" font-size="15.6" font-weight="normal" text-anchor="middle" fill="#000" stroke="#000" stroke-width="0.3">30.0 %</text>
<rect x="1107.00" y="762.50" width="209.00" height="7.00" fill="#f2cc3c"/>
<rect x="1331.05" y="92.10" width="47.40" height="19.70" fill="#dcdcdc" stroke="#464646" stroke-width="1.6"/>
<text transform="translate(1333.85,107.80) scale(1,1.11)" font-size="14" font-weight="normal" text-anchor="start" fill="#000" stroke="#000" stroke-width="0.15">Seq</text>
<path d="M1363.85 97.90L1374.65 97.90L1369.25 106.00Z" fill="#000"/>
<rect x="1385.35" y="92.10" width="31.70" height="19.70" fill="#9e9e9e" stroke="#464646" stroke-width="1.6"/>
<text transform="translate(1388.15,107.80) scale(1,1.11)" font-size="14" font-weight="normal" text-anchor="start" fill="#000" stroke="#000" stroke-width="0.15">A</text>
<path d="M1402.45 97.90L1413.25 97.90L1407.85 106.00Z" fill="#000"/>
<rect x="1424.45" y="92.10" width="28.30" height="19.70" fill="#9e9e9e" stroke="#464646" stroke-width="1.6"/>
<text transform="translate(1427.25,107.80) scale(1,1.11)" font-size="14" font-weight="normal" text-anchor="start" fill="#000" stroke="#000" stroke-width="0.15">1</text>
<path d="M1438.15 97.90L1448.95 97.90L1443.55 106.00Z" fill="#000"/>
<rect x="1460.45" y="92.10" width="46.30" height="19.70" fill="#9e9e9e" stroke="#464646" stroke-width="1.6"/>
<text transform="translate(1463.25,107.80) scale(1,1.11)" font-size="14" font-weight="normal" text-anchor="start" fill="#000" stroke="#000" stroke-width="0.15">Trig</text>
<path d="M1492.15 97.90L1502.95 97.90L1497.55 106.00Z" fill="#000"/>
<rect x="1331.05" y="118.80" width="32.30" height="19.10" fill="#dcdcdc" stroke="#464646" stroke-width="1.6"/>
<text transform="translate(1333.85,134.50) scale(1,1.11)" font-size="14" font-weight="normal" text-anchor="start" fill="#000" stroke="#000" stroke-width="0.15">A</text>
<path d="M1348.75 124.60L1359.55 124.60L1354.15 132.70Z" fill="#000"/>
<rect x="1372.05" y="118.80" width="29.10" height="19.10" fill="#dcdcdc" stroke="#464646" stroke-width="1.6"/>
<text transform="translate(1374.85,134.50) scale(1,1.11)" font-size="14" font-weight="normal" text-anchor="start" fill="#000" stroke="#000" stroke-width="0.15">1</text>
<path d="M1386.55 124.60L1397.35 124.60L1391.95 132.70Z" fill="#000"/>
<rect x="1409.65" y="118.80" width="18.80" height="19.10" fill="#b4b4b4" stroke="#464646" stroke-width="1.6"/>
<rect x="1436.35" y="118.80" width="70.40" height="19.10" fill="#9e9e9e" stroke="#464646" stroke-width="1.6"/>
<text transform="translate(1439.15,134.50) scale(1,1.11)" font-size="14" font-weight="normal" text-anchor="start" fill="#000" stroke="#000" stroke-width="0.15">None</text>
<path d="M1492.15 124.60L1502.95 124.60L1497.55 132.70Z" fill="#000"/>
<text transform="translate(1332.40,154.50) scale(1,1.11)" font-size="11.6" font-weight="bold" text-anchor="start" fill="#111">Position</text>
<path d="M1348.40 195.90A14.6 14.6 0 1 1 1363.00 181.30" stroke="#1d1d1d" stroke-width="3.6" fill="none"/>
<line x1="1342.99" y1="189.83" x2="1338.17" y2="197.43" stroke="#8f8f8f" stroke-width="7"/>
<path d="M1348.40 195.90A14.6 14.6 0 0 1 1340.58 193.63" stroke="#f43a3a" stroke-width="3.6" fill="none"/>
<line x1="1348.24" y1="181.55" x2="1340.36" y2="193.96" stroke="#1d1d1d" stroke-width="3" stroke-linecap="round"/>
<text transform="translate(1352.10,197.70) scale(1,1.03)" font-size="13.2" font-weight="normal" text-anchor="start" fill="#111" stroke="#111" stroke-width="0.4">0.12</text>
<text transform="translate(1384.70,154.50) scale(1,1.11)" font-size="11.6" font-weight="bold" text-anchor="start" fill="#111">MPos</text>
<path d="M1400.70 195.90A14.6 14.6 0 1 1 1415.30 181.30" stroke="#1d1d1d" stroke-width="3.6" fill="none"/>
<line x1="1394.64" y1="173.22" x2="1389.23" y2="166.03" stroke="#8f8f8f" stroke-width="7"/>
<path d="M1400.70 195.90A14.6 14.6 0 0 1 1391.93 169.62" stroke="#e8701e" stroke-width="3.6" fill="none"/>
<line x1="1400.52" y1="181.06" x2="1391.69" y2="169.30" stroke="#1d1d1d" stroke-width="3" stroke-linecap="round"/>
<text transform="translate(1404.40,197.70) scale(1,1.03)" font-size="13.2" font-weight="normal" text-anchor="start" fill="#111" stroke="#111" stroke-width="0.4">0.53</text>
<text transform="translate(1437.30,154.50) scale(1,1.11)" font-size="11.6" font-weight="bold" text-anchor="start" fill="#111">Size</text>
<path d="M1453.30 195.90A14.6 14.6 0 1 1 1467.90 181.30" stroke="#1d1d1d" stroke-width="3.6" fill="none"/>
<line x1="1446.86" y1="173.52" x2="1441.13" y2="166.58" stroke="#8f8f8f" stroke-width="7"/>
<path d="M1453.30 195.90A14.6 14.6 0 0 1 1443.99 170.05" stroke="#2aa8f2" stroke-width="3.6" fill="none"/>
<line x1="1453.11" y1="181.07" x2="1443.74" y2="169.74" stroke="#1d1d1d" stroke-width="3" stroke-linecap="round"/>
<text transform="translate(1457.00,197.70) scale(1,1.03)" font-size="13.2" font-weight="normal" text-anchor="start" fill="#111" stroke="#111" stroke-width="0.4">0.52</text>
<text transform="translate(1489.20,154.50) scale(1,1.11)" font-size="11.6" font-weight="bold" text-anchor="start" fill="#111">MSize</text>
<path d="M1505.20 195.90A14.6 14.6 0 1 1 1519.80 181.30" stroke="#1d1d1d" stroke-width="3.6" fill="none"/>
<line x1="1495.42" y1="183.81" x2="1486.70" y2="186.05" stroke="#8f8f8f" stroke-width="7"/>
<path d="M1505.20 195.90A14.6 14.6 0 0 1 1491.06 184.93" stroke="#2a82cc" stroke-width="3.6" fill="none"/>
<line x1="1504.91" y1="181.37" x2="1490.67" y2="185.03" stroke="#1d1d1d" stroke-width="3" stroke-linecap="round"/>
<text transform="translate(1508.90,197.70) scale(1,1.03)" font-size="13.2" font-weight="normal" text-anchor="start" fill="#111" stroke="#111" stroke-width="0.4">0.28</text>
<text transform="translate(1332.40,217.00) scale(1,1.11)" font-size="11.6" font-weight="bold" text-anchor="start" fill="#111">Volume</text>
<path d="M1348.40 258.10A14.6 14.6 0 1 1 1363.00 243.50" stroke="#1d1d1d" stroke-width="3.6" fill="none"/>
<line x1="1352.27" y1="234.17" x2="1355.71" y2="225.85" stroke="#8f8f8f" stroke-width="7"/>
<path d="M1348.40 258.10A14.6 14.6 0 1 1 1353.99 230.01" stroke="#ffffff" stroke-width="3.6" fill="none"/>
<line x1="1348.51" y1="243.22" x2="1354.14" y2="229.64" stroke="#1d1d1d" stroke-width="3" stroke-linecap="round"/>
<text transform="translate(1352.10,259.90) scale(1,1.03)" font-size="13.2" font-weight="normal" text-anchor="start" fill="#111" stroke="#111" stroke-width="0.4">0.75</text>
<text transform="translate(1384.70,217.00) scale(1,1.11)" font-size="11.6" font-weight="bold" text-anchor="start" fill="#111">Pan</text>
<path d="M1400.70 258.10A14.6 14.6 0 1 1 1415.30 243.50" stroke="#1d1d1d" stroke-width="3.6" fill="none"/>
<line x1="1403.21" y1="233.72" x2="1405.45" y2="225.00" stroke="#8f8f8f" stroke-width="7"/>
<path d="M1390.38 233.18A14.6 14.6 0 0 1 1404.33 229.36" stroke="#f5e46a" stroke-width="3.6" fill="none"/>
<line x1="1400.77" y1="243.21" x2="1404.43" y2="228.97" stroke="#1d1d1d" stroke-width="3" stroke-linecap="round"/>
<path d="M1388.70 223.10L1388.70 231.00L1380.70 231.00Z" fill="#f5e46a"/>
<text transform="translate(1404.40,259.90) scale(1,1.03)" font-size="13.2" font-weight="normal" text-anchor="start" fill="#111" stroke="#111" stroke-width="0.4">0.44</text>
<text transform="translate(1437.30,217.00) scale(1,1.11)" font-size="11.6" font-weight="bold" text-anchor="start" fill="#111">Tune</text>
<path d="M1453.30 258.10A14.6 14.6 0 1 1 1467.90 243.50" stroke="#1d1d1d" stroke-width="3.6" fill="none"/>
<line x1="1443.63" y1="240.57" x2="1435.02" y2="237.96" stroke="#8f8f8f" stroke-width="7"/>
<path d="M1439.33 239.26A14.6 14.6 0 0 1 1442.98 233.18" stroke="#3cc22c" stroke-width="3.6" fill="none"/>
<line x1="1453.01" y1="243.41" x2="1438.95" y2="239.15" stroke="#1d1d1d" stroke-width="3" stroke-linecap="round"/>
<path d="M1441.30 223.10L1441.30 231.00L1433.30 231.00Z" fill="#3cc22c"/>
<text transform="translate(1457.00,259.90) scale(1,1.03)" font-size="13.2" font-weight="normal" text-anchor="start" fill="#111" stroke="#111" stroke-width="0.4">-10</text>
<text transform="translate(1489.20,217.00) scale(1,1.11)" font-size="11.6" font-weight="bold" text-anchor="start" fill="#111">Fine</text>
<path d="M1505.20 258.10A14.6 14.6 0 1 1 1519.80 243.50" stroke="#1d1d1d" stroke-width="3.6" fill="none"/>
<line x1="1498.06" y1="236.36" x2="1491.69" y2="229.99" stroke="#8f8f8f" stroke-width="7"/>
<line x1="1504.99" y1="243.29" x2="1494.59" y2="232.89" stroke="#1d1d1d" stroke-width="3" stroke-linecap="round"/>
<path d="M1493.20 223.10L1493.20 231.00L1485.20 231.00Z" fill="#1d1d1d"/>
<text transform="translate(1508.90,259.90) scale(1,1.03)" font-size="13.2" font-weight="normal" text-anchor="start" fill="#111" stroke="#111" stroke-width="0.4">0.00</text>
<rect x="1329.00" y="273.00" width="209.00" height="6.00" fill="#6ebf4c"/>
<text transform="translate(1332.40,344.75) scale(1,1.11)" font-size="11.6" font-weight="bold" text-anchor="start" fill="#111">PSRnd</text>
<path d="M1348.40 385.50A14.6 14.6 0 1 1 1363.00 370.90" stroke="#1d1d1d" stroke-width="3.6" fill="none"/>
<line x1="1340.23" y1="376.84" x2="1332.95" y2="382.13" stroke="#8f8f8f" stroke-width="7"/>
<path d="M1348.40 385.50A14.6 14.6 0 0 1 1336.59 379.48" stroke="#f43a3a" stroke-width="3.6" fill="none"/>
<line x1="1348.16" y1="371.08" x2="1336.26" y2="379.72" stroke="#1d1d1d" stroke-width="3" stroke-linecap="round"/>
<text transform="translate(1352.10,387.30) scale(1,1.03)" font-size="13.2" font-weight="normal" text-anchor="start" fill="#111" stroke="#111" stroke-width="0.4">0.20</text>
<text transform="translate(1332.40,406.60) scale(1,1.11)" font-size="11.6" font-weight="bold" text-anchor="start" fill="#111">PsLFO1</text>
<path d="M1348.40 447.60A14.6 14.6 0 1 1 1363.00 433.00" stroke="#1d1d1d" stroke-width="3.6" fill="none"/>
<line x1="1341.26" y1="425.86" x2="1334.89" y2="419.49" stroke="#8f8f8f" stroke-width="7"/>
<line x1="1348.19" y1="432.79" x2="1337.79" y2="422.39" stroke="#1d1d1d" stroke-width="3" stroke-linecap="round"/>
<path d="M1336.40 412.60L1336.40 420.50L1328.40 420.50Z" fill="#1d1d1d"/>
<text transform="translate(1352.10,449.40) scale(1,1.03)" font-size="13.2" font-weight="normal" text-anchor="start" fill="#111" stroke="#111" stroke-width="0.4">0.00</text>
<text transform="translate(1332.40,468.50) scale(1,1.11)" font-size="11.6" font-weight="bold" text-anchor="start" fill="#111">PsLFO2</text>
<path d="M1348.40 509.90A14.6 14.6 0 1 1 1363.00 495.30" stroke="#1d1d1d" stroke-width="3.6" fill="none"/>
<line x1="1341.26" y1="488.16" x2="1334.89" y2="481.79" stroke="#8f8f8f" stroke-width="7"/>
<line x1="1348.19" y1="495.09" x2="1337.79" y2="484.69" stroke="#1d1d1d" stroke-width="3" stroke-linecap="round"/>
<path d="M1336.40 474.90L1336.40 482.80L1328.40 482.80Z" fill="#1d1d1d"/>
<text transform="translate(1352.10,511.70) scale(1,1.03)" font-size="13.2" font-weight="normal" text-anchor="start" fill="#111" stroke="#111" stroke-width="0.4">0.00</text>
<text transform="translate(1384.70,344.75) scale(1,1.11)" font-size="11.6" font-weight="bold" text-anchor="start" fill="#111">SZRnd</text>
<path d="M1400.70 385.50A14.6 14.6 0 1 1 1415.30 370.90" stroke="#1d1d1d" stroke-width="3.6" fill="none"/>
<line x1="1392.62" y1="376.96" x2="1385.42" y2="382.35" stroke="#8f8f8f" stroke-width="7"/>
<path d="M1400.70 385.50A14.6 14.6 0 0 1 1389.02 379.66" stroke="#2aa8f2" stroke-width="3.6" fill="none"/>
<line x1="1400.46" y1="371.08" x2="1388.70" y2="379.90" stroke="#1d1d1d" stroke-width="3" stroke-linecap="round"/>
<text transform="translate(1404.40,387.30) scale(1,1.03)" font-size="13.2" font-weight="normal" text-anchor="start" fill="#111" stroke="#111" stroke-width="0.4">25.0</text>
<text transform="translate(1384.70,406.60) scale(1,1.11)" font-size="11.6" font-weight="bold" text-anchor="start" fill="#111">SzLFO1</text>
<path d="M1400.70 447.60A14.6 14.6 0 1 1 1415.30 433.00" stroke="#1d1d1d" stroke-width="3.6" fill="none"/>
<line x1="1390.62" y1="432.45" x2="1381.63" y2="431.95" stroke="#8f8f8f" stroke-width="7"/>
<path d="M1386.12 432.20A14.6 14.6 0 0 1 1390.38 422.68" stroke="#2aa8f2" stroke-width="3.6" fill="none"/>
<line x1="1400.40" y1="432.98" x2="1385.72" y2="432.18" stroke="#1d1d1d" stroke-width="3" stroke-linecap="round"/>
<path d="M1388.70 412.60L1388.70 420.50L1380.70 420.50Z" fill="#2aa8f2"/>
<text transform="translate(1404.40,449.40) scale(1,1.03)" font-size="13.2" font-weight="normal" text-anchor="start" fill="#111" stroke="#111" stroke-width="0.4">-0.31</text>
<text transform="translate(1384.70,468.50) scale(1,1.11)" font-size="11.6" font-weight="bold" text-anchor="start" fill="#111">SzLFO2</text>
<path d="M1400.70 509.90A14.6 14.6 0 1 1 1415.30 495.30" stroke="#1d1d1d" stroke-width="3.6" fill="none"/>
<line x1="1393.56" y1="488.16" x2="1387.19" y2="481.79" stroke="#8f8f8f" stroke-width="7"/>
<line x1="1400.49" y1="495.09" x2="1390.09" y2="484.69" stroke="#1d1d1d" stroke-width="3" stroke-linecap="round"/>
<path d="M1388.70 474.90L1388.70 482.80L1380.70 482.80Z" fill="#1d1d1d"/>
<text transform="translate(1404.40,511.70) scale(1,1.03)" font-size="13.2" font-weight="normal" text-anchor="start" fill="#111" stroke="#111" stroke-width="0.4">0.00</text>
<text transform="translate(1437.30,344.75) scale(1,1.11)" font-size="11.6" font-weight="bold" text-anchor="start" fill="#111">VlRnd</text>
<path d="M1453.30 385.50A14.6 14.6 0 1 1 1467.90 370.90" stroke="#1d1d1d" stroke-width="3.6" fill="none"/>
<line x1="1453.30" y1="381.00" x2="1453.30" y2="390.00" stroke="#8f8f8f" stroke-width="7"/>
<line x1="1453.30" y1="371.20" x2="1453.30" y2="385.90" stroke="#1d1d1d" stroke-width="3" stroke-linecap="round"/>
<text transform="translate(1457.00,387.30) scale(1,1.03)" font-size="13.2" font-weight="normal" text-anchor="start" fill="#111" stroke="#111" stroke-width="0.4">0.00</text>
<text transform="translate(1437.30,406.60) scale(1,1.11)" font-size="11.6" font-weight="bold" text-anchor="start" fill="#111">VLLFO</text>
<path d="M1453.30 447.60A14.6 14.6 0 1 1 1467.90 433.00" stroke="#1d1d1d" stroke-width="3.6" fill="none"/>
<line x1="1446.16" y1="425.86" x2="1439.79" y2="419.49" stroke="#8f8f8f" stroke-width="7"/>
<line x1="1453.09" y1="432.79" x2="1442.69" y2="422.39" stroke="#1d1d1d" stroke-width="3" stroke-linecap="round"/>
<path d="M1441.30 412.60L1441.30 420.50L1433.30 420.50Z" fill="#1d1d1d"/>
<text transform="translate(1457.00,449.40) scale(1,1.03)" font-size="13.2" font-weight="normal" text-anchor="start" fill="#111" stroke="#111" stroke-width="0.4">0.00</text>
<text transform="translate(1437.30,468.50) scale(1,1.11)" font-size="11.6" font-weight="bold" text-anchor="start" fill="#111">VlLFO2</text>
<path d="M1453.30 509.90A14.6 14.6 0 1 1 1467.90 495.30" stroke="#1d1d1d" stroke-width="3.6" fill="none"/>
<line x1="1446.16" y1="488.16" x2="1439.79" y2="481.79" stroke="#8f8f8f" stroke-width="7"/>
<line x1="1453.09" y1="495.09" x2="1442.69" y2="484.69" stroke="#1d1d1d" stroke-width="3" stroke-linecap="round"/>
<path d="M1441.30 474.90L1441.30 482.80L1433.30 482.80Z" fill="#1d1d1d"/>
<text transform="translate(1457.00,511.70) scale(1,1.03)" font-size="13.2" font-weight="normal" text-anchor="start" fill="#111" stroke="#111" stroke-width="0.4">0.00</text>
<text transform="translate(1489.20,344.75) scale(1,1.11)" font-size="11.6" font-weight="bold" text-anchor="start" fill="#111">PnRnd</text>
<path d="M1505.20 385.50A14.6 14.6 0 1 1 1519.80 370.90" stroke="#1d1d1d" stroke-width="3.6" fill="none"/>
<line x1="1496.85" y1="365.22" x2="1489.40" y2="360.16" stroke="#8f8f8f" stroke-width="7"/>
<path d="M1505.20 385.50A14.6 14.6 0 0 1 1493.12 362.69" stroke="#f8f070" stroke-width="3.6" fill="none"/>
<line x1="1504.95" y1="370.73" x2="1492.79" y2="362.47" stroke="#1d1d1d" stroke-width="3" stroke-linecap="round"/>
<text transform="translate(1508.90,387.30) scale(1,1.03)" font-size="13.2" font-weight="normal" text-anchor="start" fill="#111" stroke="#111" stroke-width="0.4">0.46</text>
<text transform="translate(1489.20,406.60) scale(1,1.11)" font-size="11.6" font-weight="bold" text-anchor="start" fill="#111">PNLFO</text>
<path d="M1505.20 447.60A14.6 14.6 0 1 1 1519.80 433.00" stroke="#1d1d1d" stroke-width="3.6" fill="none"/>
<line x1="1498.06" y1="425.86" x2="1491.69" y2="419.49" stroke="#8f8f8f" stroke-width="7"/>
<line x1="1504.99" y1="432.79" x2="1494.59" y2="422.39" stroke="#1d1d1d" stroke-width="3" stroke-linecap="round"/>
<path d="M1493.20 412.60L1493.20 420.50L1485.20 420.50Z" fill="#1d1d1d"/>
<text transform="translate(1508.90,449.40) scale(1,1.03)" font-size="13.2" font-weight="normal" text-anchor="start" fill="#111" stroke="#111" stroke-width="0.4">0.00</text>
<text transform="translate(1489.20,468.50) scale(1,1.11)" font-size="11.6" font-weight="bold" text-anchor="start" fill="#111">PnLFO2</text>
<path d="M1505.20 509.90A14.6 14.6 0 1 1 1519.80 495.30" stroke="#1d1d1d" stroke-width="3.6" fill="none"/>
<line x1="1498.06" y1="488.16" x2="1491.69" y2="481.79" stroke="#8f8f8f" stroke-width="7"/>
<line x1="1504.99" y1="495.09" x2="1494.59" y2="484.69" stroke="#1d1d1d" stroke-width="3" stroke-linecap="round"/>
<path d="M1493.20 474.90L1493.20 482.80L1485.20 482.80Z" fill="#1d1d1d"/>
<text transform="translate(1508.90,511.70) scale(1,1.03)" font-size="13.2" font-weight="normal" text-anchor="start" fill="#111" stroke="#111" stroke-width="0.4">0.00</text>
<rect x="1329.00" y="518.00" width="209.00" height="6.00" fill="#6ebf4c"/>
<text transform="translate(1336.20,604.90) scale(1,1.11)" font-size="14.8" font-weight="bold" text-anchor="start" fill="#1a1a1a">LFO 1 bus</text>
<rect x="1468.80" y="589.30" width="66.40" height="18.60" fill="#dcdcdc" stroke="#464646" stroke-width="1.6"/>
<text transform="translate(1502.00,604.30) scale(1,1.0)" font-size="15.6" font-weight="normal" text-anchor="middle" fill="#000" stroke="#000" stroke-width="0.3">0</text>
<text transform="translate(1336.20,635.30) scale(1,1.11)" font-size="14.8" font-weight="bold" text-anchor="start" fill="#1a1a1a">LFO 2 bus</text>
<rect x="1468.80" y="618.70" width="66.40" height="18.50" fill="#dcdcdc" stroke="#464646" stroke-width="1.6"/>
<text transform="translate(1502.00,633.70) scale(1,1.0)" font-size="15.6" font-weight="normal" text-anchor="middle" fill="#000" stroke="#000" stroke-width="0.3">0</text>
<text transform="translate(1336.20,662.70) scale(1,1.11)" font-size="14.8" font-weight="bold" text-anchor="start" fill="#1a1a1a">Size MS</text>
<rect x="1468.80" y="646.20" width="66.40" height="19.30" fill="#dcdcdc" stroke="#464646" stroke-width="1.6"/>
<text transform="translate(1502.00,661.80) scale(1,1.0)" font-size="15.6" font-weight="normal" text-anchor="middle" fill="#000" stroke="#000" stroke-width="0.3">5.00 s</text>
<text transform="translate(1336.20,688.80) scale(1,1.11)" font-size="14.8" font-weight="bold" text-anchor="start" fill="#1a1a1a">Bind Size</text>
<rect x="1468.80" y="673.20" width="19.20" height="18.60" fill="#b4b4b4" stroke="#464646" stroke-width="1.6"/>
<text transform="translate(1336.20,717.40) scale(1,1.11)" font-size="14.8" font-weight="bold" text-anchor="start" fill="#1a1a1a">Revers</text>
<rect x="1468.80" y="702.40" width="19.20" height="18.20" fill="#b4b4b4" stroke="#464646" stroke-width="1.6"/>
<text transform="translate(1336.20,746.60) scale(1,1.11)" font-size="14.8" font-weight="bold" text-anchor="start" fill="#1a1a1a">Random Ratio</text>
<rect x="1468.80" y="731.00" width="66.40" height="19.30" fill="#dcdcdc" stroke="#464646" stroke-width="1.6"/>
<text transform="translate(1502.00,746.60) scale(1,1.0)" font-size="15.6" font-weight="normal" text-anchor="middle" fill="#000" stroke="#000" stroke-width="0.3">30.0 %</text>
<rect x="1329.00" y="762.50" width="209.00" height="7.00" fill="#6ebf4c"/>
<rect x="1553.30" y="92.10" width="47.40" height="19.70" fill="#dcdcdc" stroke="#464646" stroke-width="1.6"/>
<text transform="translate(1556.10,107.80) scale(1,1.11)" font-size="14" font-weight="normal" text-anchor="start" fill="#000" stroke="#000" stroke-width="0.15">Seq</text>
<path d="M1586.10 97.90L1596.90 97.90L1591.50 106.00Z" fill="#000"/>
<rect x="1607.60" y="92.10" width="31.70" height="19.70" fill="#9e9e9e" stroke="#464646" stroke-width="1.6"/>
<text transform="translate(1610.40,107.80) scale(1,1.11)" font-size="14" font-weight="normal" text-anchor="start" fill="#000" stroke="#000" stroke-width="0.15">A</text>
<path d="M1624.70 97.90L1635.50 97.90L1630.10 106.00Z" fill="#000"/>
<rect x="1646.70" y="92.10" width="28.30" height="19.70" fill="#9e9e9e" stroke="#464646" stroke-width="1.6"/>
<text transform="translate(1649.50,107.80) scale(1,1.11)" font-size="14" font-weight="normal" text-anchor="start" fill="#000" stroke="#000" stroke-width="0.15">1</text>
<path d="M1660.40 97.90L1671.20 97.90L1665.80 106.00Z" fill="#000"/>
<rect x="1682.70" y="92.10" width="46.30" height="19.70" fill="#9e9e9e" stroke="#464646" stroke-width="1.6"/>
<text transform="translate(1685.50,107.80) scale(1,1.11)" font-size="14" font-weight="normal" text-anchor="start" fill="#000" stroke="#000" stroke-width="0.15">Trig</text>
<path d="M1714.40 97.90L1725.20 97.90L1719.80 106.00Z" fill="#000"/>
<rect x="1553.30" y="118.80" width="32.30" height="19.10" fill="#dcdcdc" stroke="#464646" stroke-width="1.6"/>
<text transform="translate(1556.10,134.50) scale(1,1.11)" font-size="14" font-weight="normal" text-anchor="start" fill="#000" stroke="#000" stroke-width="0.15">A</text>
<path d="M1571.00 124.60L1581.80 124.60L1576.40 132.70Z" fill="#000"/>
<rect x="1594.30" y="118.80" width="29.10" height="19.10" fill="#dcdcdc" stroke="#464646" stroke-width="1.6"/>
<text transform="translate(1597.10,134.50) scale(1,1.11)" font-size="14" font-weight="normal" text-anchor="start" fill="#000" stroke="#000" stroke-width="0.15">1</text>
<path d="M1608.80 124.60L1619.60 124.60L1614.20 132.70Z" fill="#000"/>
<rect x="1631.90" y="118.80" width="18.80" height="19.10" fill="#b4b4b4" stroke="#464646" stroke-width="1.6"/>
<rect x="1658.60" y="118.80" width="70.40" height="19.10" fill="#9e9e9e" stroke="#464646" stroke-width="1.6"/>
<text transform="translate(1661.40,134.50) scale(1,1.11)" font-size="14" font-weight="normal" text-anchor="start" fill="#000" stroke="#000" stroke-width="0.15">None</text>
<path d="M1714.40 124.60L1725.20 124.60L1719.80 132.70Z" fill="#000"/>
<text transform="translate(1554.40,154.50) scale(1,1.11)" font-size="11.6" font-weight="bold" text-anchor="start" fill="#111">Position</text>
<path d="M1570.40 195.90A14.6 14.6 0 1 1 1585.00 181.30" stroke="#1d1d1d" stroke-width="3.6" fill="none"/>
<line x1="1560.30" y1="180.98" x2="1551.31" y2="180.70" stroke="#8f8f8f" stroke-width="7"/>
<path d="M1570.40 195.90A14.6 14.6 0 0 1 1555.81 180.84" stroke="#f43a3a" stroke-width="3.6" fill="none"/>
<line x1="1570.10" y1="181.29" x2="1555.41" y2="180.83" stroke="#1d1d1d" stroke-width="3" stroke-linecap="round"/>
<text transform="translate(1574.10,197.70) scale(1,1.03)" font-size="13.2" font-weight="normal" text-anchor="start" fill="#111" stroke="#111" stroke-width="0.4">0.34</text>
<text transform="translate(1606.70,154.50) scale(1,1.11)" font-size="11.6" font-weight="bold" text-anchor="start" fill="#111">MPos</text>
<path d="M1622.70 195.90A14.6 14.6 0 1 1 1637.30 181.30" stroke="#1d1d1d" stroke-width="3.6" fill="none"/>
<line x1="1612.66" y1="182.41" x2="1603.72" y2="183.40" stroke="#8f8f8f" stroke-width="7"/>
<path d="M1622.70 195.90A14.6 14.6 0 0 1 1608.19 182.90" stroke="#e8701e" stroke-width="3.6" fill="none"/>
<line x1="1622.40" y1="181.33" x2="1607.79" y2="182.95" stroke="#1d1d1d" stroke-width="3" stroke-linecap="round"/>
<text transform="translate(1626.40,197.70) scale(1,1.03)" font-size="13.2" font-weight="normal" text-anchor="start" fill="#111" stroke="#111" stroke-width="0.4">0.31</text>
<text transform="translate(1659.30,154.50) scale(1,1.11)" font-size="11.6" font-weight="bold" text-anchor="start" fill="#111">Size</text>
<path d="M1675.30 195.90A14.6 14.6 0 1 1 1689.90 181.30" stroke="#1d1d1d" stroke-width="3.6" fill="none"/>
<line x1="1675.30" y1="191.40" x2="1675.30" y2="200.40" stroke="#8f8f8f" stroke-width="7"/>
<line x1="1675.30" y1="181.60" x2="1675.30" y2="196.30" stroke="#1d1d1d" stroke-width="3" stroke-linecap="round"/>
<text transform="translate(1679.00,197.70) scale(1,1.03)" font-size="13.2" font-weight="normal" text-anchor="start" fill="#111" stroke="#111" stroke-width="0.4">0.00</text>
<text transform="translate(1711.20,154.50) scale(1,1.11)" font-size="11.6" font-weight="bold" text-anchor="start" fill="#111">MSize</text>
<path d="M1727.20 195.90A14.6 14.6 0 1 1 1741.80 181.30" stroke="#1d1d1d" stroke-width="3.6" fill="none"/>
<line x1="1727.20" y1="191.40" x2="1727.20" y2="200.40" stroke="#8f8f8f" stroke-width="7"/>
<line x1="1727.20" y1="181.60" x2="1727.20" y2="196.30" stroke="#1d1d1d" stroke-width="3" stroke-linecap="round"/>
<text transform="translate(1730.90,197.70) scale(1,1.03)" font-size="13.2" font-weight="normal" text-anchor="start" fill="#111" stroke="#111" stroke-width="0.4">0.00</text>
<text transform="translate(1554.40,217.00) scale(1,1.11)" font-size="11.6" font-weight="bold" text-anchor="start" fill="#111">Volume</text>
<path d="M1570.40 258.10A14.6 14.6 0 1 1 1585.00 243.50" stroke="#1d1d1d" stroke-width="3.6" fill="none"/>
<line x1="1580.50" y1="243.50" x2="1589.50" y2="243.50" stroke="#8f8f8f" stroke-width="7"/>
<path d="M1570.40 258.10A14.6 14.6 0 1 1 1585.00 243.50" stroke="#ffffff" stroke-width="3.6" fill="none"/>
<line x1="1570.70" y1="243.50" x2="1585.40" y2="243.50" stroke="#1d1d1d" stroke-width="3" stroke-linecap="round"/>
<text transform="translate(1574.10,259.90) scale(1,1.03)" font-size="13.2" font-weight="normal" text-anchor="start" fill="#111" stroke="#111" stroke-width="0.4">1.00</text>
<text transform="translate(1606.70,217.00) scale(1,1.11)" font-size="11.6" font-weight="bold" text-anchor="start" fill="#111">Pan</text>
<path d="M1622.70 258.10A14.6 14.6 0 1 1 1637.30 243.50" stroke="#1d1d1d" stroke-width="3.6" fill="none"/>
<line x1="1615.56" y1="236.36" x2="1609.19" y2="229.99" stroke="#8f8f8f" stroke-width="7"/>
<line x1="1622.49" y1="243.29" x2="1612.09" y2="232.89" stroke="#1d1d1d" stroke-width="3" stroke-linecap="round"/>
<path d="M1610.70 223.10L1610.70 231.00L1602.70 231.00Z" fill="#1d1d1d"/>
<text transform="translate(1626.40,259.90) scale(1,1.03)" font-size="13.2" font-weight="normal" text-anchor="start" fill="#111" stroke="#111" stroke-width="0.4">0.00</text>
<text transform="translate(1659.30,217.00) scale(1,1.11)" font-size="11.6" font-weight="bold" text-anchor="start" fill="#111">Tune</text>
<path d="M1675.30 258.10A14.6 14.6 0 1 1 1689.90 243.50" stroke="#1d1d1d" stroke-width="3.6" fill="none"/>
<line x1="1668.16" y1="236.36" x2="1661.79" y2="229.99" stroke="#8f8f8f" stroke-width="7"/>
<line x1="1675.09" y1="243.29" x2="1664.69" y2="232.89" stroke="#1d1d1d" stroke-width="3" stroke-linecap="round"/>
<path d="M1663.30 223.10L1663.30 231.00L1655.30 231.00Z" fill="#1d1d1d"/>
<text transform="translate(1679.00,259.90) scale(1,1.03)" font-size="13.2" font-weight="normal" text-anchor="start" fill="#111" stroke="#111" stroke-width="0.4">0</text>
<text transform="translate(1711.20,217.00) scale(1,1.11)" font-size="11.6" font-weight="bold" text-anchor="start" fill="#111">Fine</text>
<path d="M1727.20 258.10A14.6 14.6 0 1 1 1741.80 243.50" stroke="#1d1d1d" stroke-width="3.6" fill="none"/>
<line x1="1720.06" y1="236.36" x2="1713.69" y2="229.99" stroke="#8f8f8f" stroke-width="7"/>
<line x1="1726.99" y1="243.29" x2="1716.59" y2="232.89" stroke="#1d1d1d" stroke-width="3" stroke-linecap="round"/>
<path d="M1715.20 223.10L1715.20 231.00L1707.20 231.00Z" fill="#1d1d1d"/>
<text transform="translate(1730.90,259.90) scale(1,1.03)" font-size="13.2" font-weight="normal" text-anchor="start" fill="#111" stroke="#111" stroke-width="0.4">0.00</text>
<rect x="1551.00" y="273.00" width="209.00" height="6.00" fill="#50e0f0"/>
<text transform="translate(1554.40,344.75) scale(1,1.11)" font-size="11.6" font-weight="bold" text-anchor="start" fill="#111">PSRnd</text>
<path d="M1570.40 385.50A14.6 14.6 0 1 1 1585.00 370.90" stroke="#1d1d1d" stroke-width="3.6" fill="none"/>
<line x1="1560.33" y1="370.11" x2="1551.36" y2="369.40" stroke="#8f8f8f" stroke-width="7"/>
<path d="M1570.40 385.50A14.6 14.6 0 0 1 1555.85 369.75" stroke="#f43a3a" stroke-width="3.6" fill="none"/>
<line x1="1570.10" y1="370.88" x2="1555.45" y2="369.72" stroke="#1d1d1d" stroke-width="3" stroke-linecap="round"/>
<text transform="translate(1574.10,387.30) scale(1,1.03)" font-size="13.2" font-weight="normal" text-anchor="start" fill="#111" stroke="#111" stroke-width="0.4">0.35</text>
<text transform="translate(1554.40,406.60) scale(1,1.11)" font-size="11.6" font-weight="bold" text-anchor="start" fill="#111">PsLFO1</text>
<path d="M1570.40 447.60A14.6 14.6 0 1 1 1585.00 433.00" stroke="#1d1d1d" stroke-width="3.6" fill="none"/>
<line x1="1563.26" y1="425.86" x2="1556.89" y2="419.49" stroke="#8f8f8f" stroke-width="7"/>
<line x1="1570.19" y1="432.79" x2="1559.79" y2="422.39" stroke="#1d1d1d" stroke-width="3" stroke-linecap="round"/>
<path d="M1558.40 412.60L1558.40 420.50L1550.40 420.50Z" fill="#1d1d1d"/>
<text transform="translate(1574.10,449.40) scale(1,1.03)" font-size="13.2" font-weight="normal" text-anchor="start" fill="#111" stroke="#111" stroke-width="0.4">0.00</text>
<text transform="translate(1554.40,468.50) scale(1,1.11)" font-size="11.6" font-weight="bold" text-anchor="start" fill="#111">PsLFO2</text>
<path d="M1570.40 509.90A14.6 14.6 0 1 1 1585.00 495.30" stroke="#1d1d1d" stroke-width="3.6" fill="none"/>
<line x1="1563.26" y1="488.16" x2="1556.89" y2="481.79" stroke="#8f8f8f" stroke-width="7"/>
<line x1="1570.19" y1="495.09" x2="1559.79" y2="484.69" stroke="#1d1d1d" stroke-width="3" stroke-linecap="round"/>
<path d="M1558.40 474.90L1558.40 482.80L1550.40 482.80Z" fill="#1d1d1d"/>
<text transform="translate(1574.10,511.70) scale(1,1.03)" font-size="13.2" font-weight="normal" text-anchor="start" fill="#111" stroke="#111" stroke-width="0.4">0.00</text>
<text transform="translate(1606.70,344.75) scale(1,1.11)" font-size="11.6" font-weight="bold" text-anchor="start" fill="#111">SZRnd</text>
<path d="M1622.70 385.50A14.6 14.6 0 1 1 1637.30 370.90" stroke="#1d1d1d" stroke-width="3.6" fill="none"/>
<line x1="1619.87" y1="361.21" x2="1617.34" y2="352.57" stroke="#8f8f8f" stroke-width="7"/>
<path d="M1622.70 385.50A14.6 14.6 0 0 1 1618.60 356.89" stroke="#2aa8f2" stroke-width="3.6" fill="none"/>
<line x1="1622.62" y1="370.61" x2="1618.49" y2="356.50" stroke="#1d1d1d" stroke-width="3" stroke-linecap="round"/>
<text transform="translate(1626.40,387.30) scale(1,1.03)" font-size="13.2" font-weight="normal" text-anchor="start" fill="#111" stroke="#111" stroke-width="0.4">77.0</text>
<text transform="translate(1606.70,406.60) scale(1,1.11)" font-size="11.6" font-weight="bold" text-anchor="start" fill="#111">SzLFO1</text>
<path d="M1622.70 447.60A14.6 14.6 0 1 1 1637.30 433.00" stroke="#1d1d1d" stroke-width="3.6" fill="none"/>
<line x1="1615.56" y1="425.86" x2="1609.19" y2="419.49" stroke="#8f8f8f" stroke-width="7"/>
<line x1="1622.49" y1="432.79" x2="1612.09" y2="422.39" stroke="#1d1d1d" stroke-width="3" stroke-linecap="round"/>
<path d="M1610.70 412.60L1610.70 420.50L1602.70 420.50Z" fill="#1d1d1d"/>
<text transform="translate(1626.40,449.40) scale(1,1.03)" font-size="13.2" font-weight="normal" text-anchor="start" fill="#111" stroke="#111" stroke-width="0.4">0.00</text>
<text transform="translate(1606.70,468.50) scale(1,1.11)" font-size="11.6" font-weight="bold" text-anchor="start" fill="#111">SzLFO2</text>
<path d="M1622.70 509.90A14.6 14.6 0 1 1 1637.30 495.30" stroke="#1d1d1d" stroke-width="3.6" fill="none"/>
<line x1="1615.56" y1="488.16" x2="1609.19" y2="481.79" stroke="#8f8f8f" stroke-width="7"/>
<line x1="1622.49" y1="495.09" x2="1612.09" y2="484.69" stroke="#1d1d1d" stroke-width="3" stroke-linecap="round"/>
<path d="M1610.70 474.90L1610.70 482.80L1602.70 482.80Z" fill="#1d1d1d"/>
<text transform="translate(1626.40,511.70) scale(1,1.03)" font-size="13.2" font-weight="normal" text-anchor="start" fill="#111" stroke="#111" stroke-width="0.4">0.00</text>
<text transform="translate(1659.30,344.75) scale(1,1.11)" font-size="11.6" font-weight="bold" text-anchor="start" fill="#111">VlRnd</text>
<path d="M1675.30 385.50A14.6 14.6 0 1 1 1689.90 370.90" stroke="#1d1d1d" stroke-width="3.6" fill="none"/>
<line x1="1675.30" y1="381.00" x2="1675.30" y2="390.00" stroke="#8f8f8f" stroke-width="7"/>
<line x1="1675.30" y1="371.20" x2="1675.30" y2="385.90" stroke="#1d1d1d" stroke-width="3" stroke-linecap="round"/>
<text transform="translate(1679.00,387.30) scale(1,1.03)" font-size="13.2" font-weight="normal" text-anchor="start" fill="#111" stroke="#111" stroke-width="0.4">0.00</text>
<text transform="translate(1659.30,406.60) scale(1,1.11)" font-size="11.6" font-weight="bold" text-anchor="start" fill="#111">VLLFO</text>
<path d="M1675.30 447.60A14.6 14.6 0 1 1 1689.90 433.00" stroke="#1d1d1d" stroke-width="3.6" fill="none"/>
<line x1="1668.16" y1="425.86" x2="1661.79" y2="419.49" stroke="#8f8f8f" stroke-width="7"/>
<line x1="1675.09" y1="432.79" x2="1664.69" y2="422.39" stroke="#1d1d1d" stroke-width="3" stroke-linecap="round"/>
<path d="M1663.30 412.60L1663.30 420.50L1655.30 420.50Z" fill="#1d1d1d"/>
<text transform="translate(1679.00,449.40) scale(1,1.03)" font-size="13.2" font-weight="normal" text-anchor="start" fill="#111" stroke="#111" stroke-width="0.4">0.00</text>
<text transform="translate(1659.30,468.50) scale(1,1.11)" font-size="11.6" font-weight="bold" text-anchor="start" fill="#111">VlLFO2</text>
<path d="M1675.30 509.90A14.6 14.6 0 1 1 1689.90 495.30" stroke="#1d1d1d" stroke-width="3.6" fill="none"/>
<line x1="1668.16" y1="488.16" x2="1661.79" y2="481.79" stroke="#8f8f8f" stroke-width="7"/>
<line x1="1675.09" y1="495.09" x2="1664.69" y2="484.69" stroke="#1d1d1d" stroke-width="3" stroke-linecap="round"/>
<path d="M1663.30 474.90L1663.30 482.80L1655.30 482.80Z" fill="#1d1d1d"/>
<text transform="translate(1679.00,511.70) scale(1,1.03)" font-size="13.2" font-weight="normal" text-anchor="start" fill="#111" stroke="#111" stroke-width="0.4">0.00</text>
<text transform="translate(1711.20,344.75) scale(1,1.11)" font-size="11.6" font-weight="bold" text-anchor="start" fill="#111">PnRnd</text>
<path d="M1727.20 385.50A14.6 14.6 0 1 1 1741.80 370.90" stroke="#1d1d1d" stroke-width="3.6" fill="none"/>
<line x1="1723.19" y1="361.63" x2="1719.61" y2="353.37" stroke="#8f8f8f" stroke-width="7"/>
<path d="M1727.20 385.50A14.6 14.6 0 0 1 1721.40 357.50" stroke="#f8f070" stroke-width="3.6" fill="none"/>
<line x1="1727.08" y1="370.62" x2="1721.24" y2="357.13" stroke="#1d1d1d" stroke-width="3" stroke-linecap="round"/>
<text transform="translate(1730.90,387.30) scale(1,1.03)" font-size="13.2" font-weight="normal" text-anchor="start" fill="#111" stroke="#111" stroke-width="0.4">0.58</text>
<text transform="translate(1711.20,406.60) scale(1,1.11)" font-size="11.6" font-weight="bold" text-anchor="start" fill="#111">PNLFO</text>
<path d="M1727.20 447.60A14.6 14.6 0 1 1 1741.80 433.00" stroke="#1d1d1d" stroke-width="3.6" fill="none"/>
<line x1="1720.06" y1="425.86" x2="1713.69" y2="419.49" stroke="#8f8f8f" stroke-width="7"/>
<line x1="1726.99" y1="432.79" x2="1716.59" y2="422.39" stroke="#1d1d1d" stroke-width="3" stroke-linecap="round"/>
<path d="M1715.20 412.60L1715.20 420.50L1707.20 420.50Z" fill="#1d1d1d"/>
<text transform="translate(1730.90,449.40) scale(1,1.03)" font-size="13.2" font-weight="normal" text-anchor="start" fill="#111" stroke="#111" stroke-width="0.4">0.00</text>
<text transform="translate(1711.20,468.50) scale(1,1.11)" font-size="11.6" font-weight="bold" text-anchor="start" fill="#111">PnLFO2</text>
<path d="M1727.20 509.90A14.6 14.6 0 1 1 1741.80 495.30" stroke="#1d1d1d" stroke-width="3.6" fill="none"/>
<line x1="1720.06" y1="488.16" x2="1713.69" y2="481.79" stroke="#8f8f8f" stroke-width="7"/>
<line x1="1726.99" y1="495.09" x2="1716.59" y2="484.69" stroke="#1d1d1d" stroke-width="3" stroke-linecap="round"/>
<path d="M1715.20 474.90L1715.20 482.80L1707.20 482.80Z" fill="#1d1d1d"/>
<text transform="translate(1730.90,511.70) scale(1,1.03)" font-size="13.2" font-weight="normal" text-anchor="start" fill="#111" stroke="#111" stroke-width="0.4">0.00</text>
<rect x="1551.00" y="518.00" width="209.00" height="6.00" fill="#50e0f0"/>
<text transform="translate(1558.20,604.90) scale(1,1.11)" font-size="14.8" font-weight="bold" text-anchor="start" fill="#1a1a1a">LFO 1 bus</text>
<rect x="1690.80" y="589.30" width="66.40" height="18.60" fill="#dcdcdc" stroke="#464646" stroke-width="1.6"/>
<text transform="translate(1724.00,604.30) scale(1,1.0)" font-size="15.6" font-weight="normal" text-anchor="middle" fill="#000" stroke="#000" stroke-width="0.3">0</text>
<text transform="translate(1558.20,635.30) scale(1,1.11)" font-size="14.8" font-weight="bold" text-anchor="start" fill="#1a1a1a">LFO 2 bus</text>
<rect x="1690.80" y="618.70" width="66.40" height="18.50" fill="#dcdcdc" stroke="#464646" stroke-width="1.6"/>
<text transform="translate(1724.00,633.70) scale(1,1.0)" font-size="15.6" font-weight="normal" text-anchor="middle" fill="#000" stroke="#000" stroke-width="0.3">0</text>
<text transform="translate(1558.20,662.70) scale(1,1.11)" font-size="14.8" font-weight="bold" text-anchor="start" fill="#1a1a1a">Size MS</text>
<rect x="1690.80" y="646.20" width="66.40" height="19.30" fill="#dcdcdc" stroke="#464646" stroke-width="1.6"/>
<text transform="translate(1724.00,661.80) scale(1,1.0)" font-size="15.6" font-weight="normal" text-anchor="middle" fill="#000" stroke="#000" stroke-width="0.3">5.00 s</text>
<text transform="translate(1558.20,688.80) scale(1,1.11)" font-size="14.8" font-weight="bold" text-anchor="start" fill="#1a1a1a">Bind Size</text>
<rect x="1690.80" y="673.20" width="19.20" height="18.60" fill="#b4b4b4" stroke="#464646" stroke-width="1.6"/>
<text transform="translate(1558.20,717.40) scale(1,1.11)" font-size="14.8" font-weight="bold" text-anchor="start" fill="#1a1a1a">Revers</text>
<rect x="1690.80" y="702.40" width="19.20" height="18.20" fill="#b4b4b4" stroke="#464646" stroke-width="1.6"/>
<text transform="translate(1558.20,746.60) scale(1,1.11)" font-size="14.8" font-weight="bold" text-anchor="start" fill="#1a1a1a">Random Ratio</text>
<rect x="1690.80" y="731.00" width="66.40" height="19.30" fill="#dcdcdc" stroke="#464646" stroke-width="1.6"/>
<text transform="translate(1724.00,746.60) scale(1,1.0)" font-size="15.6" font-weight="normal" text-anchor="middle" fill="#000" stroke="#000" stroke-width="0.3">30.0 %</text>
<rect x="1551.00" y="762.50" width="209.00" height="7.00" fill="#50e0f0"/>
<rect x="1775.55" y="92.10" width="47.40" height="19.70" fill="#dcdcdc" stroke="#464646" stroke-width="1.6"/>
<text transform="translate(1778.35,107.80) scale(1,1.11)" font-size="14" font-weight="normal" text-anchor="start" fill="#000" stroke="#000" stroke-width="0.15">Seq</text>
<path d="M1808.35 97.90L1819.15 97.90L1813.75 106.00Z" fill="#000"/>
<rect x="1829.85" y="92.10" width="31.70" height="19.70" fill="#9e9e9e" stroke="#464646" stroke-width="1.6"/>
<text transform="translate(1832.65,107.80) scale(1,1.11)" font-size="14" font-weight="normal" text-anchor="start" fill="#000" stroke="#000" stroke-width="0.15">A</text>
<path d="M1846.95 97.90L1857.75 97.90L1852.35 106.00Z" fill="#000"/>
<rect x="1868.95" y="92.10" width="28.30" height="19.70" fill="#9e9e9e" stroke="#464646" stroke-width="1.6"/>
<text transform="translate(1871.75,107.80) scale(1,1.11)" font-size="14" font-weight="normal" text-anchor="start" fill="#000" stroke="#000" stroke-width="0.15">1</text>
<path d="M1882.65 97.90L1893.45 97.90L1888.05 106.00Z" fill="#000"/>
<rect x="1904.95" y="92.10" width="46.30" height="19.70" fill="#9e9e9e" stroke="#464646" stroke-width="1.6"/>
<text transform="translate(1907.75,107.80) scale(1,1.11)" font-size="14" font-weight="normal" text-anchor="start" fill="#000" stroke="#000" stroke-width="0.15">Trig</text>
<path d="M1936.65 97.90L1947.45 97.90L1942.05 106.00Z" fill="#000"/>
<rect x="1775.55" y="118.80" width="32.30" height="19.10" fill="#dcdcdc" stroke="#464646" stroke-width="1.6"/>
<text transform="translate(1778.35,134.50) scale(1,1.11)" font-size="14" font-weight="normal" text-anchor="start" fill="#000" stroke="#000" stroke-width="0.15">A</text>
<path d="M1793.25 124.60L1804.05 124.60L1798.65 132.70Z" fill="#000"/>
<rect x="1816.55" y="118.80" width="29.10" height="19.10" fill="#dcdcdc" stroke="#464646" stroke-width="1.6"/>
<text transform="translate(1819.35,134.50) scale(1,1.11)" font-size="14" font-weight="normal" text-anchor="start" fill="#000" stroke="#000" stroke-width="0.15">1</text>
<path d="M1831.05 124.60L1841.85 124.60L1836.45 132.70Z" fill="#000"/>
<rect x="1854.15" y="118.80" width="18.80" height="19.10" fill="#b4b4b4" stroke="#464646" stroke-width="1.6"/>
<rect x="1880.85" y="118.80" width="70.40" height="19.10" fill="#9e9e9e" stroke="#464646" stroke-width="1.6"/>
<text transform="translate(1883.65,134.50) scale(1,1.11)" font-size="14" font-weight="normal" text-anchor="start" fill="#000" stroke="#000" stroke-width="0.15">None</text>
<path d="M1936.65 124.60L1947.45 124.60L1942.05 132.70Z" fill="#000"/>
<text transform="translate(1776.40,154.50) scale(1,1.11)" font-size="11.6" font-weight="bold" text-anchor="start" fill="#111">Position</text>
<path d="M1792.40 195.90A14.6 14.6 0 1 1 1807.00 181.30" stroke="#1d1d1d" stroke-width="3.6" fill="none"/>
<line x1="1792.40" y1="191.40" x2="1792.40" y2="200.40" stroke="#8f8f8f" stroke-width="7"/>
<line x1="1792.40" y1="181.60" x2="1792.40" y2="196.30" stroke="#1d1d1d" stroke-width="3" stroke-linecap="round"/>
<text transform="translate(1796.10,197.70) scale(1,1.03)" font-size="13.2" font-weight="normal" text-anchor="start" fill="#111" stroke="#111" stroke-width="0.4">0.00</text>
<text transform="translate(1828.70,154.50) scale(1,1.11)" font-size="11.6" font-weight="bold" text-anchor="start" fill="#111">MPos</text>
<path d="M1844.70 195.90A14.6 14.6 0 1 1 1859.30 181.30" stroke="#1d1d1d" stroke-width="3.6" fill="none"/>
<line x1="1844.70" y1="191.40" x2="1844.70" y2="200.40" stroke="#8f8f8f" stroke-width="7"/>
<line x1="1844.70" y1="181.60" x2="1844.70" y2="196.30" stroke="#1d1d1d" stroke-width="3" stroke-linecap="round"/>
<text transform="translate(1848.40,197.70) scale(1,1.03)" font-size="13.2" font-weight="normal" text-anchor="start" fill="#111" stroke="#111" stroke-width="0.4">0.00</text>
<text transform="translate(1881.30,154.50) scale(1,1.11)" font-size="11.6" font-weight="bold" text-anchor="start" fill="#111">Size</text>
<path d="M1897.30 195.90A14.6 14.6 0 1 1 1911.90 181.30" stroke="#1d1d1d" stroke-width="3.6" fill="none"/>
<line x1="1897.30" y1="191.40" x2="1897.30" y2="200.40" stroke="#8f8f8f" stroke-width="7"/>
<line x1="1897.30" y1="181.60" x2="1897.30" y2="196.30" stroke="#1d1d1d" stroke-width="3" stroke-linecap="round"/>
<text transform="translate(1901.00,197.70) scale(1,1.03)" font-size="13.2" font-weight="normal" text-anchor="start" fill="#111" stroke="#111" stroke-width="0.4">0.00</text>
<text transform="translate(1933.20,154.50) scale(1,1.11)" font-size="11.6" font-weight="bold" text-anchor="start" fill="#111">MSize</text>
<path d="M1949.20 195.90A14.6 14.6 0 1 1 1963.80 181.30" stroke="#1d1d1d" stroke-width="3.6" fill="none"/>
<line x1="1949.20" y1="191.40" x2="1949.20" y2="200.40" stroke="#8f8f8f" stroke-width="7"/>
<line x1="1949.20" y1="181.60" x2="1949.20" y2="196.30" stroke="#1d1d1d" stroke-width="3" stroke-linecap="round"/>
<text transform="translate(1952.90,197.70) scale(1,1.03)" font-size="13.2" font-weight="normal" text-anchor="start" fill="#111" stroke="#111" stroke-width="0.4">0.00</text>
<text transform="translate(1776.40,217.00) scale(1,1.11)" font-size="11.6" font-weight="bold" text-anchor="start" fill="#111">Volume</text>
<path d="M1792.40 258.10A14.6 14.6 0 1 1 1807.00 243.50" stroke="#1d1d1d" stroke-width="3.6" fill="none"/>
<line x1="1802.50" y1="243.50" x2="1811.50" y2="243.50" stroke="#8f8f8f" stroke-width="7"/>
<path d="M1792.40 258.10A14.6 14.6 0 1 1 1807.00 243.50" stroke="#ffffff" stroke-width="3.6" fill="none"/>
<line x1="1792.70" y1="243.50" x2="1807.40" y2="243.50" stroke="#1d1d1d" stroke-width="3" stroke-linecap="round"/>
<text transform="translate(1796.10,259.90) scale(1,1.03)" font-size="13.2" font-weight="normal" text-anchor="start" fill="#111" stroke="#111" stroke-width="0.4">1.00</text>
<text transform="translate(1828.70,217.00) scale(1,1.11)" font-size="11.6" font-weight="bold" text-anchor="start" fill="#111">Pan</text>
<path d="M1844.70 258.10A14.6 14.6 0 1 1 1859.30 243.50" stroke="#1d1d1d" stroke-width="3.6" fill="none"/>
<line x1="1837.56" y1="236.36" x2="1831.19" y2="229.99" stroke="#8f8f8f" stroke-width="7"/>
<line x1="1844.49" y1="243.29" x2="1834.09" y2="232.89" stroke="#1d1d1d" stroke-width="3" stroke-linecap="round"/>
<path d="M1832.70 223.10L1832.70 231.00L1824.70 231.00Z" fill="#1d1d1d"/>
<text transform="translate(1848.40,259.90) scale(1,1.03)" font-size="13.2" font-weight="normal" text-anchor="start" fill="#111" stroke="#111" stroke-width="0.4">0.00</text>
<text transform="translate(1881.30,217.00) scale(1,1.11)" font-size="11.6" font-weight="bold" text-anchor="start" fill="#111">Tune</text>
<path d="M1897.30 258.10A14.6 14.6 0 1 1 1911.90 243.50" stroke="#1d1d1d" stroke-width="3.6" fill="none"/>
<line x1="1890.16" y1="236.36" x2="1883.79" y2="229.99" stroke="#8f8f8f" stroke-width="7"/>
<line x1="1897.09" y1="243.29" x2="1886.69" y2="232.89" stroke="#1d1d1d" stroke-width="3" stroke-linecap="round"/>
<path d="M1885.30 223.10L1885.30 231.00L1877.30 231.00Z" fill="#1d1d1d"/>
<text transform="translate(1901.00,259.90) scale(1,1.03)" font-size="13.2" font-weight="normal" text-anchor="start" fill="#111" stroke="#111" stroke-width="0.4">0</text>
<text transform="translate(1933.20,217.00) scale(1,1.11)" font-size="11.6" font-weight="bold" text-anchor="start" fill="#111">Fine</text>
<path d="M1949.20 258.10A14.6 14.6 0 1 1 1963.80 243.50" stroke="#1d1d1d" stroke-width="3.6" fill="none"/>
<line x1="1942.06" y1="236.36" x2="1935.69" y2="229.99" stroke="#8f8f8f" stroke-width="7"/>
<line x1="1948.99" y1="243.29" x2="1938.59" y2="232.89" stroke="#1d1d1d" stroke-width="3" stroke-linecap="round"/>
<path d="M1937.20 223.10L1937.20 231.00L1929.20 231.00Z" fill="#1d1d1d"/>
<text transform="translate(1952.90,259.90) scale(1,1.03)" font-size="13.2" font-weight="normal" text-anchor="start" fill="#111" stroke="#111" stroke-width="0.4">0.00</text>
<rect x="1773.00" y="273.00" width="209.00" height="6.00" fill="#cc3370"/>
<text transform="translate(1776.40,344.75) scale(1,1.11)" font-size="11.6" font-weight="bold" text-anchor="start" fill="#111">PSRnd</text>
<path d="M1792.40 385.50A14.6 14.6 0 1 1 1807.00 370.90" stroke="#1d1d1d" stroke-width="3.6" fill="none"/>
<line x1="1787.96" y1="361.83" x2="1784.00" y2="353.75" stroke="#8f8f8f" stroke-width="7"/>
<path d="M1792.40 385.50A14.6 14.6 0 0 1 1785.98 357.79" stroke="#f43a3a" stroke-width="3.6" fill="none"/>
<line x1="1792.27" y1="370.63" x2="1785.80" y2="357.43" stroke="#1d1d1d" stroke-width="3" stroke-linecap="round"/>
<text transform="translate(1796.10,387.30) scale(1,1.03)" font-size="13.2" font-weight="normal" text-anchor="start" fill="#111" stroke="#111" stroke-width="0.4">0.57</text>
<text transform="translate(1776.40,406.60) scale(1,1.11)" font-size="11.6" font-weight="bold" text-anchor="start" fill="#111">PsLFO1</text>
<path d="M1792.40 447.60A14.6 14.6 0 1 1 1807.00 433.00" stroke="#1d1d1d" stroke-width="3.6" fill="none"/>
<line x1="1785.26" y1="425.86" x2="1778.89" y2="419.49" stroke="#8f8f8f" stroke-width="7"/>
<line x1="1792.19" y1="432.79" x2="1781.79" y2="422.39" stroke="#1d1d1d" stroke-width="3" stroke-linecap="round"/>
<path d="M1780.40 412.60L1780.40 420.50L1772.40 420.50Z" fill="#1d1d1d"/>
<text transform="translate(1796.10,449.40) scale(1,1.03)" font-size="13.2" font-weight="normal" text-anchor="start" fill="#111" stroke="#111" stroke-width="0.4">0.00</text>
<text transform="translate(1776.40,468.50) scale(1,1.11)" font-size="11.6" font-weight="bold" text-anchor="start" fill="#111">PsLFO2</text>
<path d="M1792.40 509.90A14.6 14.6 0 1 1 1807.00 495.30" stroke="#1d1d1d" stroke-width="3.6" fill="none"/>
<line x1="1785.26" y1="488.16" x2="1778.89" y2="481.79" stroke="#8f8f8f" stroke-width="7"/>
<line x1="1792.19" y1="495.09" x2="1781.79" y2="484.69" stroke="#1d1d1d" stroke-width="3" stroke-linecap="round"/>
<path d="M1780.40 474.90L1780.40 482.80L1772.40 482.80Z" fill="#1d1d1d"/>
<text transform="translate(1796.10,511.70) scale(1,1.03)" font-size="13.2" font-weight="normal" text-anchor="start" fill="#111" stroke="#111" stroke-width="0.4">0.00</text>
<text transform="translate(1828.70,344.75) scale(1,1.11)" font-size="11.6" font-weight="bold" text-anchor="start" fill="#111">SZRnd</text>
<path d="M1844.70 385.50A14.6 14.6 0 1 1 1859.30 370.90" stroke="#1d1d1d" stroke-width="3.6" fill="none"/>
<line x1="1835.01" y1="368.07" x2="1826.37" y2="365.54" stroke="#8f8f8f" stroke-width="7"/>
<path d="M1844.70 385.50A14.6 14.6 0 0 1 1830.69 366.80" stroke="#2aa8f2" stroke-width="3.6" fill="none"/>
<line x1="1844.41" y1="370.82" x2="1830.30" y2="366.69" stroke="#1d1d1d" stroke-width="3" stroke-linecap="round"/>
<text transform="translate(1848.40,387.30) scale(1,1.03)" font-size="13.2" font-weight="normal" text-anchor="start" fill="#111" stroke="#111" stroke-width="0.4">50.0</text>
<text transform="translate(1828.70,406.60) scale(1,1.11)" font-size="11.6" font-weight="bold" text-anchor="start" fill="#111">SzLFO1</text>
<path d="M1844.70 447.60A14.6 14.6 0 1 1 1859.30 433.00" stroke="#1d1d1d" stroke-width="3.6" fill="none"/>
<line x1="1837.56" y1="425.86" x2="1831.19" y2="419.49" stroke="#8f8f8f" stroke-width="7"/>
<line x1="1844.49" y1="432.79" x2="1834.09" y2="422.39" stroke="#1d1d1d" stroke-width="3" stroke-linecap="round"/>
<path d="M1832.70 412.60L1832.70 420.50L1824.70 420.50Z" fill="#1d1d1d"/>
<text transform="translate(1848.40,449.40) scale(1,1.03)" font-size="13.2" font-weight="normal" text-anchor="start" fill="#111" stroke="#111" stroke-width="0.4">0.00</text>
<text transform="translate(1828.70,468.50) scale(1,1.11)" font-size="11.6" font-weight="bold" text-anchor="start" fill="#111">SzLFO2</text>
<path d="M1844.70 509.90A14.6 14.6 0 1 1 1859.30 495.30" stroke="#1d1d1d" stroke-width="3.6" fill="none"/>
<line x1="1837.56" y1="488.16" x2="1831.19" y2="481.79" stroke="#8f8f8f" stroke-width="7"/>
<line x1="1844.49" y1="495.09" x2="1834.09" y2="484.69" stroke="#1d1d1d" stroke-width="3" stroke-linecap="round"/>
<path d="M1832.70 474.90L1832.70 482.80L1824.70 482.80Z" fill="#1d1d1d"/>
<text transform="translate(1848.40,511.70) scale(1,1.03)" font-size="13.2" font-weight="normal" text-anchor="start" fill="#111" stroke="#111" stroke-width="0.4">0.00</text>
<text transform="translate(1881.30,344.75) scale(1,1.11)" font-size="11.6" font-weight="bold" text-anchor="start" fill="#111">VlRnd</text>
<path d="M1897.30 385.50A14.6 14.6 0 1 1 1911.90 370.90" stroke="#1d1d1d" stroke-width="3.6" fill="none"/>
<line x1="1897.30" y1="381.00" x2="1897.30" y2="390.00" stroke="#8f8f8f" stroke-width="7"/>
<line x1="1897.30" y1="371.20" x2="1897.30" y2="385.90" stroke="#1d1d1d" stroke-width="3" stroke-linecap="round"/>
<text transform="translate(1901.00,387.30) scale(1,1.03)" font-size="13.2" font-weight="normal" text-anchor="start" fill="#111" stroke="#111" stroke-width="0.4">0.00</text>
<text transform="translate(1881.30,406.60) scale(1,1.11)" font-size="11.6" font-weight="bold" text-anchor="start" fill="#111">VLLFO</text>
<path d="M1897.30 447.60A14.6 14.6 0 1 1 1911.90 433.00" stroke="#1d1d1d" stroke-width="3.6" fill="none"/>
<line x1="1890.16" y1="425.86" x2="1883.79" y2="419.49" stroke="#8f8f8f" stroke-width="7"/>
<line x1="1897.09" y1="432.79" x2="1886.69" y2="422.39" stroke="#1d1d1d" stroke-width="3" stroke-linecap="round"/>
<path d="M1885.30 412.60L1885.30 420.50L1877.30 420.50Z" fill="#1d1d1d"/>
<text transform="translate(1901.00,449.40) scale(1,1.03)" font-size="13.2" font-weight="normal" text-anchor="start" fill="#111" stroke="#111" stroke-width="0.4">0.00</text>
<text transform="translate(1881.30,468.50) scale(1,1.11)" font-size="11.6" font-weight="bold" text-anchor="start" fill="#111">VlLFO2</text>
<path d="M1897.30 509.90A14.6 14.6 0 1 1 1911.90 495.30" stroke="#1d1d1d" stroke-width="3.6" fill="none"/>
<line x1="1890.16" y1="488.16" x2="1883.79" y2="481.79" stroke="#8f8f8f" stroke-width="7"/>
<line x1="1897.09" y1="495.09" x2="1886.69" y2="484.69" stroke="#1d1d1d" stroke-width="3" stroke-linecap="round"/>
<path d="M1885.30 474.90L1885.30 482.80L1877.30 482.80Z" fill="#1d1d1d"/>
<text transform="translate(1901.00,511.70) scale(1,1.03)" font-size="13.2" font-weight="normal" text-anchor="start" fill="#111" stroke="#111" stroke-width="0.4">0.00</text>
<text transform="translate(1933.20,344.75) scale(1,1.11)" font-size="11.6" font-weight="bold" text-anchor="start" fill="#111">PnRnd</text>
<path d="M1949.20 385.50A14.6 14.6 0 1 1 1963.80 370.90" stroke="#1d1d1d" stroke-width="3.6" fill="none"/>
<line x1="1942.06" y1="363.76" x2="1935.69" y2="357.39" stroke="#8f8f8f" stroke-width="7"/>
<path d="M1949.20 385.50A14.6 14.6 0 0 1 1938.88 360.58" stroke="#f8f070" stroke-width="3.6" fill="none"/>
<line x1="1948.99" y1="370.69" x2="1938.59" y2="360.29" stroke="#1d1d1d" stroke-width="3" stroke-linecap="round"/>
<text transform="translate(1952.90,387.30) scale(1,1.03)" font-size="13.2" font-weight="normal" text-anchor="start" fill="#111" stroke="#111" stroke-width="0.4">0.50</text>
<text transform="translate(1933.20,406.60) scale(1,1.11)" font-size="11.6" font-weight="bold" text-anchor="start" fill="#111">PNLFO</text>
<path d="M1949.20 447.60A14.6 14.6 0 1 1 1963.80 433.00" stroke="#1d1d1d" stroke-width="3.6" fill="none"/>
<line x1="1942.06" y1="425.86" x2="1935.69" y2="419.49" stroke="#8f8f8f" stroke-width="7"/>
<line x1="1948.99" y1="432.79" x2="1938.59" y2="422.39" stroke="#1d1d1d" stroke-width="3" stroke-linecap="round"/>
<path d="M1937.20 412.60L1937.20 420.50L1929.20 420.50Z" fill="#1d1d1d"/>
<text transform="translate(1952.90,449.40) scale(1,1.03)" font-size="13.2" font-weight="normal" text-anchor="start" fill="#111" stroke="#111" stroke-width="0.4">0.00</text>
<text transform="translate(1933.20,468.50) scale(1,1.11)" font-size="11.6" font-weight="bold" text-anchor="start" fill="#111">PnLFO2</text>
<path d="M1949.20 509.90A14.6 14.6 0 1 1 1963.80 495.30" stroke="#1d1d1d" stroke-width="3.6" fill="none"/>
<line x1="1942.06" y1="488.16" x2="1935.69" y2="481.79" stroke="#8f8f8f" stroke-width="7"/>
<line x1="1948.99" y1="495.09" x2="1938.59" y2="484.69" stroke="#1d1d1d" stroke-width="3" stroke-linecap="round"/>
<path d="M1937.20 474.90L1937.20 482.80L1929.20 482.80Z" fill="#1d1d1d"/>
<text transform="translate(1952.90,511.70) scale(1,1.03)" font-size="13.2" font-weight="normal" text-anchor="start" fill="#111" stroke="#111" stroke-width="0.4">0.00</text>
<rect x="1773.00" y="518.00" width="209.00" height="6.00" fill="#cc3370"/>
<text transform="translate(1780.20,604.90) scale(1,1.11)" font-size="14.8" font-weight="bold" text-anchor="start" fill="#1a1a1a">LFO 1 bus</text>
<rect x="1912.80" y="589.30" width="66.40" height="18.60" fill="#dcdcdc" stroke="#464646" stroke-width="1.6"/>
<text transform="translate(1946.00,604.30) scale(1,1.0)" font-size="15.6" font-weight="normal" text-anchor="middle" fill="#000" stroke="#000" stroke-width="0.3">0</text>
<text transform="translate(1780.20,635.30) scale(1,1.11)" font-size="14.8" font-weight="bold" text-anchor="start" fill="#1a1a1a">LFO 2 bus</text>
<rect x="1912.80" y="618.70" width="66.40" height="18.50" fill="#dcdcdc" stroke="#464646" stroke-width="1.6"/>
<text transform="translate(1946.00,633.70) scale(1,1.0)" font-size="15.6" font-weight="normal" text-anchor="middle" fill="#000" stroke="#000" stroke-width="0.3">0</text>
<text transform="translate(1780.20,662.70) scale(1,1.11)" font-size="14.8" font-weight="bold" text-anchor="start" fill="#1a1a1a">Size MS</text>
<rect x="1912.80" y="646.20" width="66.40" height="19.30" fill="#dcdcdc" stroke="#464646" stroke-width="1.6"/>
<text transform="translate(1946.00,661.80) scale(1,1.0)" font-size="15.6" font-weight="normal" text-anchor="middle" fill="#000" stroke="#000" stroke-width="0.3">5.00 s</text>
<text transform="translate(1780.20,688.80) scale(1,1.11)" font-size="14.8" font-weight="bold" text-anchor="start" fill="#1a1a1a">Bind Size</text>
<rect x="1912.80" y="673.20" width="19.20" height="18.60" fill="#b4b4b4" stroke="#464646" stroke-width="1.6"/>
<text transform="translate(1780.20,717.40) scale(1,1.11)" font-size="14.8" font-weight="bold" text-anchor="start" fill="#1a1a1a">Revers</text>
<rect x="1912.80" y="702.40" width="19.20" height="18.20" fill="#b4b4b4" stroke="#464646" stroke-width="1.6"/>
<text transform="translate(1780.20,746.60) scale(1,1.11)" font-size="14.8" font-weight="bold" text-anchor="start" fill="#1a1a1a">Random Ratio</text>
<rect x="1912.80" y="731.00" width="66.40" height="19.30" fill="#dcdcdc" stroke="#464646" stroke-width="1.6"/>
<text transform="translate(1946.00,746.60) scale(1,1.0)" font-size="15.6" font-weight="normal" text-anchor="middle" fill="#000" stroke="#000" stroke-width="0.3">30.0 %</text>
<rect x="1773.00" y="762.50" width="209.00" height="7.00" fill="#cc3370"/>
<text transform="translate(8.50,102.80) scale(1,1.11)" font-size="11.6" font-weight="bold" text-anchor="start" fill="#111">Order</text>
<path d="M24.30 143.80A14.6 14.6 0 1 1 38.90 129.20" stroke="#1d1d1d" stroke-width="3.6" fill="none"/>
<line x1="15.08" y1="133.32" x2="6.86" y2="137.00" stroke="#8f8f8f" stroke-width="7"/>
<path d="M24.30 143.80A14.6 14.6 0 0 1 10.97 135.16" stroke="#f07020" stroke-width="3.6" fill="none"/>
<line x1="24.03" y1="129.32" x2="10.61" y2="135.32" stroke="#1d1d1d" stroke-width="3" stroke-linecap="round"/>
<text transform="translate(28.00,145.60) scale(1,1.03)" font-size="13.2" font-weight="normal" text-anchor="start" fill="#111" stroke="#111" stroke-width="0.4">31</text>
<text transform="translate(54.00,102.80) scale(1,1.11)" font-size="11.6" font-weight="bold" text-anchor="start" fill="#111">Offset</text>
<path d="M69.80 143.80A14.6 14.6 0 1 1 84.40 129.20" stroke="#1d1d1d" stroke-width="3.6" fill="none"/>
<line x1="68.80" y1="119.15" x2="67.92" y2="110.19" stroke="#8f8f8f" stroke-width="7"/>
<path d="M69.80 143.80A14.6 14.6 0 0 1 68.36 114.67" stroke="#3a40e0" stroke-width="3.6" fill="none"/>
<line x1="69.77" y1="128.90" x2="68.32" y2="114.27" stroke="#1d1d1d" stroke-width="3" stroke-linecap="round"/>
<text transform="translate(73.50,145.60) scale(1,1.03)" font-size="13.2" font-weight="normal" text-anchor="start" fill="#111" stroke="#111" stroke-width="0.4">64.57</text>
<text transform="translate(114.50,102.80) scale(1,1.11)" font-size="11.6" font-weight="bold" text-anchor="start" fill="#111">Fade</text>
<path d="M130.80 143.80A14.6 14.6 0 1 1 145.40 129.20" stroke="#1d1d1d" stroke-width="3.6" fill="none"/>
<line x1="120.70" y1="128.95" x2="111.71" y2="128.73" stroke="#8f8f8f" stroke-width="7"/>
<path d="M130.80 143.80A14.6 14.6 0 0 1 116.20 128.84" stroke="#a040e0" stroke-width="3.6" fill="none"/>
<line x1="130.50" y1="129.19" x2="115.80" y2="128.83" stroke="#1d1d1d" stroke-width="3" stroke-linecap="round"/>
<text transform="translate(134.50,145.60) scale(1,1.03)" font-size="13.2" font-weight="normal" text-anchor="start" fill="#111" stroke="#111" stroke-width="0.4">43</text>
<rect x="156.40" y="126.90" width="38.50" height="19.00" fill="#9b3fe6" stroke="#464646" stroke-width="1.6"/>
<text transform="translate(175.60,142.30) scale(1,1.05)" font-size="15.6" font-weight="normal" text-anchor="middle" fill="#fff" stroke="#fff" stroke-width="0.35">199</text>
<text transform="translate(8.50,164.90) scale(1,1.11)" font-size="11.6" font-weight="bold" text-anchor="start" fill="#111">Scale</text>
<path d="M24.30 205.60A14.6 14.6 0 1 1 38.90 191.00" stroke="#1d1d1d" stroke-width="3.6" fill="none"/>
<line x1="14.20" y1="191.02" x2="5.20" y2="191.03" stroke="#8f8f8f" stroke-width="7"/>
<path d="M9.70 191.02A14.6 14.6 0 0 1 13.98 180.68" stroke="#2e9e2e" stroke-width="3.6" fill="none"/>
<line x1="24.00" y1="191.00" x2="9.30" y2="191.02" stroke="#1d1d1d" stroke-width="3" stroke-linecap="round"/>
<path d="M12.30 170.60L12.30 178.50L4.30 178.50Z" fill="#2e9e2e"/>
<text transform="translate(28.00,207.40) scale(1,1.03)" font-size="13.2" font-weight="normal" text-anchor="start" fill="#111" stroke="#111" stroke-width="0.4">0.6</text>
<text transform="translate(54.00,164.90) scale(1,1.11)" font-size="11.6" font-weight="bold" text-anchor="start" fill="#111">Detune</text>
<path d="M70.30 205.60A14.6 14.6 0 1 1 84.90 191.00" stroke="#1d1d1d" stroke-width="3.6" fill="none"/>
<line x1="62.07" y1="185.14" x2="54.74" y2="179.93" stroke="#8f8f8f" stroke-width="7"/>
<path d="M70.30 205.60A14.6 14.6 0 0 1 58.40 182.54" stroke="#e8202e" stroke-width="3.6" fill="none"/>
<line x1="70.06" y1="190.83" x2="58.08" y2="182.30" stroke="#1d1d1d" stroke-width="3" stroke-linecap="round"/>
<text transform="translate(74.00,207.40) scale(1,1.03)" font-size="13.2" font-weight="normal" text-anchor="start" fill="#111" stroke="#111" stroke-width="0.4">59</text>
<text transform="translate(101.00,164.90) scale(1,1.11)" font-size="11.6" font-weight="bold" text-anchor="start" fill="#111">SRatio</text>
<path d="M110.60 206.93A19.2 19.2 0 1 1 129.80 206.93" stroke="#1d1d1d" stroke-width="3.6" fill="none"/>
<line x1="105.65" y1="192.37" x2="96.74" y2="193.64" stroke="#8f8f8f" stroke-width="7"/>
<path d="M110.60 206.93A19.2 19.2 0 0 1 101.19 193.01" stroke="#22a4ec" stroke-width="3.6" fill="none"/>
<line x1="119.90" y1="190.34" x2="100.80" y2="193.06" stroke="#1d1d1d" stroke-width="3" stroke-linecap="round"/>
<text transform="translate(120.00,221.60) scale(1,1.03)" font-size="13.2" font-weight="normal" text-anchor="middle" fill="#111" stroke="#111" stroke-width="0.4">0.34</text>
<text transform="translate(155.50,164.90) scale(1,1.11)" font-size="11.6" font-weight="bold" text-anchor="start" fill="#111">FRatio</text>
<path d="M164.50 207.23A19.2 19.2 0 1 1 183.70 207.23" stroke="#1d1d1d" stroke-width="3.6" fill="none"/>
<line x1="169.56" y1="176.62" x2="166.78" y2="168.06" stroke="#8f8f8f" stroke-width="7"/>
<path d="M164.50 207.23A19.2 19.2 0 0 1 168.17 172.34" stroke="#b4d41e" stroke-width="3.6" fill="none"/>
<line x1="174.01" y1="190.31" x2="168.04" y2="171.96" stroke="#1d1d1d" stroke-width="3" stroke-linecap="round"/>
<text transform="translate(174.00,221.60) scale(1,1.03)" font-size="13.2" font-weight="normal" text-anchor="middle" fill="#111" stroke="#111" stroke-width="0.4">0.21</text>
<text transform="translate(8.50,226.90) scale(1,1.11)" font-size="11.6" font-weight="bold" text-anchor="start" fill="#111">StInt</text>
<path d="M24.30 267.90A14.6 14.6 0 1 1 38.90 253.30" stroke="#1d1d1d" stroke-width="3.6" fill="none"/>
<line x1="19.43" y1="244.45" x2="15.10" y2="236.56" stroke="#8f8f8f" stroke-width="7"/>
<path d="M13.98 242.98A14.6 14.6 0 0 1 17.27 240.51" stroke="#66c84a" stroke-width="3.6" fill="none"/>
<line x1="24.16" y1="253.04" x2="17.07" y2="240.16" stroke="#1d1d1d" stroke-width="3" stroke-linecap="round"/>
<path d="M12.30 232.90L12.30 240.80L4.30 240.80Z" fill="#66c84a"/>
<text transform="translate(28.00,269.70) scale(1,1.03)" font-size="13.2" font-weight="normal" text-anchor="start" fill="#111" stroke="#111" stroke-width="0.4">4</text>
<text transform="translate(54.00,226.90) scale(1,1.11)" font-size="11.6" font-weight="bold" text-anchor="start" fill="#111">OftLFO</text>
<path d="M70.30 267.90A14.6 14.6 0 1 1 84.90 253.30" stroke="#1d1d1d" stroke-width="3.6" fill="none"/>
<line x1="66.58" y1="262.69" x2="63.27" y2="271.06" stroke="#8f8f8f" stroke-width="7"/>
<path d="M70.30 267.90A14.6 14.6 0 0 1 64.93 266.87" stroke="#d01010" stroke-width="3.6" fill="none"/>
<line x1="70.19" y1="253.58" x2="64.78" y2="267.25" stroke="#1d1d1d" stroke-width="3" stroke-linecap="round"/>
<text transform="translate(74.00,269.70) scale(1,1.03)" font-size="13.2" font-weight="normal" text-anchor="start" fill="#111" stroke="#111" stroke-width="0.4">0.08</text>
<rect x="109.10" y="246.30" width="48.30" height="18.60" fill="#a80d0d" stroke="#464646" stroke-width="1.6"/>
<text transform="translate(133.20,261.30) scale(1,1.05)" font-size="15.6" font-weight="normal" text-anchor="middle" fill="#fff" stroke="#fff" stroke-width="0.35">3</text>
<rect x="166.00" y="246.30" width="38.70" height="18.60" fill="#000" stroke="#464646" stroke-width="1.6"/>
<text transform="translate(185.30,261.30) scale(1,1.05)" font-size="15.6" font-weight="normal" text-anchor="middle" fill="#fff" stroke="#fff" stroke-width="0.35">117</text>
<text transform="translate(224.00,842.50) scale(1,1.01)" font-size="14.4" font-weight="normal" text-anchor="start" fill="#222" stroke="#222" stroke-width="0.25">First Tune Seqencer</text>
<path d="M236.90 882.20A14.6 14.6 0 1 1 251.50 867.60" stroke="#1d1d1d" stroke-width="3.6" fill="none"/>
<line x1="227.84" y1="872.07" x2="219.77" y2="876.06" stroke="#8f8f8f" stroke-width="7"/>
<path d="M236.90 882.20A14.6 14.6 0 0 1 223.81 874.06" stroke="#93a7fa" stroke-width="3.6" fill="none"/>
<line x1="236.63" y1="867.73" x2="223.45" y2="874.24" stroke="#1d1d1d" stroke-width="3" stroke-linecap="round"/>
<text transform="translate(240.40,881.90) scale(1,1.11)" font-size="13" font-weight="bold" text-anchor="start" fill="#111">23.6 %</text>
<rect x="223.20" y="893.00" width="40.50" height="19.00" fill="#dcdcdc" stroke="#464646" stroke-width="1.6"/>
<text transform="translate(226.00,908.30) scale(1,1.03)" font-size="15.5" font-weight="normal" text-anchor="start" fill="#000" stroke="#000" stroke-width="0.15">17</text>
<path d="M249.10 899.20L259.90 899.20L254.50 906.20Z" fill="#000"/>
<text transform="translate(294.40,866.10) scale(1,1.11)" font-size="12.3" font-weight="bold" text-anchor="start" fill="#111">Step 1</text>
<path d="M310.20 906.60A14.6 14.6 0 1 1 324.80 892.00" stroke="#1d1d1d" stroke-width="3.6" fill="none"/>
<line x1="305.01" y1="883.34" x2="300.38" y2="875.62" stroke="#8f8f8f" stroke-width="7"/>
<path d="M299.88 881.68A14.6 14.6 0 0 1 302.69 879.48" stroke="#93a7fa" stroke-width="3.6" fill="none"/>
<line x1="310.05" y1="891.74" x2="302.49" y2="879.13" stroke="#1d1d1d" stroke-width="3" stroke-linecap="round"/>
<path d="M298.20 871.60L298.20 879.50L290.20 879.50Z" fill="#93a7fa"/>
<text transform="translate(313.90,908.40) scale(1,1.03)" font-size="13.2" font-weight="normal" text-anchor="start" fill="#111" stroke="#111" stroke-width="0.4">5</text>
<rect x="349.20" y="860.80" width="18.60" height="18.70" fill="#93a7fa" stroke="#464646" stroke-width="1.6"/>
<rect x="349.20" y="887.80" width="18.60" height="18.70" fill="url(#nz)" stroke="#34343a" stroke-width="1.6"/>
<text transform="translate(384.40,866.10) scale(1,1.11)" font-size="12.3" font-weight="bold" text-anchor="start" fill="#111">Step 2</text>
<path d="M400.20 906.60A14.6 14.6 0 1 1 414.80 892.00" stroke="#1d1d1d" stroke-width="3.6" fill="none"/>
<line x1="392.09" y1="885.98" x2="384.86" y2="880.62" stroke="#8f8f8f" stroke-width="7"/>
<path d="M388.47 883.30A14.6 14.6 0 0 1 389.88 881.68" stroke="#93a7fa" stroke-width="3.6" fill="none"/>
<line x1="399.96" y1="891.82" x2="388.15" y2="883.06" stroke="#1d1d1d" stroke-width="3" stroke-linecap="round"/>
<path d="M388.20 871.60L388.20 879.50L380.20 879.50Z" fill="#93a7fa"/>
<text transform="translate(403.90,908.40) scale(1,1.03)" font-size="13.2" font-weight="normal" text-anchor="start" fill="#111" stroke="#111" stroke-width="0.4">-3</text>
<rect x="439.20" y="860.80" width="18.60" height="18.70" fill="#93a7fa" stroke="#464646" stroke-width="1.6"/>
<rect x="439.20" y="887.80" width="18.60" height="18.70" fill="url(#nz)" stroke="#34343a" stroke-width="1.6"/>
<text transform="translate(474.40,866.10) scale(1,1.11)" font-size="12.3" font-weight="bold" text-anchor="start" fill="#111">Step 3</text>
<path d="M490.20 906.60A14.6 14.6 0 1 1 504.80 892.00" stroke="#1d1d1d" stroke-width="3.6" fill="none"/>
<line x1="485.01" y1="883.34" x2="480.38" y2="875.62" stroke="#8f8f8f" stroke-width="7"/>
<path d="M479.88 881.68A14.6 14.6 0 0 1 482.69 879.48" stroke="#93a7fa" stroke-width="3.6" fill="none"/>
<line x1="490.05" y1="891.74" x2="482.49" y2="879.13" stroke="#1d1d1d" stroke-width="3" stroke-linecap="round"/>
<path d="M478.20 871.60L478.20 879.50L470.20 879.50Z" fill="#93a7fa"/>
<text transform="translate(493.90,908.40) scale(1,1.03)" font-size="13.2" font-weight="normal" text-anchor="start" fill="#111" stroke="#111" stroke-width="0.4">5</text>
<rect x="529.20" y="860.80" width="18.60" height="18.70" fill="#93a7fa" stroke="#464646" stroke-width="1.6"/>
<rect x="529.20" y="887.80" width="18.60" height="18.70" fill="url(#nz)" stroke="#34343a" stroke-width="1.6"/>
<text transform="translate(564.40,866.10) scale(1,1.11)" font-size="12.3" font-weight="bold" text-anchor="start" fill="#111">Step 4</text>
<path d="M580.20 906.60A14.6 14.6 0 1 1 594.80 892.00" stroke="#1d1d1d" stroke-width="3.6" fill="none"/>
<line x1="580.70" y1="881.91" x2="581.14" y2="872.92" stroke="#8f8f8f" stroke-width="7"/>
<path d="M569.88 881.68A14.6 14.6 0 0 1 580.92 877.42" stroke="#93a7fa" stroke-width="3.6" fill="none"/>
<line x1="580.21" y1="891.70" x2="580.94" y2="877.02" stroke="#1d1d1d" stroke-width="3" stroke-linecap="round"/>
<path d="M568.20 871.60L568.20 879.50L560.20 879.50Z" fill="#93a7fa"/>
<text transform="translate(583.90,908.40) scale(1,1.03)" font-size="13.2" font-weight="normal" text-anchor="start" fill="#111" stroke="#111" stroke-width="0.4">17</text>
<rect x="619.20" y="860.80" width="18.60" height="18.70" fill="#93a7fa" stroke="#464646" stroke-width="1.6"/>
<rect x="619.20" y="887.80" width="18.60" height="18.70" fill="#ac9a88" stroke="#34343a" stroke-width="1.6"/>
<text transform="translate(654.40,866.10) scale(1,1.11)" font-size="12.3" font-weight="bold" text-anchor="start" fill="#111">Step 5</text>
<path d="M670.20 906.60A14.6 14.6 0 1 1 684.80 892.00" stroke="#1d1d1d" stroke-width="3.6" fill="none"/>
<line x1="660.21" y1="890.52" x2="651.31" y2="889.20" stroke="#8f8f8f" stroke-width="7"/>
<path d="M655.76 889.86A14.6 14.6 0 0 1 659.88 881.68" stroke="#93a7fa" stroke-width="3.6" fill="none"/>
<line x1="669.90" y1="891.96" x2="655.36" y2="889.80" stroke="#1d1d1d" stroke-width="3" stroke-linecap="round"/>
<path d="M658.20 871.60L658.20 879.50L650.20 879.50Z" fill="#93a7fa"/>
<text transform="translate(673.90,908.40) scale(1,1.03)" font-size="13.2" font-weight="normal" text-anchor="start" fill="#111" stroke="#111" stroke-width="0.4">-13</text>
<rect x="709.20" y="860.80" width="18.60" height="18.70" fill="#93a7fa" stroke="#464646" stroke-width="1.6"/>
<rect x="709.20" y="887.80" width="18.60" height="18.70" fill="url(#nz)" stroke="#34343a" stroke-width="1.6"/>
<text transform="translate(744.40,866.10) scale(1,1.11)" font-size="12.3" font-weight="bold" text-anchor="start" fill="#111">Step 6</text>
<path d="M760.20 906.60A14.6 14.6 0 1 1 774.80 892.00" stroke="#1d1d1d" stroke-width="3.6" fill="none"/>
<line x1="761.68" y1="882.01" x2="763.00" y2="873.11" stroke="#8f8f8f" stroke-width="7"/>
<path d="M749.88 881.68A14.6 14.6 0 0 1 762.34 877.56" stroke="#93a7fa" stroke-width="3.6" fill="none"/>
<line x1="760.24" y1="891.70" x2="762.40" y2="877.16" stroke="#1d1d1d" stroke-width="3" stroke-linecap="round"/>
<path d="M748.20 871.60L748.20 879.50L740.20 879.50Z" fill="#93a7fa"/>
<text transform="translate(763.90,908.40) scale(1,1.03)" font-size="13.2" font-weight="normal" text-anchor="start" fill="#111" stroke="#111" stroke-width="0.4">19</text>
<rect x="799.20" y="860.80" width="18.60" height="18.70" fill="#93a7fa" stroke="#464646" stroke-width="1.6"/>
<rect x="799.20" y="887.80" width="18.60" height="18.70" fill="url(#nz)" stroke="#34343a" stroke-width="1.6"/>
<text transform="translate(834.40,866.10) scale(1,1.11)" font-size="12.3" font-weight="bold" text-anchor="start" fill="#111">Step 7</text>
<path d="M850.20 906.60A14.6 14.6 0 1 1 864.80 892.00" stroke="#1d1d1d" stroke-width="3.6" fill="none"/>
<line x1="843.06" y1="884.86" x2="836.69" y2="878.49" stroke="#8f8f8f" stroke-width="7"/>
<line x1="849.99" y1="891.79" x2="839.59" y2="881.39" stroke="#1d1d1d" stroke-width="3" stroke-linecap="round"/>
<path d="M838.20 871.60L838.20 879.50L830.20 879.50Z" fill="#1d1d1d"/>
<text transform="translate(853.90,908.40) scale(1,1.03)" font-size="13.2" font-weight="normal" text-anchor="start" fill="#111" stroke="#111" stroke-width="0.4">0</text>
<rect x="889.20" y="860.80" width="18.60" height="18.70" fill="#93a7fa" stroke="#464646" stroke-width="1.6"/>
<rect x="889.20" y="887.80" width="18.60" height="18.70" fill="url(#nz)" stroke="#34343a" stroke-width="1.6"/>
<text transform="translate(924.40,866.10) scale(1,1.11)" font-size="12.3" font-weight="bold" text-anchor="start" fill="#111">Step 8</text>
<path d="M940.20 906.60A14.6 14.6 0 1 1 954.80 892.00" stroke="#1d1d1d" stroke-width="3.6" fill="none"/>
<line x1="933.06" y1="884.86" x2="926.69" y2="878.49" stroke="#8f8f8f" stroke-width="7"/>
<line x1="939.99" y1="891.79" x2="929.59" y2="881.39" stroke="#1d1d1d" stroke-width="3" stroke-linecap="round"/>
<path d="M928.20 871.60L928.20 879.50L920.20 879.50Z" fill="#1d1d1d"/>
<text transform="translate(943.90,908.40) scale(1,1.03)" font-size="13.2" font-weight="normal" text-anchor="start" fill="#111" stroke="#111" stroke-width="0.4">0</text>
<rect x="979.20" y="860.80" width="18.60" height="18.70" fill="#93a7fa" stroke="#464646" stroke-width="1.6"/>
<rect x="979.20" y="887.80" width="18.60" height="18.70" fill="url(#nz)" stroke="#34343a" stroke-width="1.6"/>
<text transform="translate(1014.40,866.10) scale(1,1.11)" font-size="12.3" font-weight="bold" text-anchor="start" fill="#111">Step 9</text>
<path d="M1030.20 906.60A14.6 14.6 0 1 1 1044.80 892.00" stroke="#1d1d1d" stroke-width="3.6" fill="none"/>
<line x1="1023.06" y1="884.86" x2="1016.69" y2="878.49" stroke="#8f8f8f" stroke-width="7"/>
<line x1="1029.99" y1="891.79" x2="1019.59" y2="881.39" stroke="#1d1d1d" stroke-width="3" stroke-linecap="round"/>
<path d="M1018.20 871.60L1018.20 879.50L1010.20 879.50Z" fill="#1d1d1d"/>
<text transform="translate(1033.90,908.40) scale(1,1.03)" font-size="13.2" font-weight="normal" text-anchor="start" fill="#111" stroke="#111" stroke-width="0.4">0</text>
<rect x="1069.20" y="860.80" width="18.60" height="18.70" fill="#93a7fa" stroke="#464646" stroke-width="1.6"/>
<rect x="1069.20" y="887.80" width="18.60" height="18.70" fill="url(#nz)" stroke="#34343a" stroke-width="1.6"/>
<text transform="translate(224.00,934.80) scale(1,1.01)" font-size="14.4" font-weight="normal" text-anchor="start" fill="#222" stroke="#222" stroke-width="0.25">Second Tune Seqencer</text>
<path d="M236.90 974.50A14.6 14.6 0 1 1 251.50 959.90" stroke="#1d1d1d" stroke-width="3.6" fill="none"/>
<line x1="228.47" y1="954.34" x2="220.95" y2="949.39" stroke="#8f8f8f" stroke-width="7"/>
<path d="M236.90 974.50A14.6 14.6 0 0 1 224.71 951.87" stroke="#93a7fa" stroke-width="3.6" fill="none"/>
<line x1="236.65" y1="959.73" x2="224.38" y2="951.64" stroke="#1d1d1d" stroke-width="3" stroke-linecap="round"/>
<text transform="translate(240.40,974.20) scale(1,1.11)" font-size="13" font-weight="bold" text-anchor="start" fill="#111">45.7 %</text>
<rect x="223.20" y="985.30" width="40.50" height="19.00" fill="#dcdcdc" stroke="#464646" stroke-width="1.6"/>
<text transform="translate(226.00,1000.60) scale(1,1.03)" font-size="15.5" font-weight="normal" text-anchor="start" fill="#000" stroke="#000" stroke-width="0.15">6</text>
<path d="M249.10 991.50L259.90 991.50L254.50 998.50Z" fill="#000"/>
<text transform="translate(294.40,958.40) scale(1,1.11)" font-size="12.3" font-weight="bold" text-anchor="start" fill="#111">Step 1</text>
<path d="M310.20 998.90A14.6 14.6 0 1 1 324.80 984.30" stroke="#1d1d1d" stroke-width="3.6" fill="none"/>
<line x1="306.80" y1="974.79" x2="303.77" y2="966.32" stroke="#8f8f8f" stroke-width="7"/>
<path d="M299.88 973.98A14.6 14.6 0 0 1 305.28 970.55" stroke="#93a7fa" stroke-width="3.6" fill="none"/>
<line x1="310.10" y1="984.02" x2="305.15" y2="970.18" stroke="#1d1d1d" stroke-width="3" stroke-linecap="round"/>
<path d="M298.20 963.90L298.20 971.80L290.20 971.80Z" fill="#93a7fa"/>
<text transform="translate(313.90,1000.70) scale(1,1.03)" font-size="13.2" font-weight="normal" text-anchor="start" fill="#111" stroke="#111" stroke-width="0.4">9</text>
<rect x="349.20" y="953.10" width="18.60" height="18.70" fill="#93a7fa" stroke="#464646" stroke-width="1.6"/>
<rect x="349.20" y="980.10" width="18.60" height="18.70" fill="url(#nz)" stroke="#34343a" stroke-width="1.6"/>
<text transform="translate(384.40,958.40) scale(1,1.11)" font-size="12.3" font-weight="bold" text-anchor="start" fill="#111">Step 2</text>
<path d="M400.20 998.90A14.6 14.6 0 1 1 414.80 984.30" stroke="#1d1d1d" stroke-width="3.6" fill="none"/>
<line x1="393.06" y1="977.16" x2="386.69" y2="970.79" stroke="#8f8f8f" stroke-width="7"/>
<line x1="399.99" y1="984.09" x2="389.59" y2="973.69" stroke="#1d1d1d" stroke-width="3" stroke-linecap="round"/>
<path d="M388.20 963.90L388.20 971.80L380.20 971.80Z" fill="#1d1d1d"/>
<text transform="translate(403.90,1000.70) scale(1,1.03)" font-size="13.2" font-weight="normal" text-anchor="start" fill="#111" stroke="#111" stroke-width="0.4">0</text>
<rect x="439.20" y="953.10" width="18.60" height="18.70" fill="#93a7fa" stroke="#464646" stroke-width="1.6"/>
<rect x="439.20" y="980.10" width="18.60" height="18.70" fill="url(#nz)" stroke="#34343a" stroke-width="1.6"/>
<text transform="translate(474.40,958.40) scale(1,1.11)" font-size="12.3" font-weight="bold" text-anchor="start" fill="#111">Step 3</text>
<path d="M490.20 998.90A14.6 14.6 0 1 1 504.80 984.30" stroke="#1d1d1d" stroke-width="3.6" fill="none"/>
<line x1="488.23" y1="974.39" x2="486.47" y2="965.57" stroke="#8f8f8f" stroke-width="7"/>
<path d="M479.88 973.98A14.6 14.6 0 0 1 487.35 969.98" stroke="#93a7fa" stroke-width="3.6" fill="none"/>
<line x1="490.14" y1="984.01" x2="487.27" y2="969.59" stroke="#1d1d1d" stroke-width="3" stroke-linecap="round"/>
<path d="M478.20 963.90L478.20 971.80L470.20 971.80Z" fill="#93a7fa"/>
<text transform="translate(493.90,1000.70) scale(1,1.03)" font-size="13.2" font-weight="normal" text-anchor="start" fill="#111" stroke="#111" stroke-width="0.4">12</text>
<rect x="529.20" y="953.10" width="18.60" height="18.70" fill="#93a7fa" stroke="#464646" stroke-width="1.6"/>
<rect x="529.20" y="980.10" width="18.60" height="18.70" fill="url(#nz)" stroke="#34343a" stroke-width="1.6"/>
<text transform="translate(564.40,958.40) scale(1,1.11)" font-size="12.3" font-weight="bold" text-anchor="start" fill="#111">Step 4</text>
<path d="M580.20 998.90A14.6 14.6 0 1 1 594.80 984.30" stroke="#1d1d1d" stroke-width="3.6" fill="none"/>
<line x1="570.53" y1="987.23" x2="561.92" y2="989.84" stroke="#8f8f8f" stroke-width="7"/>
<path d="M566.23 988.54A14.6 14.6 0 0 1 569.88 973.98" stroke="#93a7fa" stroke-width="3.6" fill="none"/>
<line x1="579.91" y1="984.39" x2="565.85" y2="988.65" stroke="#1d1d1d" stroke-width="3" stroke-linecap="round"/>
<path d="M568.20 963.90L568.20 971.80L560.20 971.80Z" fill="#93a7fa"/>
<text transform="translate(583.90,1000.70) scale(1,1.03)" font-size="13.2" font-weight="normal" text-anchor="start" fill="#111" stroke="#111" stroke-width="0.4">-22</text>
<rect x="619.20" y="953.10" width="18.60" height="18.70" fill="#93a7fa" stroke="#464646" stroke-width="1.6"/>
<rect x="619.20" y="980.10" width="18.60" height="18.70" fill="url(#nz)" stroke="#34343a" stroke-width="1.6"/>
<text transform="translate(654.40,958.40) scale(1,1.11)" font-size="12.3" font-weight="bold" text-anchor="start" fill="#111">Step 5</text>
<path d="M670.20 998.90A14.6 14.6 0 1 1 684.80 984.30" stroke="#1d1d1d" stroke-width="3.6" fill="none"/>
<line x1="662.39" y1="977.89" x2="655.44" y2="972.18" stroke="#8f8f8f" stroke-width="7"/>
<path d="M658.91 975.04A14.6 14.6 0 0 1 659.88 973.98" stroke="#93a7fa" stroke-width="3.6" fill="none"/>
<line x1="669.97" y1="984.11" x2="658.60" y2="974.78" stroke="#1d1d1d" stroke-width="3" stroke-linecap="round"/>
<path d="M658.20 963.90L658.20 971.80L650.20 971.80Z" fill="#93a7fa"/>
<text transform="translate(673.90,1000.70) scale(1,1.03)" font-size="13.2" font-weight="normal" text-anchor="start" fill="#111" stroke="#111" stroke-width="0.4">-2</text>
<rect x="709.20" y="953.10" width="18.60" height="18.70" fill="#93a7fa" stroke="#464646" stroke-width="1.6"/>
<rect x="709.20" y="980.10" width="18.60" height="18.70" fill="url(#nz)" stroke="#34343a" stroke-width="1.6"/>
<text transform="translate(744.40,958.40) scale(1,1.11)" font-size="12.3" font-weight="bold" text-anchor="start" fill="#111">Step 6</text>
<path d="M760.20 998.90A14.6 14.6 0 1 1 774.80 984.30" stroke="#1d1d1d" stroke-width="3.6" fill="none"/>
<line x1="752.39" y1="977.89" x2="745.44" y2="972.18" stroke="#8f8f8f" stroke-width="7"/>
<path d="M748.91 975.04A14.6 14.6 0 0 1 749.88 973.98" stroke="#93a7fa" stroke-width="3.6" fill="none"/>
<line x1="759.97" y1="984.11" x2="748.60" y2="974.78" stroke="#1d1d1d" stroke-width="3" stroke-linecap="round"/>
<path d="M748.20 963.90L748.20 971.80L740.20 971.80Z" fill="#93a7fa"/>
<text transform="translate(763.90,1000.70) scale(1,1.03)" font-size="13.2" font-weight="normal" text-anchor="start" fill="#111" stroke="#111" stroke-width="0.4">-2</text>
<rect x="799.20" y="953.10" width="18.60" height="18.70" fill="#93a7fa" stroke="#464646" stroke-width="1.6"/>
<rect x="799.20" y="980.10" width="18.60" height="18.70" fill="#f0922a" stroke="#34343a" stroke-width="1.6"/>
<text transform="translate(834.40,958.40) scale(1,1.11)" font-size="12.3" font-weight="bold" text-anchor="start" fill="#111">Step 7</text>
<path d="M850.20 998.90A14.6 14.6 0 1 1 864.80 984.30" stroke="#1d1d1d" stroke-width="3.6" fill="none"/>
<line x1="843.42" y1="976.82" x2="837.37" y2="970.15" stroke="#8f8f8f" stroke-width="7"/>
<path d="M839.88 973.98A14.6 14.6 0 0 1 840.40 973.48" stroke="#93a7fa" stroke-width="3.6" fill="none"/>
<line x1="850.00" y1="984.08" x2="840.13" y2="973.19" stroke="#1d1d1d" stroke-width="3" stroke-linecap="round"/>
<path d="M838.20 963.90L838.20 971.80L830.20 971.80Z" fill="#93a7fa"/>
<text transform="translate(853.90,1000.70) scale(1,1.03)" font-size="13.2" font-weight="normal" text-anchor="start" fill="#111" stroke="#111" stroke-width="0.4">1</text>
<rect x="889.20" y="953.10" width="18.60" height="18.70" fill="#93a7fa" stroke="#464646" stroke-width="1.6"/>
<rect x="889.20" y="980.10" width="18.60" height="18.70" fill="url(#nz)" stroke="#34343a" stroke-width="1.6"/>
<text transform="translate(924.40,958.40) scale(1,1.11)" font-size="12.3" font-weight="bold" text-anchor="start" fill="#111">Step 8</text>
<path d="M940.20 998.90A14.6 14.6 0 1 1 954.80 984.30" stroke="#1d1d1d" stroke-width="3.6" fill="none"/>
<line x1="935.44" y1="975.39" x2="931.20" y2="967.46" stroke="#8f8f8f" stroke-width="7"/>
<path d="M929.88 973.98A14.6 14.6 0 0 1 933.32 971.42" stroke="#93a7fa" stroke-width="3.6" fill="none"/>
<line x1="940.06" y1="984.04" x2="933.13" y2="971.07" stroke="#1d1d1d" stroke-width="3" stroke-linecap="round"/>
<path d="M928.20 963.90L928.20 971.80L920.20 971.80Z" fill="#93a7fa"/>
<text transform="translate(943.90,1000.70) scale(1,1.03)" font-size="13.2" font-weight="normal" text-anchor="start" fill="#111" stroke="#111" stroke-width="0.4">6</text>
<rect x="979.20" y="953.10" width="18.60" height="18.70" fill="#93a7fa" stroke="#464646" stroke-width="1.6"/>
<rect x="979.20" y="980.10" width="18.60" height="18.70" fill="url(#nz)" stroke="#34343a" stroke-width="1.6"/>
<text transform="translate(1014.40,958.40) scale(1,1.11)" font-size="12.3" font-weight="bold" text-anchor="start" fill="#111">Step 9</text>
<path d="M1030.20 998.90A14.6 14.6 0 1 1 1044.80 984.30" stroke="#1d1d1d" stroke-width="3.6" fill="none"/>
<line x1="1024.59" y1="975.90" x2="1019.59" y2="968.42" stroke="#8f8f8f" stroke-width="7"/>
<path d="M1019.88 973.98A14.6 14.6 0 0 1 1022.09 972.16" stroke="#93a7fa" stroke-width="3.6" fill="none"/>
<line x1="1030.03" y1="984.05" x2="1021.87" y2="971.83" stroke="#1d1d1d" stroke-width="3" stroke-linecap="round"/>
<path d="M1018.20 963.90L1018.20 971.80L1010.20 971.80Z" fill="#93a7fa"/>
<text transform="translate(1033.90,1000.70) scale(1,1.03)" font-size="13.2" font-weight="normal" text-anchor="start" fill="#111" stroke="#111" stroke-width="0.4">4</text>
<rect x="1069.20" y="953.10" width="18.60" height="18.70" fill="#93a7fa" stroke="#464646" stroke-width="1.6"/>
<rect x="1069.20" y="980.10" width="18.60" height="18.70" fill="url(#nz)" stroke="#34343a" stroke-width="1.6"/>
<text transform="translate(1124.00,842.50) scale(1,1.01)" font-size="14.4" font-weight="normal" text-anchor="start" fill="#222" stroke="#222" stroke-width="0.25">First Fine Tune Seqencer</text>
<path d="M1136.90 882.20A14.6 14.6 0 1 1 1151.50 867.60" stroke="#1d1d1d" stroke-width="3.6" fill="none"/>
<line x1="1127.11" y1="865.12" x2="1118.39" y2="862.91" stroke="#8f8f8f" stroke-width="7"/>
<path d="M1136.90 882.20A14.6 14.6 0 0 1 1122.75 864.01" stroke="#cfbee4" stroke-width="3.6" fill="none"/>
<line x1="1136.61" y1="867.53" x2="1122.36" y2="863.92" stroke="#1d1d1d" stroke-width="3" stroke-linecap="round"/>
<text transform="translate(1140.40,881.90) scale(1,1.11)" font-size="13" font-weight="bold" text-anchor="start" fill="#111">38.6 %</text>
<rect x="1123.20" y="893.00" width="40.50" height="19.00" fill="#dcdcdc" stroke="#464646" stroke-width="1.6"/>
<text transform="translate(1126.00,908.30) scale(1,1.03)" font-size="15.5" font-weight="normal" text-anchor="start" fill="#000" stroke="#000" stroke-width="0.15">13</text>
<path d="M1149.10 899.20L1159.90 899.20L1154.50 906.20Z" fill="#000"/>
<text transform="translate(1194.40,866.10) scale(1,1.11)" font-size="12.3" font-weight="bold" text-anchor="start" fill="#111">Step 1</text>
<path d="M1210.20 906.60A14.6 14.6 0 1 1 1224.80 892.00" stroke="#1d1d1d" stroke-width="3.6" fill="none"/>
<line x1="1203.06" y1="884.86" x2="1196.69" y2="878.49" stroke="#8f8f8f" stroke-width="7"/>
<line x1="1209.99" y1="891.79" x2="1199.59" y2="881.39" stroke="#1d1d1d" stroke-width="3" stroke-linecap="round"/>
<path d="M1198.20 871.60L1198.20 879.50L1190.20 879.50Z" fill="#1d1d1d"/>
<text transform="translate(1213.90,908.40) scale(1,1.03)" font-size="13.2" font-weight="normal" text-anchor="start" fill="#111" stroke="#111" stroke-width="0.4">0.00</text>
<rect x="1249.20" y="860.80" width="18.60" height="18.70" fill="#cfbee4" stroke="#464646" stroke-width="1.6"/>
<rect x="1249.20" y="887.80" width="18.60" height="18.70" fill="#22e02a" stroke="#34343a" stroke-width="1.6"/>
<text transform="translate(1284.40,866.10) scale(1,1.11)" font-size="12.3" font-weight="bold" text-anchor="start" fill="#111">Step 2</text>
<path d="M1300.20 906.60A14.6 14.6 0 1 1 1314.80 892.00" stroke="#1d1d1d" stroke-width="3.6" fill="none"/>
<line x1="1298.00" y1="882.14" x2="1296.03" y2="873.36" stroke="#8f8f8f" stroke-width="7"/>
<path d="M1289.88 881.68A14.6 14.6 0 0 1 1297.02 877.75" stroke="#cfbee4" stroke-width="3.6" fill="none"/>
<line x1="1300.13" y1="891.71" x2="1296.93" y2="877.36" stroke="#1d1d1d" stroke-width="3" stroke-linecap="round"/>
<path d="M1288.20 871.60L1288.20 879.50L1280.20 879.50Z" fill="#cfbee4"/>
<text transform="translate(1303.90,908.40) scale(1,1.03)" font-size="13.2" font-weight="normal" text-anchor="start" fill="#111" stroke="#111" stroke-width="0.4">0.24</text>
<rect x="1339.20" y="860.80" width="18.60" height="18.70" fill="#cfbee4" stroke="#464646" stroke-width="1.6"/>
<rect x="1339.20" y="887.80" width="18.60" height="18.70" fill="url(#nz)" stroke="#34343a" stroke-width="1.6"/>
<text transform="translate(1374.40,866.10) scale(1,1.11)" font-size="12.3" font-weight="bold" text-anchor="start" fill="#111">Step 3</text>
<path d="M1390.20 906.60A14.6 14.6 0 1 1 1404.80 892.00" stroke="#1d1d1d" stroke-width="3.6" fill="none"/>
<line x1="1381.72" y1="886.52" x2="1374.15" y2="881.64" stroke="#8f8f8f" stroke-width="7"/>
<path d="M1377.93 884.08A14.6 14.6 0 0 1 1379.88 881.68" stroke="#cfbee4" stroke-width="3.6" fill="none"/>
<line x1="1389.95" y1="891.84" x2="1377.60" y2="883.86" stroke="#1d1d1d" stroke-width="3" stroke-linecap="round"/>
<path d="M1378.20 871.60L1378.20 879.50L1370.20 879.50Z" fill="#cfbee4"/>
<text transform="translate(1393.90,908.40) scale(1,1.03)" font-size="13.2" font-weight="normal" text-anchor="start" fill="#111" stroke="#111" stroke-width="0.4">-0.09</text>
<rect x="1429.20" y="860.80" width="18.60" height="18.70" fill="#cfbee4" stroke="#464646" stroke-width="1.6"/>
<rect x="1429.20" y="887.80" width="18.60" height="18.70" fill="url(#nz)" stroke="#34343a" stroke-width="1.6"/>
<text transform="translate(1464.40,866.10) scale(1,1.11)" font-size="12.3" font-weight="bold" text-anchor="start" fill="#111">Step 4</text>
<path d="M1480.20 906.60A14.6 14.6 0 1 1 1494.80 892.00" stroke="#1d1d1d" stroke-width="3.6" fill="none"/>
<line x1="1473.06" y1="884.86" x2="1466.69" y2="878.49" stroke="#8f8f8f" stroke-width="7"/>
<line x1="1479.99" y1="891.79" x2="1469.59" y2="881.39" stroke="#1d1d1d" stroke-width="3" stroke-linecap="round"/>
<path d="M1468.20 871.60L1468.20 879.50L1460.20 879.50Z" fill="#1d1d1d"/>
<text transform="translate(1483.90,908.40) scale(1,1.03)" font-size="13.2" font-weight="normal" text-anchor="start" fill="#111" stroke="#111" stroke-width="0.4">0.00</text>
<rect x="1519.20" y="860.80" width="18.60" height="18.70" fill="#cfbee4" stroke="#464646" stroke-width="1.6"/>
<rect x="1519.20" y="887.80" width="18.60" height="18.70" fill="url(#nz)" stroke="#34343a" stroke-width="1.6"/>
<text transform="translate(1554.40,866.10) scale(1,1.11)" font-size="12.3" font-weight="bold" text-anchor="start" fill="#111">Step 5</text>
<path d="M1570.20 906.60A14.6 14.6 0 1 1 1584.80 892.00" stroke="#1d1d1d" stroke-width="3.6" fill="none"/>
<line x1="1563.06" y1="884.86" x2="1556.69" y2="878.49" stroke="#8f8f8f" stroke-width="7"/>
<line x1="1569.99" y1="891.79" x2="1559.59" y2="881.39" stroke="#1d1d1d" stroke-width="3" stroke-linecap="round"/>
<path d="M1558.20 871.60L1558.20 879.50L1550.20 879.50Z" fill="#1d1d1d"/>
<text transform="translate(1573.90,908.40) scale(1,1.03)" font-size="13.2" font-weight="normal" text-anchor="start" fill="#111" stroke="#111" stroke-width="0.4">0.00</text>
<rect x="1609.20" y="860.80" width="18.60" height="18.70" fill="#cfbee4" stroke="#464646" stroke-width="1.6"/>
<rect x="1609.20" y="887.80" width="18.60" height="18.70" fill="url(#nz)" stroke="#34343a" stroke-width="1.6"/>
<text transform="translate(1644.40,866.10) scale(1,1.11)" font-size="12.3" font-weight="bold" text-anchor="start" fill="#111">Step 6</text>
<path d="M1660.20 906.60A14.6 14.6 0 1 1 1674.80 892.00" stroke="#1d1d1d" stroke-width="3.6" fill="none"/>
<line x1="1657.08" y1="882.39" x2="1654.30" y2="873.83" stroke="#8f8f8f" stroke-width="7"/>
<path d="M1649.88 881.68A14.6 14.6 0 0 1 1655.69 878.11" stroke="#cfbee4" stroke-width="3.6" fill="none"/>
<line x1="1660.11" y1="891.71" x2="1655.56" y2="877.73" stroke="#1d1d1d" stroke-width="3" stroke-linecap="round"/>
<path d="M1648.20 871.60L1648.20 879.50L1640.20 879.50Z" fill="#cfbee4"/>
<text transform="translate(1663.90,908.40) scale(1,1.03)" font-size="13.2" font-weight="normal" text-anchor="start" fill="#111" stroke="#111" stroke-width="0.4">0.20</text>
<rect x="1699.20" y="860.80" width="18.60" height="18.70" fill="#cfbee4" stroke="#464646" stroke-width="1.6"/>
<rect x="1699.20" y="887.80" width="18.60" height="18.70" fill="url(#nz)" stroke="#34343a" stroke-width="1.6"/>
<text transform="translate(1734.40,866.10) scale(1,1.11)" font-size="12.3" font-weight="bold" text-anchor="start" fill="#111">Step 7</text>
<path d="M1750.20 906.60A14.6 14.6 0 1 1 1764.80 892.00" stroke="#1d1d1d" stroke-width="3.6" fill="none"/>
<line x1="1741.47" y1="886.93" x2="1733.68" y2="882.41" stroke="#8f8f8f" stroke-width="7"/>
<path d="M1737.58 884.67A14.6 14.6 0 0 1 1739.88 881.68" stroke="#cfbee4" stroke-width="3.6" fill="none"/>
<line x1="1749.94" y1="891.85" x2="1737.23" y2="884.47" stroke="#1d1d1d" stroke-width="3" stroke-linecap="round"/>
<path d="M1738.20 871.60L1738.20 879.50L1730.20 879.50Z" fill="#cfbee4"/>
<text transform="translate(1753.90,908.40) scale(1,1.03)" font-size="13.2" font-weight="normal" text-anchor="start" fill="#111" stroke="#111" stroke-width="0.4">-0.11</text>
<rect x="1789.20" y="860.80" width="18.60" height="18.70" fill="#cfbee4" stroke="#464646" stroke-width="1.6"/>
<rect x="1789.20" y="887.80" width="18.60" height="18.70" fill="url(#nz)" stroke="#34343a" stroke-width="1.6"/>
<text transform="translate(1824.40,866.10) scale(1,1.11)" font-size="12.3" font-weight="bold" text-anchor="start" fill="#111">Step 8</text>
<path d="M1840.20 906.60A14.6 14.6 0 1 1 1854.80 892.00" stroke="#1d1d1d" stroke-width="3.6" fill="none"/>
<line x1="1837.08" y1="882.39" x2="1834.30" y2="873.83" stroke="#8f8f8f" stroke-width="7"/>
<path d="M1829.88 881.68A14.6 14.6 0 0 1 1835.69 878.11" stroke="#cfbee4" stroke-width="3.6" fill="none"/>
<line x1="1840.11" y1="891.71" x2="1835.56" y2="877.73" stroke="#1d1d1d" stroke-width="3" stroke-linecap="round"/>
<path d="M1828.20 871.60L1828.20 879.50L1820.20 879.50Z" fill="#cfbee4"/>
<text transform="translate(1843.90,908.40) scale(1,1.03)" font-size="13.2" font-weight="normal" text-anchor="start" fill="#111" stroke="#111" stroke-width="0.4">0.20</text>
<rect x="1879.20" y="860.80" width="18.60" height="18.70" fill="#cfbee4" stroke="#464646" stroke-width="1.6"/>
<rect x="1879.20" y="887.80" width="18.60" height="18.70" fill="url(#nz)" stroke="#34343a" stroke-width="1.6"/>
<text transform="translate(1914.40,866.10) scale(1,1.11)" font-size="12.3" font-weight="bold" text-anchor="start" fill="#111">Step 9</text>
<path d="M1930.20 906.60A14.6 14.6 0 1 1 1944.80 892.00" stroke="#1d1d1d" stroke-width="3.6" fill="none"/>
<line x1="1926.19" y1="882.73" x2="1922.61" y2="874.47" stroke="#8f8f8f" stroke-width="7"/>
<path d="M1919.88 881.68A14.6 14.6 0 0 1 1924.40 878.60" stroke="#cfbee4" stroke-width="3.6" fill="none"/>
<line x1="1930.08" y1="891.72" x2="1924.24" y2="878.23" stroke="#1d1d1d" stroke-width="3" stroke-linecap="round"/>
<path d="M1918.20 871.60L1918.20 879.50L1910.20 879.50Z" fill="#cfbee4"/>
<text transform="translate(1933.90,908.40) scale(1,1.03)" font-size="13.2" font-weight="normal" text-anchor="start" fill="#111" stroke="#111" stroke-width="0.4">0.16</text>
<rect x="1969.20" y="860.80" width="18.60" height="18.70" fill="#cfbee4" stroke="#464646" stroke-width="1.6"/>
<rect x="1969.20" y="887.80" width="18.60" height="18.70" fill="url(#nz)" stroke="#34343a" stroke-width="1.6"/>
<text transform="translate(1124.00,934.80) scale(1,1.01)" font-size="14.4" font-weight="normal" text-anchor="start" fill="#222" stroke="#222" stroke-width="0.25">Second Fine Tune Seqencer</text>
<path d="M1136.90 974.50A14.6 14.6 0 1 1 1151.50 959.90" stroke="#1d1d1d" stroke-width="3.6" fill="none"/>
<line x1="1145.67" y1="954.90" x2="1153.49" y2="950.44" stroke="#8f8f8f" stroke-width="7"/>
<path d="M1136.90 974.50A14.6 14.6 0 1 1 1149.58 952.67" stroke="#cfbee4" stroke-width="3.6" fill="none"/>
<line x1="1137.16" y1="959.75" x2="1149.93" y2="952.47" stroke="#1d1d1d" stroke-width="3" stroke-linecap="round"/>
<text transform="translate(1140.40,974.20) scale(1,1.11)" font-size="13" font-weight="bold" text-anchor="start" fill="#111">89.0 %</text>
<rect x="1123.20" y="985.30" width="40.50" height="19.00" fill="#dcdcdc" stroke="#464646" stroke-width="1.6"/>
<text transform="translate(1126.00,1000.60) scale(1,1.03)" font-size="15.5" font-weight="normal" text-anchor="start" fill="#000" stroke="#000" stroke-width="0.15">1</text>
<path d="M1149.10 991.50L1159.90 991.50L1154.50 998.50Z" fill="#000"/>
<text transform="translate(1194.40,958.40) scale(1,1.11)" font-size="12.3" font-weight="bold" text-anchor="start" fill="#111">Step 1</text>
<path d="M1210.20 998.90A14.6 14.6 0 1 1 1224.80 984.30" stroke="#1d1d1d" stroke-width="3.6" fill="none"/>
<line x1="1201.85" y1="978.62" x2="1194.40" y2="973.56" stroke="#8f8f8f" stroke-width="7"/>
<path d="M1198.12 976.09A14.6 14.6 0 0 1 1199.88 973.98" stroke="#cfbee4" stroke-width="3.6" fill="none"/>
<line x1="1209.95" y1="984.13" x2="1197.79" y2="975.87" stroke="#1d1d1d" stroke-width="3" stroke-linecap="round"/>
<path d="M1198.20 963.90L1198.20 971.80L1190.20 971.80Z" fill="#cfbee4"/>
<text transform="translate(1213.90,1000.70) scale(1,1.03)" font-size="13.2" font-weight="normal" text-anchor="start" fill="#111" stroke="#111" stroke-width="0.4">-0.08</text>
<rect x="1249.20" y="953.10" width="18.60" height="18.70" fill="#cfbee4" stroke="#464646" stroke-width="1.6"/>
<rect x="1249.20" y="980.10" width="18.60" height="18.70" fill="#e07818" stroke="#34343a" stroke-width="1.6"/>
<text transform="translate(1284.40,958.40) scale(1,1.11)" font-size="12.3" font-weight="bold" text-anchor="start" fill="#111">Step 2</text>
<path d="M1300.20 998.90A14.6 14.6 0 1 1 1314.80 984.30" stroke="#1d1d1d" stroke-width="3.6" fill="none"/>
<line x1="1296.41" y1="974.94" x2="1293.03" y2="966.60" stroke="#8f8f8f" stroke-width="7"/>
<path d="M1289.88 973.98A14.6 14.6 0 0 1 1294.72 970.77" stroke="#cfbee4" stroke-width="3.6" fill="none"/>
<line x1="1300.09" y1="984.02" x2="1294.57" y2="970.40" stroke="#1d1d1d" stroke-width="3" stroke-linecap="round"/>
<path d="M1288.20 963.90L1288.20 971.80L1280.20 971.80Z" fill="#cfbee4"/>
<text transform="translate(1303.90,1000.70) scale(1,1.03)" font-size="13.2" font-weight="normal" text-anchor="start" fill="#111" stroke="#111" stroke-width="0.4">0.17</text>
<rect x="1339.20" y="953.10" width="18.60" height="18.70" fill="#cfbee4" stroke="#464646" stroke-width="1.6"/>
<rect x="1339.20" y="980.10" width="18.60" height="18.70" fill="url(#nz)" stroke="#34343a" stroke-width="1.6"/>
<text transform="translate(1374.40,958.40) scale(1,1.11)" font-size="12.3" font-weight="bold" text-anchor="start" fill="#111">Step 3</text>
<path d="M1390.20 998.90A14.6 14.6 0 1 1 1404.80 984.30" stroke="#1d1d1d" stroke-width="3.6" fill="none"/>
<line x1="1383.06" y1="977.16" x2="1376.69" y2="970.79" stroke="#8f8f8f" stroke-width="7"/>
<line x1="1389.99" y1="984.09" x2="1379.59" y2="973.69" stroke="#1d1d1d" stroke-width="3" stroke-linecap="round"/>
<path d="M1378.20 963.90L1378.20 971.80L1370.20 971.80Z" fill="#1d1d1d"/>
<text transform="translate(1393.90,1000.70) scale(1,1.03)" font-size="13.2" font-weight="normal" text-anchor="start" fill="#111" stroke="#111" stroke-width="0.4">0.00</text>
<rect x="1429.20" y="953.10" width="18.60" height="18.70" fill="#cfbee4" stroke="#464646" stroke-width="1.6"/>
<rect x="1429.20" y="980.10" width="18.60" height="18.70" fill="url(#nz)" stroke="#34343a" stroke-width="1.6"/>
<text transform="translate(1464.40,958.40) scale(1,1.11)" font-size="12.3" font-weight="bold" text-anchor="start" fill="#111">Step 4</text>
<path d="M1480.20 998.90A14.6 14.6 0 1 1 1494.80 984.30" stroke="#1d1d1d" stroke-width="3.6" fill="none"/>
<line x1="1475.13" y1="975.57" x2="1470.61" y2="967.78" stroke="#8f8f8f" stroke-width="7"/>
<path d="M1469.88 973.98A14.6 14.6 0 0 1 1472.87 971.68" stroke="#cfbee4" stroke-width="3.6" fill="none"/>
<line x1="1480.05" y1="984.04" x2="1472.67" y2="971.33" stroke="#1d1d1d" stroke-width="3" stroke-linecap="round"/>
<path d="M1468.20 963.90L1468.20 971.80L1460.20 971.80Z" fill="#cfbee4"/>
<text transform="translate(1483.90,1000.70) scale(1,1.03)" font-size="13.2" font-weight="normal" text-anchor="start" fill="#111" stroke="#111" stroke-width="0.4">0.11</text>
<rect x="1519.20" y="953.10" width="18.60" height="18.70" fill="#cfbee4" stroke="#464646" stroke-width="1.6"/>
<rect x="1519.20" y="980.10" width="18.60" height="18.70" fill="url(#nz)" stroke="#34343a" stroke-width="1.6"/>
<text transform="translate(1554.40,958.40) scale(1,1.11)" font-size="12.3" font-weight="bold" text-anchor="start" fill="#111">Step 5</text>
<path d="M1570.20 998.90A14.6 14.6 0 1 1 1584.80 984.30" stroke="#1d1d1d" stroke-width="3.6" fill="none"/>
<line x1="1568.23" y1="974.39" x2="1566.47" y2="965.57" stroke="#8f8f8f" stroke-width="7"/>
<path d="M1559.88 973.98A14.6 14.6 0 0 1 1567.35 969.98" stroke="#cfbee4" stroke-width="3.6" fill="none"/>
<line x1="1570.14" y1="984.01" x2="1567.27" y2="969.59" stroke="#1d1d1d" stroke-width="3" stroke-linecap="round"/>
<path d="M1558.20 963.90L1558.20 971.80L1550.20 971.80Z" fill="#cfbee4"/>
<text transform="translate(1573.90,1000.70) scale(1,1.03)" font-size="13.2" font-weight="normal" text-anchor="start" fill="#111" stroke="#111" stroke-width="0.4">0.25</text>
<rect x="1609.20" y="953.10" width="18.60" height="18.70" fill="#cfbee4" stroke="#464646" stroke-width="1.6"/>
<rect x="1609.20" y="980.10" width="18.60" height="18.70" fill="url(#nz)" stroke="#34343a" stroke-width="1.6"/>
<text transform="translate(1644.40,958.40) scale(1,1.11)" font-size="12.3" font-weight="bold" text-anchor="start" fill="#111">Step 6</text>
<path d="M1660.20 998.90A14.6 14.6 0 1 1 1674.80 984.30" stroke="#1d1d1d" stroke-width="3.6" fill="none"/>
<line x1="1653.06" y1="977.16" x2="1646.69" y2="970.79" stroke="#8f8f8f" stroke-width="7"/>
<line x1="1659.99" y1="984.09" x2="1649.59" y2="973.69" stroke="#1d1d1d" stroke-width="3" stroke-linecap="round"/>
<path d="M1648.20 963.90L1648.20 971.80L1640.20 971.80Z" fill="#1d1d1d"/>
<text transform="translate(1663.90,1000.70) scale(1,1.03)" font-size="13.2" font-weight="normal" text-anchor="start" fill="#111" stroke="#111" stroke-width="0.4">0.00</text>
<rect x="1699.20" y="953.10" width="18.60" height="18.70" fill="#cfbee4" stroke="#464646" stroke-width="1.6"/>
<rect x="1699.20" y="980.10" width="18.60" height="18.70" fill="url(#nz)" stroke="#34343a" stroke-width="1.6"/>
<text transform="translate(1734.40,958.40) scale(1,1.11)" font-size="12.3" font-weight="bold" text-anchor="start" fill="#111">Step 7</text>
<path d="M1750.20 998.90A14.6 14.6 0 1 1 1764.80 984.30" stroke="#1d1d1d" stroke-width="3.6" fill="none"/>
<line x1="1743.06" y1="977.16" x2="1736.69" y2="970.79" stroke="#8f8f8f" stroke-width="7"/>
<line x1="1749.99" y1="984.09" x2="1739.59" y2="973.69" stroke="#1d1d1d" stroke-width="3" stroke-linecap="round"/>
<path d="M1738.20 963.90L1738.20 971.80L1730.20 971.80Z" fill="#1d1d1d"/>
<text transform="translate(1753.90,1000.70) scale(1,1.03)" font-size="13.2" font-weight="normal" text-anchor="start" fill="#111" stroke="#111" stroke-width="0.4">0.00</text>
<rect x="1789.20" y="953.10" width="18.60" height="18.70" fill="#cfbee4" stroke="#464646" stroke-width="1.6"/>
<rect x="1789.20" y="980.10" width="18.60" height="18.70" fill="url(#nz)" stroke="#34343a" stroke-width="1.6"/>
<text transform="translate(1824.40,958.40) scale(1,1.11)" font-size="12.3" font-weight="bold" text-anchor="start" fill="#111">Step 8</text>
<path d="M1840.20 998.90A14.6 14.6 0 1 1 1854.80 984.30" stroke="#1d1d1d" stroke-width="3.6" fill="none"/>
<line x1="1833.06" y1="977.16" x2="1826.69" y2="970.79" stroke="#8f8f8f" stroke-width="7"/>
<line x1="1839.99" y1="984.09" x2="1829.59" y2="973.69" stroke="#1d1d1d" stroke-width="3" stroke-linecap="round"/>
<path d="M1828.20 963.90L1828.20 971.80L1820.20 971.80Z" fill="#1d1d1d"/>
<text transform="translate(1843.90,1000.70) scale(1,1.03)" font-size="13.2" font-weight="normal" text-anchor="start" fill="#111" stroke="#111" stroke-width="0.4">0.00</text>
<rect x="1879.20" y="953.10" width="18.60" height="18.70" fill="#cfbee4" stroke="#464646" stroke-width="1.6"/>
<rect x="1879.20" y="980.10" width="18.60" height="18.70" fill="url(#nz)" stroke="#34343a" stroke-width="1.6"/>
<text transform="translate(1914.40,958.40) scale(1,1.11)" font-size="12.3" font-weight="bold" text-anchor="start" fill="#111">Step 9</text>
<path d="M1930.20 998.90A14.6 14.6 0 1 1 1944.80 984.30" stroke="#1d1d1d" stroke-width="3.6" fill="none"/>
<line x1="1923.06" y1="977.16" x2="1916.69" y2="970.79" stroke="#8f8f8f" stroke-width="7"/>
<line x1="1929.99" y1="984.09" x2="1919.59" y2="973.69" stroke="#1d1d1d" stroke-width="3" stroke-linecap="round"/>
<path d="M1918.20 963.90L1918.20 971.80L1910.20 971.80Z" fill="#1d1d1d"/>
<text transform="translate(1933.90,1000.70) scale(1,1.03)" font-size="13.2" font-weight="normal" text-anchor="start" fill="#111" stroke="#111" stroke-width="0.4">0.00</text>
<rect x="1969.20" y="953.10" width="18.60" height="18.70" fill="#cfbee4" stroke="#464646" stroke-width="1.6"/>
<rect x="1969.20" y="980.10" width="18.60" height="18.70" fill="url(#nz)" stroke="#34343a" stroke-width="1.6"/>
<text transform="translate(224.00,1088.10) scale(1,1.01)" font-size="14.4" font-weight="normal" text-anchor="start" fill="#222" stroke="#222" stroke-width="0.25">First Position Offset Seqencer</text>
<path d="M236.90 1127.80A14.6 14.6 0 1 1 251.50 1113.20" stroke="#1d1d1d" stroke-width="3.6" fill="none"/>
<line x1="236.90" y1="1123.30" x2="236.90" y2="1132.30" stroke="#8f8f8f" stroke-width="7"/>
<line x1="236.90" y1="1113.50" x2="236.90" y2="1128.20" stroke="#1d1d1d" stroke-width="3" stroke-linecap="round"/>
<text transform="translate(240.40,1127.50) scale(1,1.11)" font-size="13" font-weight="bold" text-anchor="start" fill="#111">0.00 %</text>
<rect x="223.20" y="1138.60" width="40.50" height="19.00" fill="#dcdcdc" stroke="#464646" stroke-width="1.6"/>
<text transform="translate(226.00,1153.90) scale(1,1.03)" font-size="15.5" font-weight="normal" text-anchor="start" fill="#000" stroke="#000" stroke-width="0.15">1</text>
<path d="M249.10 1144.80L259.90 1144.80L254.50 1151.80Z" fill="#000"/>
<text transform="translate(294.40,1111.70) scale(1,1.11)" font-size="12.3" font-weight="bold" text-anchor="start" fill="#111">Step 1</text>
<path d="M310.20 1152.20A14.6 14.6 0 1 1 324.80 1137.60" stroke="#1d1d1d" stroke-width="3.6" fill="none"/>
<line x1="303.06" y1="1130.46" x2="296.69" y2="1124.09" stroke="#8f8f8f" stroke-width="7"/>
<line x1="309.99" y1="1137.39" x2="299.59" y2="1126.99" stroke="#1d1d1d" stroke-width="3" stroke-linecap="round"/>
<path d="M298.20 1117.20L298.20 1125.10L290.20 1125.10Z" fill="#1d1d1d"/>
<text transform="translate(313.90,1154.00) scale(1,1.03)" font-size="13.2" font-weight="normal" text-anchor="start" fill="#111" stroke="#111" stroke-width="0.4">0.00</text>
<rect x="349.20" y="1106.40" width="18.60" height="18.70" fill="#cfbee4" stroke="#464646" stroke-width="1.6"/>
<rect x="349.20" y="1133.40" width="18.60" height="18.70" fill="url(#nz)" stroke="#34343a" stroke-width="1.6"/>
<text transform="translate(384.40,1111.70) scale(1,1.11)" font-size="12.3" font-weight="bold" text-anchor="start" fill="#111">Step 2</text>
<path d="M400.20 1152.20A14.6 14.6 0 1 1 414.80 1137.60" stroke="#1d1d1d" stroke-width="3.6" fill="none"/>
<line x1="393.06" y1="1130.46" x2="386.69" y2="1124.09" stroke="#8f8f8f" stroke-width="7"/>
<line x1="399.99" y1="1137.39" x2="389.59" y2="1126.99" stroke="#1d1d1d" stroke-width="3" stroke-linecap="round"/>
<path d="M388.20 1117.20L388.20 1125.10L380.20 1125.10Z" fill="#1d1d1d"/>
<text transform="translate(403.90,1154.00) scale(1,1.03)" font-size="13.2" font-weight="normal" text-anchor="start" fill="#111" stroke="#111" stroke-width="0.4">0.00</text>
<rect x="439.20" y="1106.40" width="18.60" height="18.70" fill="#cfbee4" stroke="#464646" stroke-width="1.6"/>
<rect x="439.20" y="1133.40" width="18.60" height="18.70" fill="url(#nz)" stroke="#34343a" stroke-width="1.6"/>
<text transform="translate(474.40,1111.70) scale(1,1.11)" font-size="12.3" font-weight="bold" text-anchor="start" fill="#111">Step 3</text>
<path d="M490.20 1152.20A14.6 14.6 0 1 1 504.80 1137.60" stroke="#1d1d1d" stroke-width="3.6" fill="none"/>
<line x1="483.06" y1="1130.46" x2="476.69" y2="1124.09" stroke="#8f8f8f" stroke-width="7"/>
<line x1="489.99" y1="1137.39" x2="479.59" y2="1126.99" stroke="#1d1d1d" stroke-width="3" stroke-linecap="round"/>
<path d="M478.20 1117.20L478.20 1125.10L470.20 1125.10Z" fill="#1d1d1d"/>
<text transform="translate(493.90,1154.00) scale(1,1.03)" font-size="13.2" font-weight="normal" text-anchor="start" fill="#111" stroke="#111" stroke-width="0.4">0.00</text>
<rect x="529.20" y="1106.40" width="18.60" height="18.70" fill="#cfbee4" stroke="#464646" stroke-width="1.6"/>
<rect x="529.20" y="1133.40" width="18.60" height="18.70" fill="url(#nz)" stroke="#34343a" stroke-width="1.6"/>
<text transform="translate(564.40,1111.70) scale(1,1.11)" font-size="12.3" font-weight="bold" text-anchor="start" fill="#111">Step 4</text>
<path d="M580.20 1152.20A14.6 14.6 0 1 1 594.80 1137.60" stroke="#1d1d1d" stroke-width="3.6" fill="none"/>
<line x1="571.13" y1="1133.16" x2="563.05" y2="1129.20" stroke="#8f8f8f" stroke-width="7"/>
<path d="M567.09 1131.18A14.6 14.6 0 0 1 569.88 1127.28" stroke="#cfbee4" stroke-width="3.6" fill="none"/>
<line x1="579.93" y1="1137.47" x2="566.73" y2="1131.00" stroke="#1d1d1d" stroke-width="3" stroke-linecap="round"/>
<path d="M568.20 1117.20L568.20 1125.10L560.20 1125.10Z" fill="#cfbee4"/>
<text transform="translate(583.90,1154.00) scale(1,1.03)" font-size="13.2" font-weight="normal" text-anchor="start" fill="#111" stroke="#111" stroke-width="0.4">-0.14</text>
<rect x="619.20" y="1106.40" width="18.60" height="18.70" fill="#cfbee4" stroke="#464646" stroke-width="1.6"/>
<rect x="619.20" y="1133.40" width="18.60" height="18.70" fill="url(#nz)" stroke="#34343a" stroke-width="1.6"/>
<text transform="translate(654.40,1111.70) scale(1,1.11)" font-size="12.3" font-weight="bold" text-anchor="start" fill="#111">Step 5</text>
<path d="M670.20 1152.20A14.6 14.6 0 1 1 684.80 1137.60" stroke="#1d1d1d" stroke-width="3.6" fill="none"/>
<line x1="674.07" y1="1128.27" x2="677.51" y2="1119.95" stroke="#8f8f8f" stroke-width="7"/>
<path d="M659.88 1127.28A14.6 14.6 0 0 1 675.79 1124.11" stroke="#cfbee4" stroke-width="3.6" fill="none"/>
<line x1="670.31" y1="1137.32" x2="675.94" y2="1123.74" stroke="#1d1d1d" stroke-width="3" stroke-linecap="round"/>
<path d="M658.20 1117.20L658.20 1125.10L650.20 1125.10Z" fill="#cfbee4"/>
<text transform="translate(673.90,1154.00) scale(1,1.03)" font-size="13.2" font-weight="normal" text-anchor="start" fill="#111" stroke="#111" stroke-width="0.4">0.50</text>
<rect x="709.20" y="1106.40" width="18.60" height="18.70" fill="#cfbee4" stroke="#464646" stroke-width="1.6"/>
<rect x="709.20" y="1133.40" width="18.60" height="18.70" fill="url(#nz)" stroke="#34343a" stroke-width="1.6"/>
<text transform="translate(744.40,1111.70) scale(1,1.11)" font-size="12.3" font-weight="bold" text-anchor="start" fill="#111">Step 6</text>
<path d="M760.20 1152.20A14.6 14.6 0 1 1 774.80 1137.60" stroke="#1d1d1d" stroke-width="3.6" fill="none"/>
<line x1="753.06" y1="1130.46" x2="746.69" y2="1124.09" stroke="#8f8f8f" stroke-width="7"/>
<line x1="759.99" y1="1137.39" x2="749.59" y2="1126.99" stroke="#1d1d1d" stroke-width="3" stroke-linecap="round"/>
<path d="M748.20 1117.20L748.20 1125.10L740.20 1125.10Z" fill="#1d1d1d"/>
<text transform="translate(763.90,1154.00) scale(1,1.03)" font-size="13.2" font-weight="normal" text-anchor="start" fill="#111" stroke="#111" stroke-width="0.4">0.00</text>
<rect x="799.20" y="1106.40" width="18.60" height="18.70" fill="#cfbee4" stroke="#464646" stroke-width="1.6"/>
<rect x="799.20" y="1133.40" width="18.60" height="18.70" fill="url(#nz)" stroke="#34343a" stroke-width="1.6"/>
<text transform="translate(834.40,1111.70) scale(1,1.11)" font-size="12.3" font-weight="bold" text-anchor="start" fill="#111">Step 7</text>
<path d="M850.20 1152.20A14.6 14.6 0 1 1 864.80 1137.60" stroke="#1d1d1d" stroke-width="3.6" fill="none"/>
<line x1="843.06" y1="1130.46" x2="836.69" y2="1124.09" stroke="#8f8f8f" stroke-width="7"/>
<line x1="849.99" y1="1137.39" x2="839.59" y2="1126.99" stroke="#1d1d1d" stroke-width="3" stroke-linecap="round"/>
<path d="M838.20 1117.20L838.20 1125.10L830.20 1125.10Z" fill="#1d1d1d"/>
<text transform="translate(853.90,1154.00) scale(1,1.03)" font-size="13.2" font-weight="normal" text-anchor="start" fill="#111" stroke="#111" stroke-width="0.4">0.00</text>
<rect x="889.20" y="1106.40" width="18.60" height="18.70" fill="#cfbee4" stroke="#464646" stroke-width="1.6"/>
<rect x="889.20" y="1133.40" width="18.60" height="18.70" fill="#241e50" stroke="#34343a" stroke-width="1.6"/>
<text transform="translate(924.40,1111.70) scale(1,1.11)" font-size="12.3" font-weight="bold" text-anchor="start" fill="#111">Step 8</text>
<path d="M940.20 1152.20A14.6 14.6 0 1 1 954.80 1137.60" stroke="#1d1d1d" stroke-width="3.6" fill="none"/>
<line x1="933.06" y1="1130.46" x2="926.69" y2="1124.09" stroke="#8f8f8f" stroke-width="7"/>
<line x1="939.99" y1="1137.39" x2="929.59" y2="1126.99" stroke="#1d1d1d" stroke-width="3" stroke-linecap="round"/>
<path d="M928.20 1117.20L928.20 1125.10L920.20 1125.10Z" fill="#1d1d1d"/>
<text transform="translate(943.90,1154.00) scale(1,1.03)" font-size="13.2" font-weight="normal" text-anchor="start" fill="#111" stroke="#111" stroke-width="0.4">0.00</text>
<rect x="979.20" y="1106.40" width="18.60" height="18.70" fill="#cfbee4" stroke="#464646" stroke-width="1.6"/>
<rect x="979.20" y="1133.40" width="18.60" height="18.70" fill="url(#nz)" stroke="#34343a" stroke-width="1.6"/>
<text transform="translate(1014.40,1111.70) scale(1,1.11)" font-size="12.3" font-weight="bold" text-anchor="start" fill="#111">Step 9</text>
<path d="M1030.20 1152.20A14.6 14.6 0 1 1 1044.80 1137.60" stroke="#1d1d1d" stroke-width="3.6" fill="none"/>
<line x1="1023.06" y1="1130.46" x2="1016.69" y2="1124.09" stroke="#8f8f8f" stroke-width="7"/>
<line x1="1029.99" y1="1137.39" x2="1019.59" y2="1126.99" stroke="#1d1d1d" stroke-width="3" stroke-linecap="round"/>
<path d="M1018.20 1117.20L1018.20 1125.10L1010.20 1125.10Z" fill="#1d1d1d"/>
<text transform="translate(1033.90,1154.00) scale(1,1.03)" font-size="13.2" font-weight="normal" text-anchor="start" fill="#111" stroke="#111" stroke-width="0.4">0.00</text>
<rect x="1069.20" y="1106.40" width="18.60" height="18.70" fill="#cfbee4" stroke="#464646" stroke-width="1.6"/>
<rect x="1069.20" y="1133.40" width="18.60" height="18.70" fill="url(#nz)" stroke="#34343a" stroke-width="1.6"/>
<text transform="translate(224.00,1180.40) scale(1,1.01)" font-size="14.4" font-weight="normal" text-anchor="start" fill="#222" stroke="#222" stroke-width="0.25">Second Position Offset Seqencer</text>
<path d="M236.90 1220.10A14.6 14.6 0 1 1 251.50 1205.50" stroke="#1d1d1d" stroke-width="3.6" fill="none"/>
<line x1="227.17" y1="1208.20" x2="218.49" y2="1210.60" stroke="#8f8f8f" stroke-width="7"/>
<path d="M236.90 1220.10A14.6 14.6 0 0 1 222.83 1209.40" stroke="#cfbee4" stroke-width="3.6" fill="none"/>
<line x1="236.61" y1="1205.58" x2="222.44" y2="1209.50" stroke="#1d1d1d" stroke-width="3" stroke-linecap="round"/>
<text transform="translate(240.40,1219.80) scale(1,1.11)" font-size="13" font-weight="bold" text-anchor="start" fill="#111">27.6 %</text>
<rect x="223.20" y="1230.90" width="40.50" height="19.00" fill="#dcdcdc" stroke="#464646" stroke-width="1.6"/>
<text transform="translate(226.00,1246.20) scale(1,1.03)" font-size="15.5" font-weight="normal" text-anchor="start" fill="#000" stroke="#000" stroke-width="0.15">1</text>
<path d="M249.10 1237.10L259.90 1237.10L254.50 1244.10Z" fill="#000"/>
<text transform="translate(294.40,1204.00) scale(1,1.11)" font-size="12.3" font-weight="bold" text-anchor="start" fill="#111">Step 1</text>
<path d="M310.20 1244.50A14.6 14.6 0 1 1 324.80 1229.90" stroke="#1d1d1d" stroke-width="3.6" fill="none"/>
<line x1="303.06" y1="1222.76" x2="296.69" y2="1216.39" stroke="#8f8f8f" stroke-width="7"/>
<line x1="309.99" y1="1229.69" x2="299.59" y2="1219.29" stroke="#1d1d1d" stroke-width="3" stroke-linecap="round"/>
<path d="M298.20 1209.50L298.20 1217.40L290.20 1217.40Z" fill="#1d1d1d"/>
<text transform="translate(313.90,1246.30) scale(1,1.03)" font-size="13.2" font-weight="normal" text-anchor="start" fill="#111" stroke="#111" stroke-width="0.4">0.00</text>
<rect x="349.20" y="1198.70" width="18.60" height="18.70" fill="#cfbee4" stroke="#464646" stroke-width="1.6"/>
<rect x="349.20" y="1225.70" width="18.60" height="18.70" fill="url(#nz)" stroke="#34343a" stroke-width="1.6"/>
<text transform="translate(384.40,1204.00) scale(1,1.11)" font-size="12.3" font-weight="bold" text-anchor="start" fill="#111">Step 2</text>
<path d="M400.20 1244.50A14.6 14.6 0 1 1 414.80 1229.90" stroke="#1d1d1d" stroke-width="3.6" fill="none"/>
<line x1="393.06" y1="1222.76" x2="386.69" y2="1216.39" stroke="#8f8f8f" stroke-width="7"/>
<line x1="399.99" y1="1229.69" x2="389.59" y2="1219.29" stroke="#1d1d1d" stroke-width="3" stroke-linecap="round"/>
<path d="M388.20 1209.50L388.20 1217.40L380.20 1217.40Z" fill="#1d1d1d"/>
<text transform="translate(403.90,1246.30) scale(1,1.03)" font-size="13.2" font-weight="normal" text-anchor="start" fill="#111" stroke="#111" stroke-width="0.4">0.00</text>
<rect x="439.20" y="1198.70" width="18.60" height="18.70" fill="#cfbee4" stroke="#464646" stroke-width="1.6"/>
<rect x="439.20" y="1225.70" width="18.60" height="18.70" fill="url(#nz)" stroke="#34343a" stroke-width="1.6"/>
<text transform="translate(474.40,1204.00) scale(1,1.11)" font-size="12.3" font-weight="bold" text-anchor="start" fill="#111">Step 3</text>
<path d="M490.20 1244.50A14.6 14.6 0 1 1 504.80 1229.90" stroke="#1d1d1d" stroke-width="3.6" fill="none"/>
<line x1="483.06" y1="1222.76" x2="476.69" y2="1216.39" stroke="#8f8f8f" stroke-width="7"/>
<line x1="489.99" y1="1229.69" x2="479.59" y2="1219.29" stroke="#1d1d1d" stroke-width="3" stroke-linecap="round"/>
<path d="M478.20 1209.50L478.20 1217.40L470.20 1217.40Z" fill="#1d1d1d"/>
<text transform="translate(493.90,1246.30) scale(1,1.03)" font-size="13.2" font-weight="normal" text-anchor="start" fill="#111" stroke="#111" stroke-width="0.4">0.00</text>
<rect x="529.20" y="1198.70" width="18.60" height="18.70" fill="#cfbee4" stroke="#464646" stroke-width="1.6"/>
<rect x="529.20" y="1225.70" width="18.60" height="18.70" fill="url(#nz)" stroke="#34343a" stroke-width="1.6"/>
<text transform="translate(564.40,1204.00) scale(1,1.11)" font-size="12.3" font-weight="bold" text-anchor="start" fill="#111">Step 4</text>
<path d="M580.20 1244.50A14.6 14.6 0 1 1 594.80 1229.90" stroke="#1d1d1d" stroke-width="3.6" fill="none"/>
<line x1="573.06" y1="1222.76" x2="566.69" y2="1216.39" stroke="#8f8f8f" stroke-width="7"/>
<line x1="579.99" y1="1229.69" x2="569.59" y2="1219.29" stroke="#1d1d1d" stroke-width="3" stroke-linecap="round"/>
<path d="M568.20 1209.50L568.20 1217.40L560.20 1217.40Z" fill="#1d1d1d"/>
<text transform="translate(583.90,1246.30) scale(1,1.03)" font-size="13.2" font-weight="normal" text-anchor="start" fill="#111" stroke="#111" stroke-width="0.4">0.00</text>
<rect x="619.20" y="1198.70" width="18.60" height="18.70" fill="#cfbee4" stroke="#464646" stroke-width="1.6"/>
<rect x="619.20" y="1225.70" width="18.60" height="18.70" fill="#22902e" stroke="#34343a" stroke-width="1.6"/>
<text transform="translate(654.40,1204.00) scale(1,1.11)" font-size="12.3" font-weight="bold" text-anchor="start" fill="#111">Step 5</text>
<path d="M670.20 1244.50A14.6 14.6 0 1 1 684.80 1229.90" stroke="#1d1d1d" stroke-width="3.6" fill="none"/>
<line x1="663.06" y1="1222.76" x2="656.69" y2="1216.39" stroke="#8f8f8f" stroke-width="7"/>
<line x1="669.99" y1="1229.69" x2="659.59" y2="1219.29" stroke="#1d1d1d" stroke-width="3" stroke-linecap="round"/>
<path d="M658.20 1209.50L658.20 1217.40L650.20 1217.40Z" fill="#1d1d1d"/>
<text transform="translate(673.90,1246.30) scale(1,1.03)" font-size="13.2" font-weight="normal" text-anchor="start" fill="#111" stroke="#111" stroke-width="0.4">0.00</text>
<rect x="709.20" y="1198.70" width="18.60" height="18.70" fill="#cfbee4" stroke="#464646" stroke-width="1.6"/>
<rect x="709.20" y="1225.70" width="18.60" height="18.70" fill="url(#nz)" stroke="#34343a" stroke-width="1.6"/>
<text transform="translate(744.40,1204.00) scale(1,1.11)" font-size="12.3" font-weight="bold" text-anchor="start" fill="#111">Step 6</text>
<path d="M760.20 1244.50A14.6 14.6 0 1 1 774.80 1229.90" stroke="#1d1d1d" stroke-width="3.6" fill="none"/>
<line x1="753.06" y1="1222.76" x2="746.69" y2="1216.39" stroke="#8f8f8f" stroke-width="7"/>
<line x1="759.99" y1="1229.69" x2="749.59" y2="1219.29" stroke="#1d1d1d" stroke-width="3" stroke-linecap="round"/>
<path d="M748.20 1209.50L748.20 1217.40L740.20 1217.40Z" fill="#1d1d1d"/>
<text transform="translate(763.90,1246.30) scale(1,1.03)" font-size="13.2" font-weight="normal" text-anchor="start" fill="#111" stroke="#111" stroke-width="0.4">0.00</text>
<rect x="799.20" y="1198.70" width="18.60" height="18.70" fill="#cfbee4" stroke="#464646" stroke-width="1.6"/>
<rect x="799.20" y="1225.70" width="18.60" height="18.70" fill="url(#nz)" stroke="#34343a" stroke-width="1.6"/>
<text transform="translate(834.40,1204.00) scale(1,1.11)" font-size="12.3" font-weight="bold" text-anchor="start" fill="#111">Step 7</text>
<path d="M850.20 1244.50A14.6 14.6 0 1 1 864.80 1229.90" stroke="#1d1d1d" stroke-width="3.6" fill="none"/>
<line x1="843.06" y1="1222.76" x2="836.69" y2="1216.39" stroke="#8f8f8f" stroke-width="7"/>
<line x1="849.99" y1="1229.69" x2="839.59" y2="1219.29" stroke="#1d1d1d" stroke-width="3" stroke-linecap="round"/>
<path d="M838.20 1209.50L838.20 1217.40L830.20 1217.40Z" fill="#1d1d1d"/>
<text transform="translate(853.90,1246.30) scale(1,1.03)" font-size="13.2" font-weight="normal" text-anchor="start" fill="#111" stroke="#111" stroke-width="0.4">0.00</text>
<rect x="889.20" y="1198.70" width="18.60" height="18.70" fill="#cfbee4" stroke="#464646" stroke-width="1.6"/>
<rect x="889.20" y="1225.70" width="18.60" height="18.70" fill="url(#nz)" stroke="#34343a" stroke-width="1.6"/>
<text transform="translate(924.40,1204.00) scale(1,1.11)" font-size="12.3" font-weight="bold" text-anchor="start" fill="#111">Step 8</text>
<path d="M940.20 1244.50A14.6 14.6 0 1 1 954.80 1229.90" stroke="#1d1d1d" stroke-width="3.6" fill="none"/>
<line x1="933.06" y1="1222.76" x2="926.69" y2="1216.39" stroke="#8f8f8f" stroke-width="7"/>
<line x1="939.99" y1="1229.69" x2="929.59" y2="1219.29" stroke="#1d1d1d" stroke-width="3" stroke-linecap="round"/>
<path d="M928.20 1209.50L928.20 1217.40L920.20 1217.40Z" fill="#1d1d1d"/>
<text transform="translate(943.90,1246.30) scale(1,1.03)" font-size="13.2" font-weight="normal" text-anchor="start" fill="#111" stroke="#111" stroke-width="0.4">0.00</text>
<rect x="979.20" y="1198.70" width="18.60" height="18.70" fill="#cfbee4" stroke="#464646" stroke-width="1.6"/>
<rect x="979.20" y="1225.70" width="18.60" height="18.70" fill="url(#nz)" stroke="#34343a" stroke-width="1.6"/>
<text transform="translate(1014.40,1204.00) scale(1,1.11)" font-size="12.3" font-weight="bold" text-anchor="start" fill="#111">Step 9</text>
<path d="M1030.20 1244.50A14.6 14.6 0 1 1 1044.80 1229.90" stroke="#1d1d1d" stroke-width="3.6" fill="none"/>
<line x1="1023.06" y1="1222.76" x2="1016.69" y2="1216.39" stroke="#8f8f8f" stroke-width="7"/>
<line x1="1029.99" y1="1229.69" x2="1019.59" y2="1219.29" stroke="#1d1d1d" stroke-width="3" stroke-linecap="round"/>
<path d="M1018.20 1209.50L1018.20 1217.40L1010.20 1217.40Z" fill="#1d1d1d"/>
<text transform="translate(1033.90,1246.30) scale(1,1.03)" font-size="13.2" font-weight="normal" text-anchor="start" fill="#111" stroke="#111" stroke-width="0.4">0.00</text>
<rect x="1069.20" y="1198.70" width="18.60" height="18.70" fill="#cfbee4" stroke="#464646" stroke-width="1.6"/>
<rect x="1069.20" y="1225.70" width="18.60" height="18.70" fill="url(#nz)" stroke="#34343a" stroke-width="1.6"/>
<text transform="translate(1124.00,1088.10) scale(1,1.01)" font-size="14.4" font-weight="normal" text-anchor="start" fill="#222" stroke="#222" stroke-width="0.25">First Size Seqencer</text>
<path d="M1136.90 1127.80A14.6 14.6 0 1 1 1151.50 1113.20" stroke="#1d1d1d" stroke-width="3.6" fill="none"/>
<line x1="1135.92" y1="1103.15" x2="1135.04" y2="1094.19" stroke="#8f8f8f" stroke-width="7"/>
<path d="M1136.90 1127.80A14.6 14.6 0 0 1 1135.48 1098.67" stroke="#cfbee4" stroke-width="3.6" fill="none"/>
<line x1="1136.87" y1="1112.90" x2="1135.44" y2="1098.27" stroke="#1d1d1d" stroke-width="3" stroke-linecap="round"/>
<text transform="translate(1140.40,1127.50) scale(1,1.11)" font-size="13" font-weight="bold" text-anchor="start" fill="#111">64.6 %</text>
<rect x="1123.20" y="1138.60" width="40.50" height="19.00" fill="#dcdcdc" stroke="#464646" stroke-width="1.6"/>
<text transform="translate(1126.00,1153.90) scale(1,1.03)" font-size="15.5" font-weight="normal" text-anchor="start" fill="#000" stroke="#000" stroke-width="0.15">1</text>
<path d="M1149.10 1144.80L1159.90 1144.80L1154.50 1151.80Z" fill="#000"/>
<text transform="translate(1194.40,1111.70) scale(1,1.11)" font-size="12.3" font-weight="bold" text-anchor="start" fill="#111">Step 1</text>
<path d="M1210.20 1152.20A14.6 14.6 0 1 1 1224.80 1137.60" stroke="#1d1d1d" stroke-width="3.6" fill="none"/>
<line x1="1207.53" y1="1127.86" x2="1205.16" y2="1119.18" stroke="#8f8f8f" stroke-width="7"/>
<path d="M1199.88 1127.28A14.6 14.6 0 0 1 1206.35 1123.52" stroke="#cfbee4" stroke-width="3.6" fill="none"/>
<line x1="1210.12" y1="1137.31" x2="1206.24" y2="1123.13" stroke="#1d1d1d" stroke-width="3" stroke-linecap="round"/>
<path d="M1198.20 1117.20L1198.20 1125.10L1190.20 1125.10Z" fill="#cfbee4"/>
<text transform="translate(1213.90,1154.00) scale(1,1.03)" font-size="13.2" font-weight="normal" text-anchor="start" fill="#111" stroke="#111" stroke-width="0.4">0.22</text>
<rect x="1249.20" y="1106.40" width="18.60" height="18.70" fill="#cfbee4" stroke="#464646" stroke-width="1.6"/>
<rect x="1249.20" y="1133.40" width="18.60" height="18.70" fill="url(#nz)" stroke="#34343a" stroke-width="1.6"/>
<text transform="translate(1284.40,1111.70) scale(1,1.11)" font-size="12.3" font-weight="bold" text-anchor="start" fill="#111">Step 2</text>
<path d="M1300.20 1152.20A14.6 14.6 0 1 1 1314.80 1137.60" stroke="#1d1d1d" stroke-width="3.6" fill="none"/>
<line x1="1293.06" y1="1130.46" x2="1286.69" y2="1124.09" stroke="#8f8f8f" stroke-width="7"/>
<line x1="1299.99" y1="1137.39" x2="1289.59" y2="1126.99" stroke="#1d1d1d" stroke-width="3" stroke-linecap="round"/>
<path d="M1288.20 1117.20L1288.20 1125.10L1280.20 1125.10Z" fill="#1d1d1d"/>
<text transform="translate(1303.90,1154.00) scale(1,1.03)" font-size="13.2" font-weight="normal" text-anchor="start" fill="#111" stroke="#111" stroke-width="0.4">0.00</text>
<rect x="1339.20" y="1106.40" width="18.60" height="18.70" fill="#cfbee4" stroke="#464646" stroke-width="1.6"/>
<rect x="1339.20" y="1133.40" width="18.60" height="18.70" fill="url(#nz)" stroke="#34343a" stroke-width="1.6"/>
<text transform="translate(1374.40,1111.70) scale(1,1.11)" font-size="12.3" font-weight="bold" text-anchor="start" fill="#111">Step 3</text>
<path d="M1390.20 1152.20A14.6 14.6 0 1 1 1404.80 1137.60" stroke="#1d1d1d" stroke-width="3.6" fill="none"/>
<line x1="1383.06" y1="1130.46" x2="1376.69" y2="1124.09" stroke="#8f8f8f" stroke-width="7"/>
<line x1="1389.99" y1="1137.39" x2="1379.59" y2="1126.99" stroke="#1d1d1d" stroke-width="3" stroke-linecap="round"/>
<path d="M1378.20 1117.20L1378.20 1125.10L1370.20 1125.10Z" fill="#1d1d1d"/>
<text transform="translate(1393.90,1154.00) scale(1,1.03)" font-size="13.2" font-weight="normal" text-anchor="start" fill="#111" stroke="#111" stroke-width="0.4">0.00</text>
<rect x="1429.20" y="1106.40" width="18.60" height="18.70" fill="#cfbee4" stroke="#464646" stroke-width="1.6"/>
<rect x="1429.20" y="1133.40" width="18.60" height="18.70" fill="url(#nz)" stroke="#34343a" stroke-width="1.6"/>
<text transform="translate(1464.40,1111.70) scale(1,1.11)" font-size="12.3" font-weight="bold" text-anchor="start" fill="#111">Step 4</text>
<path d="M1480.20 1152.20A14.6 14.6 0 1 1 1494.80 1137.60" stroke="#1d1d1d" stroke-width="3.6" fill="none"/>
<line x1="1473.06" y1="1130.46" x2="1466.69" y2="1124.09" stroke="#8f8f8f" stroke-width="7"/>
<line x1="1479.99" y1="1137.39" x2="1469.59" y2="1126.99" stroke="#1d1d1d" stroke-width="3" stroke-linecap="round"/>
<path d="M1468.20 1117.20L1468.20 1125.10L1460.20 1125.10Z" fill="#1d1d1d"/>
<text transform="translate(1483.90,1154.00) scale(1,1.03)" font-size="13.2" font-weight="normal" text-anchor="start" fill="#111" stroke="#111" stroke-width="0.4">0.00</text>
<rect x="1519.20" y="1106.40" width="18.60" height="18.70" fill="#cfbee4" stroke="#464646" stroke-width="1.6"/>
<rect x="1519.20" y="1133.40" width="18.60" height="18.70" fill="#e840e8" stroke="#34343a" stroke-width="1.6"/>
<text transform="translate(1554.40,1111.70) scale(1,1.11)" font-size="12.3" font-weight="bold" text-anchor="start" fill="#111">Step 5</text>
<path d="M1570.20 1152.20A14.6 14.6 0 1 1 1584.80 1137.60" stroke="#1d1d1d" stroke-width="3.6" fill="none"/>
<line x1="1563.06" y1="1130.46" x2="1556.69" y2="1124.09" stroke="#8f8f8f" stroke-width="7"/>
<line x1="1569.99" y1="1137.39" x2="1559.59" y2="1126.99" stroke="#1d1d1d" stroke-width="3" stroke-linecap="round"/>
<path d="M1558.20 1117.20L1558.20 1125.10L1550.20 1125.10Z" fill="#1d1d1d"/>
<text transform="translate(1573.90,1154.00) scale(1,1.03)" font-size="13.2" font-weight="normal" text-anchor="start" fill="#111" stroke="#111" stroke-width="0.4">0.00</text>
<rect x="1609.20" y="1106.40" width="18.60" height="18.70" fill="#cfbee4" stroke="#464646" stroke-width="1.6"/>
<rect x="1609.20" y="1133.40" width="18.60" height="18.70" fill="url(#nz)" stroke="#34343a" stroke-width="1.6"/>
<text transform="translate(1644.40,1111.70) scale(1,1.11)" font-size="12.3" font-weight="bold" text-anchor="start" fill="#111">Step 6</text>
<path d="M1660.20 1152.20A14.6 14.6 0 1 1 1674.80 1137.60" stroke="#1d1d1d" stroke-width="3.6" fill="none"/>
<line x1="1653.06" y1="1130.46" x2="1646.69" y2="1124.09" stroke="#8f8f8f" stroke-width="7"/>
<line x1="1659.99" y1="1137.39" x2="1649.59" y2="1126.99" stroke="#1d1d1d" stroke-width="3" stroke-linecap="round"/>
<path d="M1648.20 1117.20L1648.20 1125.10L1640.20 1125.10Z" fill="#1d1d1d"/>
<text transform="translate(1663.90,1154.00) scale(1,1.03)" font-size="13.2" font-weight="normal" text-anchor="start" fill="#111" stroke="#111" stroke-width="0.4">0.00</text>
<rect x="1699.20" y="1106.40" width="18.60" height="18.70" fill="#cfbee4" stroke="#464646" stroke-width="1.6"/>
<rect x="1699.20" y="1133.40" width="18.60" height="18.70" fill="url(#nz)" stroke="#34343a" stroke-width="1.6"/>
<text transform="translate(1734.40,1111.70) scale(1,1.11)" font-size="12.3" font-weight="bold" text-anchor="start" fill="#111">Step 7</text>
<path d="M1750.20 1152.20A14.6 14.6 0 1 1 1764.80 1137.60" stroke="#1d1d1d" stroke-width="3.6" fill="none"/>
<line x1="1743.06" y1="1130.46" x2="1736.69" y2="1124.09" stroke="#8f8f8f" stroke-width="7"/>
<line x1="1749.99" y1="1137.39" x2="1739.59" y2="1126.99" stroke="#1d1d1d" stroke-width="3" stroke-linecap="round"/>
<path d="M1738.20 1117.20L1738.20 1125.10L1730.20 1125.10Z" fill="#1d1d1d"/>
<text transform="translate(1753.90,1154.00) scale(1,1.03)" font-size="13.2" font-weight="normal" text-anchor="start" fill="#111" stroke="#111" stroke-width="0.4">0.00</text>
<rect x="1789.20" y="1106.40" width="18.60" height="18.70" fill="#cfbee4" stroke="#464646" stroke-width="1.6"/>
<rect x="1789.20" y="1133.40" width="18.60" height="18.70" fill="url(#nz)" stroke="#34343a" stroke-width="1.6"/>
<text transform="translate(1824.40,1111.70) scale(1,1.11)" font-size="12.3" font-weight="bold" text-anchor="start" fill="#111">Step 8</text>
<path d="M1840.20 1152.20A14.6 14.6 0 1 1 1854.80 1137.60" stroke="#1d1d1d" stroke-width="3.6" fill="none"/>
<line x1="1833.06" y1="1130.46" x2="1826.69" y2="1124.09" stroke="#8f8f8f" stroke-width="7"/>
<line x1="1839.99" y1="1137.39" x2="1829.59" y2="1126.99" stroke="#1d1d1d" stroke-width="3" stroke-linecap="round"/>
<path d="M1828.20 1117.20L1828.20 1125.10L1820.20 1125.10Z" fill="#1d1d1d"/>
<text transform="translate(1843.90,1154.00) scale(1,1.03)" font-size="13.2" font-weight="normal" text-anchor="start" fill="#111" stroke="#111" stroke-width="0.4">0.00</text>
<rect x="1879.20" y="1106.40" width="18.60" height="18.70" fill="#cfbee4" stroke="#464646" stroke-width="1.6"/>
<rect x="1879.20" y="1133.40" width="18.60" height="18.70" fill="url(#nz)" stroke="#34343a" stroke-width="1.6"/>
<text transform="translate(1914.40,1111.70) scale(1,1.11)" font-size="12.3" font-weight="bold" text-anchor="start" fill="#111">Step 9</text>
<path d="M1930.20 1152.20A14.6 14.6 0 1 1 1944.80 1137.60" stroke="#1d1d1d" stroke-width="3.6" fill="none"/>
<line x1="1923.06" y1="1130.46" x2="1916.69" y2="1124.09" stroke="#8f8f8f" stroke-width="7"/>
<line x1="1929.99" y1="1137.39" x2="1919.59" y2="1126.99" stroke="#1d1d1d" stroke-width="3" stroke-linecap="round"/>
<path d="M1918.20 1117.20L1918.20 1125.10L1910.20 1125.10Z" fill="#1d1d1d"/>
<text transform="translate(1933.90,1154.00) scale(1,1.03)" font-size="13.2" font-weight="normal" text-anchor="start" fill="#111" stroke="#111" stroke-width="0.4">0.00</text>
<rect x="1969.20" y="1106.40" width="18.60" height="18.70" fill="#cfbee4" stroke="#464646" stroke-width="1.6"/>
<rect x="1969.20" y="1133.40" width="18.60" height="18.70" fill="url(#nz)" stroke="#34343a" stroke-width="1.6"/>
<text transform="translate(1124.00,1180.40) scale(1,1.01)" font-size="14.4" font-weight="normal" text-anchor="start" fill="#222" stroke="#222" stroke-width="0.25">Second Size Seqencer</text>
<path d="M1136.90 1220.10A14.6 14.6 0 1 1 1151.50 1205.50" stroke="#1d1d1d" stroke-width="3.6" fill="none"/>
<line x1="1129.89" y1="1198.22" x2="1123.65" y2="1191.74" stroke="#8f8f8f" stroke-width="7"/>
<path d="M1136.90 1220.10A14.6 14.6 0 0 1 1126.77 1194.98" stroke="#cfbee4" stroke-width="3.6" fill="none"/>
<line x1="1136.69" y1="1205.28" x2="1126.50" y2="1194.70" stroke="#1d1d1d" stroke-width="3" stroke-linecap="round"/>
<text transform="translate(1140.40,1219.80) scale(1,1.11)" font-size="13" font-weight="bold" text-anchor="start" fill="#111">50.4 %</text>
<rect x="1123.20" y="1230.90" width="40.50" height="19.00" fill="#dcdcdc" stroke="#464646" stroke-width="1.6"/>
<text transform="translate(1126.00,1246.20) scale(1,1.03)" font-size="15.5" font-weight="normal" text-anchor="start" fill="#000" stroke="#000" stroke-width="0.15">18</text>
<path d="M1149.10 1237.10L1159.90 1237.10L1154.50 1244.10Z" fill="#000"/>
<text transform="translate(1194.40,1204.00) scale(1,1.11)" font-size="12.3" font-weight="bold" text-anchor="start" fill="#111">Step 1</text>
<path d="M1210.20 1244.50A14.6 14.6 0 1 1 1224.80 1229.90" stroke="#1d1d1d" stroke-width="3.6" fill="none"/>
<line x1="1204.52" y1="1221.55" x2="1199.46" y2="1214.10" stroke="#8f8f8f" stroke-width="7"/>
<path d="M1199.88 1219.58A14.6 14.6 0 0 1 1201.99 1217.82" stroke="#cfbee4" stroke-width="3.6" fill="none"/>
<line x1="1210.03" y1="1229.65" x2="1201.77" y2="1217.49" stroke="#1d1d1d" stroke-width="3" stroke-linecap="round"/>
<path d="M1198.20 1209.50L1198.20 1217.40L1190.20 1217.40Z" fill="#cfbee4"/>
<text transform="translate(1213.90,1246.30) scale(1,1.03)" font-size="13.2" font-weight="normal" text-anchor="start" fill="#111" stroke="#111" stroke-width="0.4">0.08</text>
<rect x="1249.20" y="1198.70" width="18.60" height="18.70" fill="#cfbee4" stroke="#464646" stroke-width="1.6"/>
<rect x="1249.20" y="1225.70" width="18.60" height="18.70" fill="url(#nz)" stroke="#34343a" stroke-width="1.6"/>
<text transform="translate(1284.40,1204.00) scale(1,1.11)" font-size="12.3" font-weight="bold" text-anchor="start" fill="#111">Step 2</text>
<path d="M1300.20 1244.50A14.6 14.6 0 1 1 1314.80 1229.90" stroke="#1d1d1d" stroke-width="3.6" fill="none"/>
<line x1="1293.06" y1="1222.76" x2="1286.69" y2="1216.39" stroke="#8f8f8f" stroke-width="7"/>
<line x1="1299.99" y1="1229.69" x2="1289.59" y2="1219.29" stroke="#1d1d1d" stroke-width="3" stroke-linecap="round"/>
<path d="M1288.20 1209.50L1288.20 1217.40L1280.20 1217.40Z" fill="#1d1d1d"/>
<text transform="translate(1303.90,1246.30) scale(1,1.03)" font-size="13.2" font-weight="normal" text-anchor="start" fill="#111" stroke="#111" stroke-width="0.4">0.00</text>
<rect x="1339.20" y="1198.70" width="18.60" height="18.70" fill="#cfbee4" stroke="#464646" stroke-width="1.6"/>
<rect x="1339.20" y="1225.70" width="18.60" height="18.70" fill="url(#nz)" stroke="#34343a" stroke-width="1.6"/>
<text transform="translate(1374.40,1204.00) scale(1,1.11)" font-size="12.3" font-weight="bold" text-anchor="start" fill="#111">Step 3</text>
<path d="M1390.20 1244.50A14.6 14.6 0 1 1 1404.80 1229.90" stroke="#1d1d1d" stroke-width="3.6" fill="none"/>
<line x1="1383.06" y1="1222.76" x2="1376.69" y2="1216.39" stroke="#8f8f8f" stroke-width="7"/>
<line x1="1389.99" y1="1229.69" x2="1379.59" y2="1219.29" stroke="#1d1d1d" stroke-width="3" stroke-linecap="round"/>
<path d="M1378.20 1209.50L1378.20 1217.40L1370.20 1217.40Z" fill="#1d1d1d"/>
<text transform="translate(1393.90,1246.30) scale(1,1.03)" font-size="13.2" font-weight="normal" text-anchor="start" fill="#111" stroke="#111" stroke-width="0.4">0.00</text>
<rect x="1429.20" y="1198.70" width="18.60" height="18.70" fill="#cfbee4" stroke="#464646" stroke-width="1.6"/>
<rect x="1429.20" y="1225.70" width="18.60" height="18.70" fill="url(#nz)" stroke="#34343a" stroke-width="1.6"/>
<text transform="translate(1464.40,1204.00) scale(1,1.11)" font-size="12.3" font-weight="bold" text-anchor="start" fill="#111">Step 4</text>
<path d="M1480.20 1244.50A14.6 14.6 0 1 1 1494.80 1229.90" stroke="#1d1d1d" stroke-width="3.6" fill="none"/>
<line x1="1471.13" y1="1225.46" x2="1463.05" y2="1221.50" stroke="#8f8f8f" stroke-width="7"/>
<path d="M1467.09 1223.48A14.6 14.6 0 0 1 1469.88 1219.58" stroke="#cfbee4" stroke-width="3.6" fill="none"/>
<line x1="1479.93" y1="1229.77" x2="1466.73" y2="1223.30" stroke="#1d1d1d" stroke-width="3" stroke-linecap="round"/>
<path d="M1468.20 1209.50L1468.20 1217.40L1460.20 1217.40Z" fill="#cfbee4"/>
<text transform="translate(1483.90,1246.30) scale(1,1.03)" font-size="13.2" font-weight="normal" text-anchor="start" fill="#111" stroke="#111" stroke-width="0.4">-0.14</text>
<rect x="1519.20" y="1198.70" width="18.60" height="18.70" fill="#cfbee4" stroke="#464646" stroke-width="1.6"/>
<rect x="1519.20" y="1225.70" width="18.60" height="18.70" fill="url(#nz)" stroke="#34343a" stroke-width="1.6"/>
<text transform="translate(1554.40,1204.00) scale(1,1.11)" font-size="12.3" font-weight="bold" text-anchor="start" fill="#111">Step 5</text>
<path d="M1570.20 1244.50A14.6 14.6 0 1 1 1584.80 1229.90" stroke="#1d1d1d" stroke-width="3.6" fill="none"/>
<line x1="1563.06" y1="1222.76" x2="1556.69" y2="1216.39" stroke="#8f8f8f" stroke-width="7"/>
<line x1="1569.99" y1="1229.69" x2="1559.59" y2="1219.29" stroke="#1d1d1d" stroke-width="3" stroke-linecap="round"/>
<path d="M1558.20 1209.50L1558.20 1217.40L1550.20 1217.40Z" fill="#1d1d1d"/>
<text transform="translate(1573.90,1246.30) scale(1,1.03)" font-size="13.2" font-weight="normal" text-anchor="start" fill="#111" stroke="#111" stroke-width="0.4">0.00</text>
<rect x="1609.20" y="1198.70" width="18.60" height="18.70" fill="#cfbee4" stroke="#464646" stroke-width="1.6"/>
<rect x="1609.20" y="1225.70" width="18.60" height="18.70" fill="#c0b880" stroke="#34343a" stroke-width="1.6"/>
<text transform="translate(1644.40,1204.00) scale(1,1.11)" font-size="12.3" font-weight="bold" text-anchor="start" fill="#111">Step 6</text>
<path d="M1660.20 1244.50A14.6 14.6 0 1 1 1674.80 1229.90" stroke="#1d1d1d" stroke-width="3.6" fill="none"/>
<line x1="1653.06" y1="1222.76" x2="1646.69" y2="1216.39" stroke="#8f8f8f" stroke-width="7"/>
<line x1="1659.99" y1="1229.69" x2="1649.59" y2="1219.29" stroke="#1d1d1d" stroke-width="3" stroke-linecap="round"/>
<path d="M1648.20 1209.50L1648.20 1217.40L1640.20 1217.40Z" fill="#1d1d1d"/>
<text transform="translate(1663.90,1246.30) scale(1,1.03)" font-size="13.2" font-weight="normal" text-anchor="start" fill="#111" stroke="#111" stroke-width="0.4">0.00</text>
<rect x="1699.20" y="1198.70" width="18.60" height="18.70" fill="#cfbee4" stroke="#464646" stroke-width="1.6"/>
<rect x="1699.20" y="1225.70" width="18.60" height="18.70" fill="url(#nz)" stroke="#34343a" stroke-width="1.6"/>
<text transform="translate(1734.40,1204.00) scale(1,1.11)" font-size="12.3" font-weight="bold" text-anchor="start" fill="#111">Step 7</text>
<path d="M1750.20 1244.50A14.6 14.6 0 1 1 1764.80 1229.90" stroke="#1d1d1d" stroke-width="3.6" fill="none"/>
<line x1="1743.06" y1="1222.76" x2="1736.69" y2="1216.39" stroke="#8f8f8f" stroke-width="7"/>
<line x1="1749.99" y1="1229.69" x2="1739.59" y2="1219.29" stroke="#1d1d1d" stroke-width="3" stroke-linecap="round"/>
<path d="M1738.20 1209.50L1738.20 1217.40L1730.20 1217.40Z" fill="#1d1d1d"/>
<text transform="translate(1753.90,1246.30) scale(1,1.03)" font-size="13.2" font-weight="normal" text-anchor="start" fill="#111" stroke="#111" stroke-width="0.4">0.00</text>
<rect x="1789.20" y="1198.70" width="18.60" height="18.70" fill="#cfbee4" stroke="#464646" stroke-width="1.6"/>
<rect x="1789.20" y="1225.70" width="18.60" height="18.70" fill="url(#nz)" stroke="#34343a" stroke-width="1.6"/>
<text transform="translate(1824.40,1204.00) scale(1,1.11)" font-size="12.3" font-weight="bold" text-anchor="start" fill="#111">Step 8</text>
<path d="M1840.20 1244.50A14.6 14.6 0 1 1 1854.80 1229.90" stroke="#1d1d1d" stroke-width="3.6" fill="none"/>
<line x1="1833.06" y1="1222.76" x2="1826.69" y2="1216.39" stroke="#8f8f8f" stroke-width="7"/>
<line x1="1839.99" y1="1229.69" x2="1829.59" y2="1219.29" stroke="#1d1d1d" stroke-width="3" stroke-linecap="round"/>
<path d="M1828.20 1209.50L1828.20 1217.40L1820.20 1217.40Z" fill="#1d1d1d"/>
<text transform="translate(1843.90,1246.30) scale(1,1.03)" font-size="13.2" font-weight="normal" text-anchor="start" fill="#111" stroke="#111" stroke-width="0.4">0.00</text>
<rect x="1879.20" y="1198.70" width="18.60" height="18.70" fill="#cfbee4" stroke="#464646" stroke-width="1.6"/>
<rect x="1879.20" y="1225.70" width="18.60" height="18.70" fill="url(#nz)" stroke="#34343a" stroke-width="1.6"/>
<text transform="translate(1914.40,1204.00) scale(1,1.11)" font-size="12.3" font-weight="bold" text-anchor="start" fill="#111">Step 9</text>
<path d="M1930.20 1244.50A14.6 14.6 0 1 1 1944.80 1229.90" stroke="#1d1d1d" stroke-width="3.6" fill="none"/>
<line x1="1923.06" y1="1222.76" x2="1916.69" y2="1216.39" stroke="#8f8f8f" stroke-width="7"/>
<line x1="1929.99" y1="1229.69" x2="1919.59" y2="1219.29" stroke="#1d1d1d" stroke-width="3" stroke-linecap="round"/>
<path d="M1918.20 1209.50L1918.20 1217.40L1910.20 1217.40Z" fill="#1d1d1d"/>
<text transform="translate(1933.90,1246.30) scale(1,1.03)" font-size="13.2" font-weight="normal" text-anchor="start" fill="#111" stroke="#111" stroke-width="0.4">0.00</text>
<rect x="1969.20" y="1198.70" width="18.60" height="18.70" fill="#cfbee4" stroke="#464646" stroke-width="1.6"/>
<rect x="1969.20" y="1225.70" width="18.60" height="18.70" fill="url(#nz)" stroke="#34343a" stroke-width="1.6"/>
</svg></body></html>
